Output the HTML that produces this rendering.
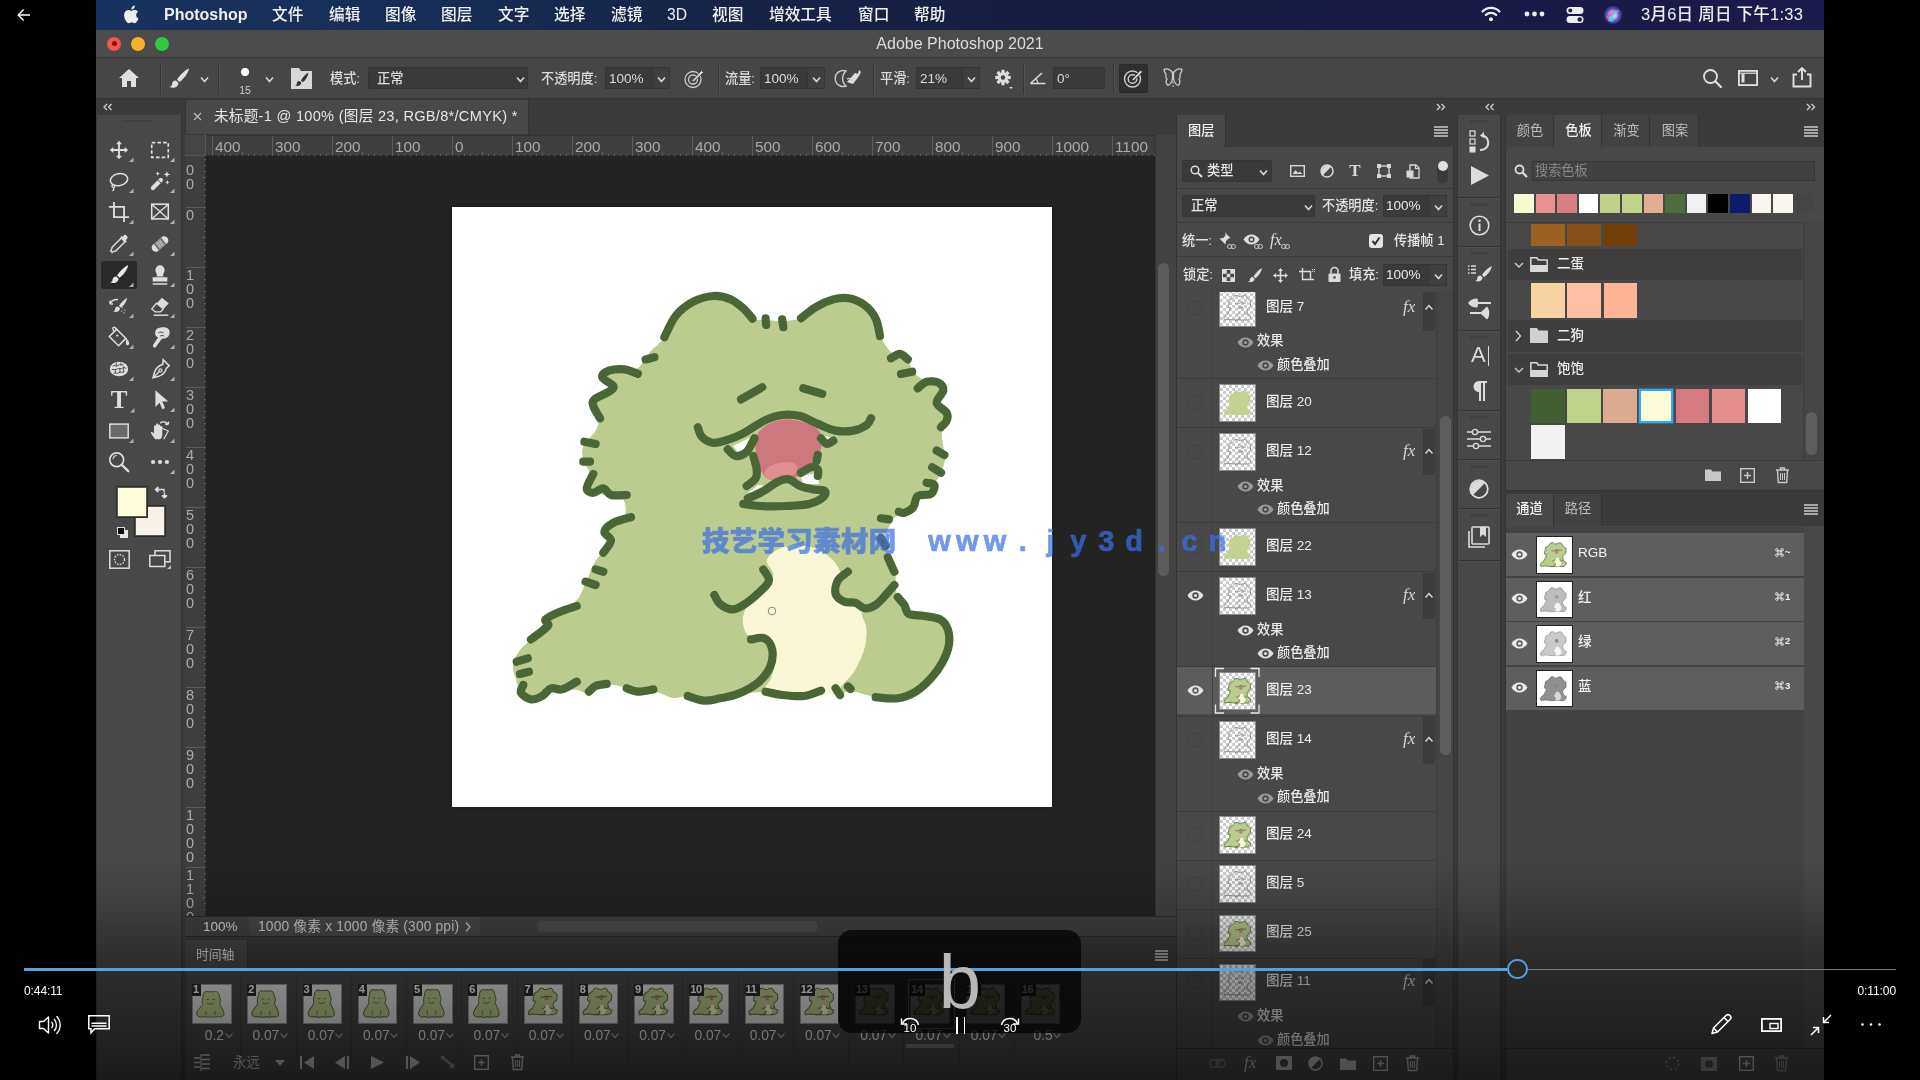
<!DOCTYPE html>
<html lang="zh"><head><meta charset="utf-8"><title>Photoshop</title>
<style>
html,body{margin:0;padding:0;background:#000;}
body{width:1920px;height:1080px;overflow:hidden;position:relative;font-family:"Liberation Sans","Noto Sans CJK SC",sans-serif;}
#root{position:absolute;left:0;top:0;width:1920px;height:1080px;overflow:hidden;will-change:transform;-webkit-font-smoothing:antialiased;}
#root div,#root svg{position:absolute;box-sizing:border-box;}
#root svg{overflow:visible;}
.t{font-family:"Liberation Sans","Noto Sans CJK SC",sans-serif;}
</style></head><body><div id="root">
<div style="left:96px;top:0px;width:1728px;height:1080px;background:#3b3b3b;"></div>
<div style="left:96px;top:0px;width:1728px;height:30px;background:linear-gradient(90deg,#17335f 0%,#172d58 18%,#172247 36%,#161b3f 60%,#1a1a48 85%,#1b1a4c 100%);"></div>
<div style="left:96px;top:30px;width:1728px;height:28px;background:#4b4b4b;border-bottom:1px solid #383838;"></div>
<div style="left:96px;top:58px;width:1728px;height:41px;background:#464646;border-bottom:1px solid #333;"></div>
<svg style="left:122px;top:4px;" width="18" height="20" viewBox="0 0 16 18"><path d="M12.6 9.9c0-2 1.6-2.9 1.7-3-0.9-1.4-2.4-1.5-2.9-1.6-1.2-.1-2.4.7-3 .7-.6 0-1.600-.7-2.600-.7-1.300 0-2.600.8-3.300 2-1.400 2.500-.4 6.100 1 8.100.7 1 1.500 2.100 2.500 2 1-.04 1.400-.65 2.600-.65 1.200 0 1.600.65 2.600.63 1.100-.02 1.800-1 2.400-2 .8-1.100 1.100-2.200 1.100-2.300-.03-.01-2.100-.8-2.100-3.200zM10.700 3.800c.5-.7.900-1.600.8-2.500-.8.030-1.700.5-2.300 1.200-.5.600-.95 1.500-.83 2.400.88.070 1.780-.44 2.330-1.100z" fill="#eee"/></svg>
<div class="t" style="top:4.30px;font-size:16px;line-height:22.40px;color:#f0f0f0;font-weight:700;white-space:nowrap;left:164px;">Photoshop</div>
<div class="t" style="top:4.01px;font-size:15.7px;line-height:21.98px;color:#f0f0f0;font-weight:500;white-space:nowrap;left:272px;">文件</div>
<div class="t" style="top:4.01px;font-size:15.7px;line-height:21.98px;color:#f0f0f0;font-weight:500;white-space:nowrap;left:329px;">编辑</div>
<div class="t" style="top:4.01px;font-size:15.7px;line-height:21.98px;color:#f0f0f0;font-weight:500;white-space:nowrap;left:385px;">图像</div>
<div class="t" style="top:4.01px;font-size:15.7px;line-height:21.98px;color:#f0f0f0;font-weight:500;white-space:nowrap;left:441px;">图层</div>
<div class="t" style="top:4.01px;font-size:15.7px;line-height:21.98px;color:#f0f0f0;font-weight:500;white-space:nowrap;left:498px;">文字</div>
<div class="t" style="top:4.01px;font-size:15.7px;line-height:21.98px;color:#f0f0f0;font-weight:500;white-space:nowrap;left:554px;">选择</div>
<div class="t" style="top:4.01px;font-size:15.7px;line-height:21.98px;color:#f0f0f0;font-weight:500;white-space:nowrap;left:611px;">滤镜</div>
<div class="t" style="top:4.01px;font-size:15.7px;line-height:21.98px;color:#f0f0f0;font-weight:500;white-space:nowrap;left:667px;">3D</div>
<div class="t" style="top:4.01px;font-size:15.7px;line-height:21.98px;color:#f0f0f0;font-weight:500;white-space:nowrap;left:712px;">视图</div>
<div class="t" style="top:4.01px;font-size:15.7px;line-height:21.98px;color:#f0f0f0;font-weight:500;white-space:nowrap;left:769px;">增效工具</div>
<div class="t" style="top:4.01px;font-size:15.7px;line-height:21.98px;color:#f0f0f0;font-weight:500;white-space:nowrap;left:858px;">窗口</div>
<div class="t" style="top:4.01px;font-size:15.7px;line-height:21.98px;color:#f0f0f0;font-weight:500;white-space:nowrap;left:914px;">帮助</div>
<div class="t" style="top:3.45px;font-size:16.5px;line-height:23.10px;color:#f0f0f0;font-weight:500;white-space:nowrap;left:1641px;letter-spacing:0.250px;">3月6日 周日 下午1:33</div>
<svg style="left:1480px;top:4px;" width="22" height="20" viewBox="0 0 22 20"><g fill="none" stroke="#eee" stroke-width="2.2" stroke-linecap="round"><path d="M2.500 7.500a12 12 0 0 1 17 0"/><path d="M5.800 11a7.400 7.400 0 0 1 10.400 0"/></g><circle cx="11" cy="15.300" r="2" fill="#eee"/></svg>
<svg style="left:1524px;top:10px;" width="22" height="8" viewBox="0 0 22 8"><circle cx="3" cy="4" r="2.400" fill="#eee"/><circle cx="10.500" cy="4" r="2.400" fill="#eee"/><circle cx="18" cy="4" r="2.400" fill="#eee"/></svg>
<svg style="left:1566px;top:6px;" width="18" height="18" viewBox="0 0 18 18"><rect x="0.500" y="1" width="17" height="7" rx="3.500" fill="#eee"/><circle cx="4.300" cy="4.500" r="2" fill="#1b1f52"/><rect x="0.500" y="10" width="17" height="7" rx="3.500" fill="#eee"/><circle cx="13.700" cy="13.500" r="2.300" fill="#1b1f52"/></svg>
<svg style="left:1603px;top:5px;" width="20" height="20" viewBox="0 0 20 20"><defs><radialGradient id="sg" cx="50%" cy="50%" r="50%"><stop offset="0" stop-color="#fff"/><stop offset="0.350" stop-color="#c9b8f0"/><stop offset="0.700" stop-color="#5a4fc0"/><stop offset="1" stop-color="#2a2f80"/></radialGradient></defs><circle cx="10" cy="10" r="9" fill="url(#sg)"/><path d="M3 13c3-5 8-8 14-7-5 1-8 4-9 9z" fill="#ff5a6a" opacity="0.850"/><path d="M5 16c1-5 5-9 11-11-4 3-6 7-6 12z" fill="#4fd8ff" opacity="0.800"/></svg>
<div style="left:107px;top:36.5px;width:14px;height:14px;background:#f4544d;border-radius:50%;"></div>
<div style="left:131px;top:36.5px;width:14px;height:14px;background:#f6b12d;border-radius:50%;"></div>
<div style="left:155px;top:36.5px;width:14px;height:14px;background:#2fc840;border-radius:50%;"></div>
<div style="left:111.5px;top:41px;width:5px;height:5px;background:#8a0d0a;border-radius:50%;"></div>
<div class="t" style="top:33.30px;font-size:16px;line-height:22.40px;color:#dcdcdc;font-weight:400;white-space:nowrap;left:660px;width:600px;text-align:center;">Adobe Photoshop 2021</div>
<svg style="left:118px;top:67px;" width="22" height="22" viewBox="0 0 22 22"><path d="M11 2 L1 11 h3 v9 h5 v-6 h4 v6 h5 v-9 h3 z" fill="#e0e0e0"/></svg>
<div style="left:160px;top:64px;width:1px;height:30px;background:#353535;"></div>
<div style="left:161px;top:64px;width:1px;height:30px;background:#525252;"></div>
<svg style="left:168px;top:67px;" width="22" height="22" viewBox="0 0 22 22"><path d="M20.500 1.500c-4 2-9 7-11.500 11l2.500 2.500c4-2.500 8-8 9.500-13z M8 13.500c-3 0-4 2-4 4 0 1.500-1.500 2-2.500 2.500 3 1.500 8.500 1 9-4z" fill="#e0e0e0"/></svg>
<svg style="left:199.5px;top:75.5px;" width="9.0" height="7.0" viewBox="0 0 9.0 7.0"><path d="M1 1.5 L4.5 5.5 L8.0 1.5" fill="none" stroke="#d4d4d4" stroke-width="1.7"/></svg>
<div style="left:218px;top:64px;width:1px;height:30px;background:#353535;"></div>
<div style="left:219px;top:64px;width:1px;height:30px;background:#525252;"></div>
<div style="left:241px;top:67.5px;width:8px;height:8px;background:#fff;border-radius:50%;"></div>
<div class="t" style="top:82.65px;font-size:10.5px;line-height:14.70px;color:#ccc;font-weight:400;white-space:nowrap;left:-55px;width:600px;text-align:center;">15</div>
<svg style="left:264.5px;top:75.5px;" width="9.0" height="7.0" viewBox="0 0 9.0 7.0"><path d="M1 1.5 L4.5 5.5 L8.0 1.5" fill="none" stroke="#d4d4d4" stroke-width="1.7"/></svg>
<svg style="left:291px;top:68px;" width="21" height="21" viewBox="0 0 21 21"><path d="M0 0h8l2 3h11v18h-21z" fill="#d8d8d8"/><path d="M17.500 4.500c-3 1.500-6 5-7.500 8l1.800 1.800c2.800-2 5.200-6 5.700-9.800z M8.500 13c-2 0-2.700 1.300-2.700 2.700 0 1-1 1.500-1.800 1.800 2 1 6 .6 6.300-2.700z" fill="#333"/></svg>
<div class="t" style="top:69.76px;font-size:13.2px;line-height:18.48px;color:#dcdcdc;font-weight:500;white-space:nowrap;left:330px;">模式:</div>
<div style="left:368px;top:67px;width:160px;height:22px;background:#3a3a3a;border:1px solid #353535;border-radius:2px;"></div>
<div class="t" style="top:69.76px;font-size:13.2px;line-height:18.48px;color:#dcdcdc;font-weight:500;white-space:nowrap;left:377px;">正常</div>
<svg style="left:515.5px;top:75.5px;" width="9.0" height="7.0" viewBox="0 0 9.0 7.0"><path d="M1 1.5 L4.5 5.5 L8.0 1.5" fill="none" stroke="#d4d4d4" stroke-width="1.7"/></svg>
<div class="t" style="top:69.76px;font-size:13.2px;line-height:18.48px;color:#dcdcdc;font-weight:500;white-space:nowrap;left:541px;">不透明度:</div>
<div style="left:605px;top:67px;width:48px;height:22px;background:#3a3a3a;border:1px solid #353535;"></div>
<div class="t" style="top:69.55px;font-size:13.5px;line-height:18.90px;color:#dcdcdc;font-weight:400;white-space:nowrap;left:609px;">100%</div>
<div style="left:653px;top:67px;width:17px;height:22px;background:#3f3f3f;border:1px solid #353535;border-left:none;"></div>
<svg style="left:657.0px;top:75.5px;" width="9.0" height="7.0" viewBox="0 0 9.0 7.0"><path d="M1 1.5 L4.5 5.5 L8.0 1.5" fill="none" stroke="#d4d4d4" stroke-width="1.7"/></svg>
<svg style="left:683px;top:67px;" width="22" height="22" viewBox="0 0 22 22"><circle cx="10" cy="12.500" r="8" fill="none" stroke="#ccc" stroke-width="1.300"/><circle cx="10" cy="12.500" r="4.500" fill="none" stroke="#ccc" stroke-width="1.300"/><path d="M9 13.500 L18.500 3.500 L20.500 5.500 L10.500 15z" fill="#ddd" stroke="#464646" stroke-width="1"/></svg>
<div style="left:718px;top:64px;width:1px;height:30px;background:#353535;"></div>
<div style="left:719px;top:64px;width:1px;height:30px;background:#525252;"></div>
<div class="t" style="top:69.76px;font-size:13.2px;line-height:18.48px;color:#dcdcdc;font-weight:500;white-space:nowrap;left:725px;">流量:</div>
<div style="left:760px;top:67px;width:48px;height:22px;background:#3a3a3a;border:1px solid #353535;"></div>
<div class="t" style="top:69.55px;font-size:13.5px;line-height:18.90px;color:#dcdcdc;font-weight:400;white-space:nowrap;left:764px;">100%</div>
<div style="left:808px;top:67px;width:17px;height:22px;background:#3f3f3f;border:1px solid #353535;border-left:none;"></div>
<svg style="left:812.0px;top:75.5px;" width="9.0" height="7.0" viewBox="0 0 9.0 7.0"><path d="M1 1.5 L4.5 5.5 L8.0 1.5" fill="none" stroke="#d4d4d4" stroke-width="1.7"/></svg>
<svg style="left:838px;top:67px;" width="24" height="22" viewBox="0 0 24 22"><path d="M8 4a8 8 0 1 0 0 15a10 10 0 0 1 0-15z" fill="none" stroke="#ccc" stroke-width="1.400"/><path d="M9 15 L17 6 l3 1 1-4 2 2 -2 4 -6 8 z" fill="#ddd"/><path d="M9 12 q3 -2 6 2" stroke="#ccc" fill="none" stroke-width="1.300"/></svg>
<div style="left:873px;top:64px;width:1px;height:30px;background:#353535;"></div>
<div style="left:874px;top:64px;width:1px;height:30px;background:#525252;"></div>
<div class="t" style="top:69.76px;font-size:13.2px;line-height:18.48px;color:#dcdcdc;font-weight:500;white-space:nowrap;left:880px;">平滑:</div>
<div style="left:916px;top:67px;width:47px;height:22px;background:#3a3a3a;border:1px solid #353535;"></div>
<div class="t" style="top:69.55px;font-size:13.5px;line-height:18.90px;color:#dcdcdc;font-weight:400;white-space:nowrap;left:920px;">21%</div>
<div style="left:963px;top:67px;width:17px;height:22px;background:#3f3f3f;border:1px solid #353535;border-left:none;"></div>
<svg style="left:967.0px;top:75.5px;" width="9.0" height="7.0" viewBox="0 0 9.0 7.0"><path d="M1 1.5 L4.5 5.5 L8.0 1.5" fill="none" stroke="#d4d4d4" stroke-width="1.7"/></svg>
<svg style="left:992px;top:67px;" width="22" height="22" viewBox="0 0 22 22"><g transform="translate(11,10.500) scale(0.860)"><rect x="-1.900" y="-9" width="3.800" height="5" transform="rotate(0)" fill="#ddd"/><rect x="-1.900" y="-9" width="3.800" height="5" transform="rotate(45)" fill="#ddd"/><rect x="-1.900" y="-9" width="3.800" height="5" transform="rotate(90)" fill="#ddd"/><rect x="-1.900" y="-9" width="3.800" height="5" transform="rotate(135)" fill="#ddd"/><rect x="-1.900" y="-9" width="3.800" height="5" transform="rotate(180)" fill="#ddd"/><rect x="-1.900" y="-9" width="3.800" height="5" transform="rotate(225)" fill="#ddd"/><rect x="-1.900" y="-9" width="3.800" height="5" transform="rotate(270)" fill="#ddd"/><rect x="-1.900" y="-9" width="3.800" height="5" transform="rotate(315)" fill="#ddd"/><circle r="6" fill="#ddd"/><circle r="2.600" fill="#464646"/></g><path d="M17 20l4 0-2 2z" fill="#ddd"/></svg>
<div style="left:1023px;top:64px;width:1px;height:30px;background:#353535;"></div>
<div style="left:1024px;top:64px;width:1px;height:30px;background:#525252;"></div>
<svg style="left:1029px;top:70px;" width="18" height="16" viewBox="0 0 18 16"><path d="M1.500 13.500 L13 3 M1.500 13.500 H16.500" stroke="#ddd" stroke-width="1.500" fill="none"/><path d="M9 13.500a7 7 0 0 0-2.500-5" stroke="#ddd" stroke-width="1.300" fill="none"/></svg>
<div style="left:1053px;top:67px;width:52px;height:22px;background:#3a3a3a;border:1px solid #353535;"></div>
<div class="t" style="top:69.55px;font-size:13.5px;line-height:18.90px;color:#dcdcdc;font-weight:400;white-space:nowrap;left:1057px;">0°</div>
<div style="left:1113px;top:64px;width:1px;height:30px;background:#353535;"></div>
<div style="left:1114px;top:64px;width:1px;height:30px;background:#525252;"></div>
<div style="left:1119px;top:64px;width:29px;height:29px;background:#2f2f2f;border:1px solid #2a2a2a;border-radius:2px;"></div>
<svg style="left:1122px;top:67px;" width="22" height="22" viewBox="0 0 22 22"><circle cx="10.500" cy="12" r="8" fill="none" stroke="#ccc" stroke-width="1.400"/><circle cx="10.500" cy="12" r="4.300" fill="none" stroke="#ccc" stroke-width="1.400"/><path d="M10 12.500 L18.500 3 L20.500 5 L11.500 14z" fill="#ddd" stroke="#2f2f2f" stroke-width="1"/></svg>
<svg style="left:1162px;top:67px;" width="22" height="22" viewBox="0 0 22 22"><path d="M10.500 6c-2-4-7-5-8.500-3.500 0 3 2 3.500 2 5.500s-1 3 1 4c-1.500 2-1 5 1 6.500 2-1 4-4 4.500-7z M11.500 6c2-4 7-5 8.500-3.500 0 3-2 3.500-2 5.500s1 3-1 4c1.500 2 1 5-1 6.500-2-1-4-4-4.500-7z" fill="none" stroke="#ccc" stroke-width="1.300"/><path d="M11 4v16" stroke="#ccc" stroke-width="1" stroke-dasharray="2 1.500"/></svg>
<svg style="left:1702px;top:68px;" width="21" height="21" viewBox="0 0 21 21"><circle cx="8.500" cy="8.500" r="6.500" fill="none" stroke="#e0e0e0" stroke-width="1.800"/><path d="M13.500 13.500L19 19" stroke="#e0e0e0" stroke-width="2.200" stroke-linecap="round"/></svg>
<svg style="left:1738px;top:70px;" width="20" height="16" viewBox="0 0 20 16"><rect x="0.900" y="0.900" width="18.200" height="14.200" fill="none" stroke="#e0e0e0" stroke-width="1.800"/><rect x="3.500" y="4" width="3" height="8.500" fill="#e0e0e0"/><path d="M1 3.200h18" stroke="#e0e0e0" stroke-width="1.200"/></svg>
<svg style="left:1769.5px;top:75.5px;" width="9.0" height="7.0" viewBox="0 0 9.0 7.0"><path d="M1 1.5 L4.5 5.5 L8.0 1.5" fill="none" stroke="#d4d4d4" stroke-width="1.7"/></svg>
<svg style="left:1792px;top:66px;" width="20" height="22" viewBox="0 0 20 22"><path d="M5 8.500H1.500V20.500H18.500V8.500H15" fill="none" stroke="#e0e0e0" stroke-width="1.900"/><path d="M10 14V2.500M6 6L10 2l4 4" fill="none" stroke="#e0e0e0" stroke-width="1.900"/></svg>
<div style="left:96px;top:99px;width:1728px;height:16px;background:#3b3b3b;"></div>
<svg style="left:103px;top:103px;" width="10" height="8" viewBox="0 0 10 8"><path d="M4 1L1 4L4 7M8.500 1L5.500 4L8.500 7" fill="none" stroke="#d0d0d0" stroke-width="1.300"/></svg>
<svg style="left:1436px;top:103px;" width="10" height="8" viewBox="0 0 10 8"><path d="M1 1L4 4L1 7M5.500 1L8.500 4L5.500 7" fill="none" stroke="#d0d0d0" stroke-width="1.300"/></svg>
<svg style="left:1485px;top:103px;" width="10" height="8" viewBox="0 0 10 8"><path d="M4 1L1 4L4 7M8.500 1L5.500 4L8.500 7" fill="none" stroke="#d0d0d0" stroke-width="1.300"/></svg>
<svg style="left:1806px;top:103px;" width="10" height="8" viewBox="0 0 10 8"><path d="M1 1L4 4L1 7M5.500 1L8.500 4L5.500 7" fill="none" stroke="#d0d0d0" stroke-width="1.300"/></svg>
<div style="left:96px;top:115px;width:86px;height:965px;background:#484848;border-left:1px solid #3a3a3a;border-right:1px solid #333;"></div>
<div style="left:122px;top:120px;width:30px;height:2px;background:#404040;"></div>
<div style="left:101px;top:261px;width:36px;height:28px;background:#2a2a2a;border-radius:3px;"></div>
<svg style="left:107px;top:138px;" width="24" height="24" viewBox="0 0 24 24"><g transform="translate(12 12) scale(0.92) translate(-12 -12)"><path d="M12 2l3.200 3.800h-2.200v5.200h5.200v-2.200l3.800 3.200-3.800 3.200v-2.200h-5.200v5.200h2.200l-3.200 3.800-3.200-3.800h2.200v-5.200h-5.200v2.200l-3.800-3.200 3.800-3.200v2.200h5.200v-5.200h-2.200z" fill="#dedede"/></g><path d="M26.500 19.500v4.500h-4.500z" fill="#b0b0b0"/></svg>
<svg style="left:148px;top:138px;" width="24" height="24" viewBox="0 0 24 24"><g transform="translate(12 12) scale(0.92) translate(-12 -12)"><rect x="3" y="4" width="18" height="16" fill="none" stroke="#dedede" stroke-width="1.800" stroke-dasharray="4 2.200"/></g><path d="M26.500 19.500v4.500h-4.500z" fill="#b0b0b0"/></svg>
<svg style="left:107px;top:169px;" width="24" height="24" viewBox="0 0 24 24"><g transform="translate(12 12) scale(0.92) translate(-12 -12)"><ellipse cx="12" cy="10.500" rx="9.500" ry="6.500" fill="none" stroke="#dedede" stroke-width="1.700" transform="rotate(-12 12 10.500)"/><path d="M5.500 15.500c-1.500 1-1.500 3 0 3.500s2.500-1.500 1-2.500M6 19c1 1.500 0 3-1 4" fill="none" stroke="#dedede" stroke-width="1.500"/></g><path d="M26.500 19.500v4.500h-4.500z" fill="#b0b0b0"/></svg>
<svg style="left:148px;top:169px;" width="24" height="24" viewBox="0 0 24 24"><g transform="translate(12 12) scale(0.92) translate(-12 -12)"><g transform="rotate(-45 9 15)"><rect x="0" y="12.700" width="17" height="4.600" rx="2.300" fill="#dedede"/><path d="M12.500 12.700v4.600" stroke="#484848" stroke-width="1"/></g><path d="M19.500 1l1 2.800 2.800 1-2.800 1-1 2.800-1-2.800-2.800-1 2.800-1z M9.500 1.500l.7 1.800 1.800.7-1.800.7-.7 1.800-.7-1.800-1.800-.7 1.800-.7z M20 11l.7 1.800 1.800.7-1.800.7-.7 1.800-.7-1.800-1.800-.7 1.800-.7z" fill="#dedede"/></g><path d="M26.500 19.500v4.500h-4.500z" fill="#b0b0b0"/></svg>
<svg style="left:107px;top:200px;" width="24" height="24" viewBox="0 0 24 24"><g transform="translate(12 12) scale(0.92) translate(-12 -12)"><path d="M6.500 1v16.500h16.500M1 6.500h16.500v16.500" fill="none" stroke="#dedede" stroke-width="2"/></g><path d="M26.500 19.500v4.500h-4.500z" fill="#b0b0b0"/></svg>
<svg style="left:148px;top:200px;" width="24" height="24" viewBox="0 0 24 24"><g transform="translate(12 12) scale(0.92) translate(-12 -12)"><rect x="3" y="3.500" width="18" height="16" fill="none" stroke="#dedede" stroke-width="1.700"/><path d="M3 3.500l18 16M21 3.500l-18 16" stroke="#dedede" stroke-width="1.500"/></g><path d="M26.500 19.500v4.500h-4.500z" fill="#b0b0b0"/></svg>
<svg style="left:107px;top:231.5px;" width="24" height="24" viewBox="0 0 24 24"><g transform="translate(12 12) scale(0.92) translate(-12 -12)"><path d="M14.500 5.500l4 4-9.500 9.500c-1.500 1.500-3.500.5-4.500 2l-1.500-1.500c1.500-1 .5-3 2-4.500z" fill="none" stroke="#dedede" stroke-width="1.600"/><path d="M13.500 4.500l6 6 1.200-1.200-1.500-1.500 2-2c1.200-1.200-2.300-4.700-3.500-3.500l-2 2-1-1z" fill="#dedede"/></g><path d="M26.500 19.500v4.500h-4.500z" fill="#b0b0b0"/></svg>
<svg style="left:148px;top:231.5px;" width="24" height="24" viewBox="0 0 24 24"><g transform="translate(12 12) scale(0.92) translate(-12 -12)"><g transform="rotate(-40 12 12)"><rect x="1.500" y="7.500" width="21" height="9" rx="4.500" fill="#dedede"/><rect x="8" y="7.500" width="8" height="9" fill="#484848" opacity="0.500"/><path d="M7.500 7.500v9M16.500 7.500v9" stroke="#484848" stroke-width="1.200"/><circle cx="10.500" cy="10.500" r="0.900" fill="#dedede"/><circle cx="13.500" cy="10.500" r="0.900" fill="#dedede"/><circle cx="10.500" cy="13.500" r="0.900" fill="#dedede"/><circle cx="13.500" cy="13.500" r="0.900" fill="#dedede"/></g></g><path d="M26.500 19.500v4.500h-4.500z" fill="#b0b0b0"/></svg>
<svg style="left:107px;top:263px;" width="24" height="24" viewBox="0 0 24 24"><g transform="translate(12 12) scale(0.92) translate(-12 -12)"><path d="M21.500 1.500c-4 2-9 7-11.500 11l2.500 2.500c4-2.500 8-8 9.500-13z M9 13.500c-3 0-4 2-4 4 0 1.500-1.500 2-2.500 2.500 3 1.500 8.500 1 9-4z" fill="#e8e8e8"/></g><path d="M26.500 19.500v4.500h-4.500z" fill="#b0b0b0"/></svg>
<svg style="left:148px;top:263px;" width="24" height="24" viewBox="0 0 24 24"><g transform="translate(12 12) scale(0.92) translate(-12 -12)"><path d="M8.500 11c-1-1.500-1.500-3-1.500-4.500a5 5 0 0 1 10 0c0 1.500-.5 3-1.500 4.500v2.500h-7z M4 14.500h16v4.500h-16z M4 21h16v1.700h-16z" fill="#dedede"/></g><path d="M26.500 19.500v4.500h-4.500z" fill="#b0b0b0"/></svg>
<svg style="left:107px;top:294px;" width="24" height="24" viewBox="0 0 24 24"><g transform="translate(12 12) scale(0.92) translate(-12 -12)"><path d="M21 3c-3 1.500-7 5.500-9 9l2 2c3-2 6-6.500 7-11z M11 12.500c-2.500 0-3.300 1.600-3.300 3.300 0 1.200-1.200 1.700-2 2 2.500 1.300 7 .8 7.400-3.300z" fill="#dedede"/><path d="M2 9.500c2-3.500 5.500-5 9-4.500M2 9.500l.3-3.500M2 9.500l3.500.300" fill="none" stroke="#dedede" stroke-width="1.500"/><path d="M16 14l.01 0M18.500 16.500l.01 0M15 17.500l.01 0M17.500 19.500l.01 0" stroke="#dedede" stroke-width="1.300" stroke-linecap="round"/></g><path d="M26.500 19.500v4.500h-4.500z" fill="#b0b0b0"/></svg>
<svg style="left:148px;top:294px;" width="24" height="24" viewBox="0 0 24 24"><g transform="translate(12 12) scale(0.92) translate(-12 -12)"><path d="M14 3l7.500 6-8.500 9.500h-6l-4-3.300z" fill="#dedede"/><path d="M3.500 15l5-6 7 6-3 3.500h-5.500z" fill="#484848"/><path d="M3 15.200l5.200-6.200 7.300 6-3 3.500h-5.500z" fill="none" stroke="#dedede" stroke-width="1.400"/><path d="M5 22h16" stroke="#dedede" stroke-width="1.600"/></g><path d="M26.500 19.500v4.500h-4.500z" fill="#b0b0b0"/></svg>
<svg style="left:107px;top:325px;" width="24" height="24" viewBox="0 0 24 24"><g transform="translate(12 12) scale(0.92) translate(-12 -12)"><path d="M9.500 3.500l10 10-8 8-10-10z" fill="none" stroke="#dedede" stroke-width="1.700"/><path d="M9.500 3.500c-3-3.500-6-2-3 2" fill="none" stroke="#dedede" stroke-width="1.500"/><path d="M3.500 11.500h14l-6 7z" fill="#dedede" opacity="0.001"/><path d="M19.500 13.500c2 1 3.500 3 3.500 5.500 0 2.500-3.500 2.500-3.500 0 0-2 .8-3 0-5.500z" fill="#dedede"/><circle cx="10" cy="10.500" r="1.200" fill="#dedede"/></g><path d="M26.500 19.500v4.500h-4.500z" fill="#b0b0b0"/></svg>
<svg style="left:148px;top:325px;" width="24" height="24" viewBox="0 0 24 24"><g transform="translate(12 12) scale(0.92) translate(-12 -12)"><path d="M7 5.500c1-3 5-4 8.500-4 4.500 0 7 2 7 5.500 0 3.500-2 6-5.500 6.500l-3 .3-6.500 9c-1.300 1.800-4.300 0-3-2l5.500-8.500c-2.500-.5-4-3-3-6.800z" fill="#dedede"/><path d="M10 7.500c2-1 4-1 6 0M12 11c1.500-.8 3-.8 4.500 0" stroke="#484848" stroke-width="1" fill="none"/></g><path d="M26.500 19.500v4.500h-4.500z" fill="#b0b0b0"/></svg>
<svg style="left:107px;top:356.5px;" width="24" height="24" viewBox="0 0 24 24"><g transform="translate(12 12) scale(0.92) translate(-12 -12)"><ellipse cx="12" cy="12" rx="10" ry="8" fill="#dedede"/><g stroke="#484848" stroke-width="1" fill="none"><path d="M5 9c2-2 4 1 6-1s4 1 6-1M4 13c2-2 4 1 6-1s4 1 6-1 3 1 4 0M6 17c2-2 4 1 6-1s4 1 6-1"/><path d="M9 5v4M14 5v3M8 12v4M13 11v5M17 9v6"/></g></g><path d="M26.500 19.500v4.500h-4.500z" fill="#b0b0b0"/></svg>
<svg style="left:148px;top:356.5px;" width="24" height="24" viewBox="0 0 24 24"><g transform="translate(12 12) scale(0.92) translate(-12 -12)"><path d="M15.500 2l6.500 6.500-3 2.500c-1 4-3 7-8.500 9l-6 1.500 1.500-6c2-5.500 5-7.500 9-8.500z" fill="none" stroke="#dedede" stroke-width="1.700"/><path d="M4.500 21.500l7-7" stroke="#dedede" stroke-width="1.400"/><circle cx="12.500" cy="13.500" r="1.700" fill="none" stroke="#dedede" stroke-width="1.300"/></g><path d="M26.500 19.500v4.500h-4.500z" fill="#b0b0b0"/></svg>
<div class="t" style="left:107px;top:381px;width:24px;height:36px;text-align:center;font-family:'Liberation Serif',serif;font-weight:700;font-size:25px;line-height:37px;color:#dedede;">T</div>
<svg style="left:129.5px;top:407.5px;" width="5" height="5" viewBox="0 0 5 5"><path d="M4.500 0v4.500h-4.500z" fill="#b0b0b0"/></svg>
<svg style="left:148px;top:388px;" width="24" height="24" viewBox="0 0 24 24"><g transform="translate(12 12) scale(0.92) translate(-12 -12)"><path d="M7 1.500v18l4.500-4.500 3 7 3-1.300-3-7h6.500z" fill="#dedede"/></g><path d="M26.500 19.500v4.500h-4.500z" fill="#b0b0b0"/></svg>
<svg style="left:107px;top:419px;" width="24" height="24" viewBox="0 0 24 24"><g transform="translate(12 12) scale(0.92) translate(-12 -12)"><rect x="2" y="4.500" width="20" height="15" fill="#6a6a6a" stroke="#dedede" stroke-width="1.600"/></g><path d="M26.500 19.500v4.500h-4.500z" fill="#b0b0b0"/></svg>
<svg style="left:148px;top:419px;" width="24" height="24" viewBox="0 0 24 24"><g transform="translate(12 12) scale(0.92) translate(-12 -12)"><path d="M7 21c-2-2-4-5-5-7.500 1.200-1.200 2.800 0 3.500 1.500v-8c0-1.500 2.200-1.500 2.200 0v-2c0-1.500 2.300-1.500 2.300 0v1c0-1.500 2.300-1.500 2.300 0v1.500c0-1.400 2.200-1.400 2.200 0v8c0 3-1.500 4.500-2 5.500z" fill="#dedede"/><path d="M12 3.500c3-2.500 7-1.500 9 1.500M21 5l.3-3.200M21 5l-3.200-.300" fill="none" stroke="#dedede" stroke-width="1.500"/><path d="M14 9l7 3-5 9" fill="none" stroke="#dedede" stroke-width="1.300"/></g><path d="M26.500 19.500v4.500h-4.500z" fill="#b0b0b0"/></svg>
<svg style="left:107px;top:450px;" width="24" height="24" viewBox="0 0 24 24"><g transform="translate(12 12) scale(0.92) translate(-12 -12)"><circle cx="9.500" cy="9.500" r="7.500" fill="none" stroke="#dedede" stroke-width="1.800"/><path d="M15 15l7 7" stroke="#dedede" stroke-width="2.600" stroke-linecap="round"/><path d="M5.500 9a4 4 0 0 1 4-4" fill="none" stroke="#dedede" stroke-width="1.200"/></g></svg>
<svg style="left:148px;top:450px;" width="24" height="24" viewBox="0 0 24 24"><g transform="translate(12 12) scale(0.92) translate(-12 -12)"><circle cx="4.500" cy="12" r="2.300" fill="#dedede"/><circle cx="12" cy="12" r="2.300" fill="#dedede"/><circle cx="19.500" cy="12" r="2.300" fill="#dedede"/></g><path d="M26.500 19.500v4.500h-4.500z" fill="#b0b0b0"/></svg>
<div style="left:135px;top:506px;width:30px;height:30px;background:#f8f2ea;border:1px solid #5a5a5a;box-shadow:0 0 0 1px #2c2c2c;"></div>
<div style="left:117px;top:487px;width:30px;height:30px;background:#fdfddb;border:1px solid #5a5a5a;box-shadow:0 0 0 1px #2c2c2c;"></div>
<svg style="left:155px;top:486px;" width="13" height="13" viewBox="0 0 13 13"><path d="M3 1L0.500 3.500 3 6M0.500 3.500h8.500v3M9.500 12l-2.500-2.500M9.500 12l2.500-2.500M9.500 12v-5" fill="none" stroke="#dedede" stroke-width="1.400"/><path d="M0 3.500l3.500-3v6z M9.500 12.500l-3-3.500h6z" fill="#dedede"/></svg>
<div style="left:120px;top:530px;width:8px;height:8px;background:#e8e8e8;"></div>
<div style="left:117px;top:527px;width:8px;height:8px;background:#111;border:1px solid #ddd;"></div>
<svg style="left:109px;top:550px;" width="21" height="19" viewBox="0 0 21 19"><rect x="0.800" y="0.800" width="19.400" height="17.400" fill="none" stroke="#dedede" stroke-width="1.500"/><circle cx="10.500" cy="9.500" r="5" fill="none" stroke="#dedede" stroke-width="1.300" stroke-dasharray="1.600 1.300"/></svg>
<svg style="left:149px;top:550px;" width="22" height="19" viewBox="0 0 22 19"><rect x="6" y="0.800" width="15" height="11" fill="#484848" stroke="#dedede" stroke-width="1.500"/><rect x="0.800" y="5.500" width="15" height="11" fill="#484848" stroke="#dedede" stroke-width="1.500"/><path d="M22 15v4h-4z" fill="#bbb"/></svg>
<div style="left:183px;top:99px;width:993px;height:35px;background:#3b3b3b;"></div>
<div style="left:185px;top:100px;width:344px;height:34px;background:#484848;border-left:1px solid #333;border-right:1px solid #333;"></div>
<svg style="left:193px;top:112px;" width="9" height="9" viewBox="0 0 9 9"><path d="M1 1l7 7M8 1l-7 7" stroke="#bbb" stroke-width="1.200"/></svg>
<div class="t" style="top:105.78px;font-size:14.6px;line-height:20.44px;color:#e6e6e6;font-weight:400;white-space:nowrap;left:214px;letter-spacing:0.280px;">未标题-1 @ 100% (图层 23, RGB/8*/CMYK) *</div>
<div style="left:185px;top:135px;width:991px;height:21px;background:#3e3e3e;border-top:1px solid #333;border-bottom:1px solid #2c2c2c;"></div>
<div style="left:185px;top:135px;width:21px;height:781px;background:#3e3e3e;border-right:1px solid #2c2c2c;"></div>
<div style="left:185px;top:135px;width:21px;height:21px;background:#454545;border-right:1px dotted #666;border-bottom:1px dotted #666;"></div>
<svg style="left:0px;top:0px;" width="1920" height="160" viewBox="0 0 1920 160"><path d="M212.5 136V156M218.5 154V156M224.5 154V156M230.5 154V156M236.5 154V156M242.5 152V156M248.5 154V156M254.5 154V156M260.5 154V156M266.5 154V156M272.5 136V156M278.5 154V156M284.5 154V156M290.5 154V156M296.5 154V156M302.5 152V156M308.5 154V156M314.5 154V156M320.5 154V156M326.5 154V156M332.5 136V156M338.5 154V156M344.5 154V156M350.5 154V156M356.5 154V156M362.5 152V156M368.5 154V156M374.5 154V156M380.5 154V156M386.5 154V156M392.5 136V156M398.5 154V156M404.5 154V156M410.5 154V156M416.5 154V156M422.5 152V156M428.5 154V156M434.5 154V156M440.5 154V156M446.5 154V156M452.5 136V156M458.5 154V156M464.5 154V156M470.5 154V156M476.5 154V156M482.5 152V156M488.5 154V156M494.5 154V156M500.5 154V156M506.5 154V156M512.5 136V156M518.5 154V156M524.5 154V156M530.5 154V156M536.5 154V156M542.5 152V156M548.5 154V156M554.5 154V156M560.5 154V156M566.5 154V156M572.5 136V156M578.5 154V156M584.5 154V156M590.5 154V156M596.5 154V156M602.5 152V156M608.5 154V156M614.5 154V156M620.5 154V156M626.5 154V156M632.5 136V156M638.5 154V156M644.5 154V156M650.5 154V156M656.5 154V156M662.5 152V156M668.5 154V156M674.5 154V156M680.5 154V156M686.5 154V156M692.5 136V156M698.5 154V156M704.5 154V156M710.5 154V156M716.5 154V156M722.5 152V156M728.5 154V156M734.5 154V156M740.5 154V156M746.5 154V156M752.5 136V156M758.5 154V156M764.5 154V156M770.5 154V156M776.5 154V156M782.5 152V156M788.5 154V156M794.5 154V156M800.5 154V156M806.5 154V156M812.5 136V156M818.5 154V156M824.5 154V156M830.5 154V156M836.5 154V156M842.5 152V156M848.5 154V156M854.5 154V156M860.5 154V156M866.5 154V156M872.5 136V156M878.5 154V156M884.5 154V156M890.5 154V156M896.5 154V156M902.5 152V156M908.5 154V156M914.5 154V156M920.5 154V156M926.5 154V156M932.5 136V156M938.5 154V156M944.5 154V156M950.5 154V156M956.5 154V156M962.5 152V156M968.5 154V156M974.5 154V156M980.5 154V156M986.5 154V156M992.5 136V156M998.5 154V156M1004.5 154V156M1010.5 154V156M1016.5 154V156M1022.5 152V156M1028.5 154V156M1034.5 154V156M1040.5 154V156M1046.5 154V156M1052.5 136V156M1058.5 154V156M1064.5 154V156M1070.5 154V156M1076.5 154V156M1082.5 152V156M1088.5 154V156M1094.5 154V156M1100.5 154V156M1106.5 154V156M1112.5 136V156M1118.5 154V156M1124.5 154V156M1130.5 154V156M1136.5 154V156M1142.5 152V156M1148.5 154V156M1154.5 154V156" stroke="#5c5c5c" stroke-width="1" fill="none"/></svg>
<div class="t" style="top:135.79px;font-size:15.3px;line-height:21.42px;color:#ababab;font-weight:400;white-space:nowrap;left:215px;">400</div>
<div class="t" style="top:135.79px;font-size:15.3px;line-height:21.42px;color:#ababab;font-weight:400;white-space:nowrap;left:275px;">300</div>
<div class="t" style="top:135.79px;font-size:15.3px;line-height:21.42px;color:#ababab;font-weight:400;white-space:nowrap;left:335px;">200</div>
<div class="t" style="top:135.79px;font-size:15.3px;line-height:21.42px;color:#ababab;font-weight:400;white-space:nowrap;left:395px;">100</div>
<div class="t" style="top:135.79px;font-size:15.3px;line-height:21.42px;color:#ababab;font-weight:400;white-space:nowrap;left:455px;">0</div>
<div class="t" style="top:135.79px;font-size:15.3px;line-height:21.42px;color:#ababab;font-weight:400;white-space:nowrap;left:515px;">100</div>
<div class="t" style="top:135.79px;font-size:15.3px;line-height:21.42px;color:#ababab;font-weight:400;white-space:nowrap;left:575px;">200</div>
<div class="t" style="top:135.79px;font-size:15.3px;line-height:21.42px;color:#ababab;font-weight:400;white-space:nowrap;left:635px;">300</div>
<div class="t" style="top:135.79px;font-size:15.3px;line-height:21.42px;color:#ababab;font-weight:400;white-space:nowrap;left:695px;">400</div>
<div class="t" style="top:135.79px;font-size:15.3px;line-height:21.42px;color:#ababab;font-weight:400;white-space:nowrap;left:755px;">500</div>
<div class="t" style="top:135.79px;font-size:15.3px;line-height:21.42px;color:#ababab;font-weight:400;white-space:nowrap;left:815px;">600</div>
<div class="t" style="top:135.79px;font-size:15.3px;line-height:21.42px;color:#ababab;font-weight:400;white-space:nowrap;left:875px;">700</div>
<div class="t" style="top:135.79px;font-size:15.3px;line-height:21.42px;color:#ababab;font-weight:400;white-space:nowrap;left:935px;">800</div>
<div class="t" style="top:135.79px;font-size:15.3px;line-height:21.42px;color:#ababab;font-weight:400;white-space:nowrap;left:995px;">900</div>
<div class="t" style="top:135.79px;font-size:15.3px;line-height:21.42px;color:#ababab;font-weight:400;white-space:nowrap;left:1055px;">1000</div>
<div class="t" style="top:135.79px;font-size:15.3px;line-height:21.42px;color:#ababab;font-weight:400;white-space:nowrap;left:1115px;">1100</div>
<svg style="left:0px;top:0px;" width="210" height="920" viewBox="0 0 210 920"><path d="M204 159.5H206M204 165.5H206M204 171.5H206M202 177.5H206M204 183.5H206M204 189.5H206M204 195.5H206M204 201.5H206M186 207.5H206M204 213.5H206M204 219.5H206M204 225.5H206M204 231.5H206M202 237.5H206M204 243.5H206M204 249.5H206M204 255.5H206M204 261.5H206M186 267.5H206M204 273.5H206M204 279.5H206M204 285.5H206M204 291.5H206M202 297.5H206M204 303.5H206M204 309.5H206M204 315.5H206M204 321.5H206M186 327.5H206M204 333.5H206M204 339.5H206M204 345.5H206M204 351.5H206M202 357.5H206M204 363.5H206M204 369.5H206M204 375.5H206M204 381.5H206M186 387.5H206M204 393.5H206M204 399.5H206M204 405.5H206M204 411.5H206M202 417.5H206M204 423.5H206M204 429.5H206M204 435.5H206M204 441.5H206M186 447.5H206M204 453.5H206M204 459.5H206M204 465.5H206M204 471.5H206M202 477.5H206M204 483.5H206M204 489.5H206M204 495.5H206M204 501.5H206M186 507.5H206M204 513.5H206M204 519.5H206M204 525.5H206M204 531.5H206M202 537.5H206M204 543.5H206M204 549.5H206M204 555.5H206M204 561.5H206M186 567.5H206M204 573.5H206M204 579.5H206M204 585.5H206M204 591.5H206M202 597.5H206M204 603.5H206M204 609.5H206M204 615.5H206M204 621.5H206M186 627.5H206M204 633.5H206M204 639.5H206M204 645.5H206M204 651.5H206M202 657.5H206M204 663.5H206M204 669.5H206M204 675.5H206M204 681.5H206M186 687.5H206M204 693.5H206M204 699.5H206M204 705.5H206M204 711.5H206M202 717.5H206M204 723.5H206M204 729.5H206M204 735.5H206M204 741.5H206M186 747.5H206M204 753.5H206M204 759.5H206M204 765.5H206M204 771.5H206M202 777.5H206M204 783.5H206M204 789.5H206M204 795.5H206M204 801.5H206M186 807.5H206M204 813.5H206M204 819.5H206M204 825.5H206M204 831.5H206M202 837.5H206M204 843.5H206M204 849.5H206M204 855.5H206M204 861.5H206M186 867.5H206M204 873.5H206M204 879.5H206M204 885.5H206M204 891.5H206M202 897.5H206M204 903.5H206M204 909.5H206" stroke="#5c5c5c" stroke-width="1" fill="none"/></svg>
<div style="left:185px;top:156px;width:20px;height:760px;background:none;overflow:hidden;"><div class="t" style="left:0;width:10px;text-align:center;top:3.85px;font-size:14.500px;line-height:20.300px;color:#ababab;">0</div><div class="t" style="left:0;width:10px;text-align:center;top:17.85px;font-size:14.500px;line-height:20.300px;color:#ababab;">0</div><div class="t" style="left:0;width:10px;text-align:center;top:48.85px;font-size:14.500px;line-height:20.300px;color:#ababab;">0</div><div class="t" style="left:0;width:10px;text-align:center;top:108.85px;font-size:14.500px;line-height:20.300px;color:#ababab;">1</div><div class="t" style="left:0;width:10px;text-align:center;top:122.85px;font-size:14.500px;line-height:20.300px;color:#ababab;">0</div><div class="t" style="left:0;width:10px;text-align:center;top:136.85px;font-size:14.500px;line-height:20.300px;color:#ababab;">0</div><div class="t" style="left:0;width:10px;text-align:center;top:168.85px;font-size:14.500px;line-height:20.300px;color:#ababab;">2</div><div class="t" style="left:0;width:10px;text-align:center;top:182.85px;font-size:14.500px;line-height:20.300px;color:#ababab;">0</div><div class="t" style="left:0;width:10px;text-align:center;top:196.85px;font-size:14.500px;line-height:20.300px;color:#ababab;">0</div><div class="t" style="left:0;width:10px;text-align:center;top:228.85px;font-size:14.500px;line-height:20.300px;color:#ababab;">3</div><div class="t" style="left:0;width:10px;text-align:center;top:242.85px;font-size:14.500px;line-height:20.300px;color:#ababab;">0</div><div class="t" style="left:0;width:10px;text-align:center;top:256.85px;font-size:14.500px;line-height:20.300px;color:#ababab;">0</div><div class="t" style="left:0;width:10px;text-align:center;top:288.85px;font-size:14.500px;line-height:20.300px;color:#ababab;">4</div><div class="t" style="left:0;width:10px;text-align:center;top:302.85px;font-size:14.500px;line-height:20.300px;color:#ababab;">0</div><div class="t" style="left:0;width:10px;text-align:center;top:316.85px;font-size:14.500px;line-height:20.300px;color:#ababab;">0</div><div class="t" style="left:0;width:10px;text-align:center;top:348.85px;font-size:14.500px;line-height:20.300px;color:#ababab;">5</div><div class="t" style="left:0;width:10px;text-align:center;top:362.85px;font-size:14.500px;line-height:20.300px;color:#ababab;">0</div><div class="t" style="left:0;width:10px;text-align:center;top:376.85px;font-size:14.500px;line-height:20.300px;color:#ababab;">0</div><div class="t" style="left:0;width:10px;text-align:center;top:408.85px;font-size:14.500px;line-height:20.300px;color:#ababab;">6</div><div class="t" style="left:0;width:10px;text-align:center;top:422.85px;font-size:14.500px;line-height:20.300px;color:#ababab;">0</div><div class="t" style="left:0;width:10px;text-align:center;top:436.85px;font-size:14.500px;line-height:20.300px;color:#ababab;">0</div><div class="t" style="left:0;width:10px;text-align:center;top:468.85px;font-size:14.500px;line-height:20.300px;color:#ababab;">7</div><div class="t" style="left:0;width:10px;text-align:center;top:482.85px;font-size:14.500px;line-height:20.300px;color:#ababab;">0</div><div class="t" style="left:0;width:10px;text-align:center;top:496.85px;font-size:14.500px;line-height:20.300px;color:#ababab;">0</div><div class="t" style="left:0;width:10px;text-align:center;top:528.85px;font-size:14.500px;line-height:20.300px;color:#ababab;">8</div><div class="t" style="left:0;width:10px;text-align:center;top:542.85px;font-size:14.500px;line-height:20.300px;color:#ababab;">0</div><div class="t" style="left:0;width:10px;text-align:center;top:556.85px;font-size:14.500px;line-height:20.300px;color:#ababab;">0</div><div class="t" style="left:0;width:10px;text-align:center;top:588.85px;font-size:14.500px;line-height:20.300px;color:#ababab;">9</div><div class="t" style="left:0;width:10px;text-align:center;top:602.85px;font-size:14.500px;line-height:20.300px;color:#ababab;">0</div><div class="t" style="left:0;width:10px;text-align:center;top:616.85px;font-size:14.500px;line-height:20.300px;color:#ababab;">0</div><div class="t" style="left:0;width:10px;text-align:center;top:648.85px;font-size:14.500px;line-height:20.300px;color:#ababab;">1</div><div class="t" style="left:0;width:10px;text-align:center;top:662.85px;font-size:14.500px;line-height:20.300px;color:#ababab;">0</div><div class="t" style="left:0;width:10px;text-align:center;top:676.85px;font-size:14.500px;line-height:20.300px;color:#ababab;">0</div><div class="t" style="left:0;width:10px;text-align:center;top:690.85px;font-size:14.500px;line-height:20.300px;color:#ababab;">0</div><div class="t" style="left:0;width:10px;text-align:center;top:708.85px;font-size:14.500px;line-height:20.300px;color:#ababab;">1</div><div class="t" style="left:0;width:10px;text-align:center;top:722.85px;font-size:14.500px;line-height:20.300px;color:#ababab;">1</div><div class="t" style="left:0;width:10px;text-align:center;top:736.85px;font-size:14.500px;line-height:20.300px;color:#ababab;">0</div><div class="t" style="left:0;width:10px;text-align:center;top:750.85px;font-size:14.500px;line-height:20.300px;color:#ababab;">0</div></div>
<div style="left:206px;top:156px;width:949px;height:760px;background:#232323;"></div>
<div style="left:1155px;top:135px;width:21px;height:781px;background:#434343;border-left:1px solid #333;"></div>
<div style="left:1158px;top:263px;width:11px;height:313px;background:#5c5c5c;border-radius:6px;"></div>
<div style="left:452px;top:207px;width:600px;height:600px;background:#ffffff;box-shadow:0 0 3px rgba(0,0,0,0.5);"></div>
<svg style="left:0px;top:0px;" width="1920" height="1080" viewBox="0 0 1920 1080"><path d="M664.0 338.0C668.3 332.0 671.2 322.0 676.0 316.0C680.8 310.0 686.8 305.3 693.0 302.0C699.2 298.7 706.7 296.5 713.0 296.0C719.3 295.5 725.7 296.7 731.0 299.0C736.3 301.3 741.3 306.7 745.0 310.0C748.7 313.3 749.5 317.3 753.0 319.0C756.5 320.7 761.0 319.7 766.0 320.0C771.0 320.3 777.2 321.3 783.0 321.0C788.8 320.7 795.5 320.3 801.0 318.0C806.5 315.7 810.7 310.2 816.0 307.0C821.3 303.8 827.5 300.5 833.0 299.0C838.5 297.5 843.8 297.0 849.0 298.0C854.2 299.0 859.5 301.7 864.0 305.0C868.5 308.3 873.2 312.7 876.0 318.0C878.8 323.3 878.5 331.3 881.0 337.0C883.5 342.7 887.8 349.3 891.0 352.0C894.2 354.7 897.2 351.7 900.0 353.0C902.8 354.3 905.5 356.5 908.0 360.0C910.5 363.5 911.8 370.5 915.0 374.0C918.2 377.5 923.0 379.5 927.0 381.0C931.0 382.5 936.2 381.3 939.0 383.0C941.8 384.7 944.2 387.7 944.0 391.0C943.8 394.3 937.5 399.3 938.0 403.0C938.5 406.7 945.2 410.2 947.0 413.0C948.8 415.8 949.8 416.8 949.0 420.0C948.2 423.2 942.8 427.0 942.0 432.0C941.2 437.0 943.3 446.0 944.0 450.0C944.7 454.0 946.5 452.2 946.0 456.0C945.5 459.8 943.0 468.2 941.0 473.0C939.0 477.8 935.7 481.2 934.0 485.0C932.3 488.8 933.7 493.8 931.0 496.0C928.3 498.2 921.0 495.7 918.0 498.0C915.0 500.3 916.0 507.3 913.0 510.0C910.0 512.7 903.3 512.3 900.0 514.0C896.7 515.7 895.7 515.7 893.0 520.0C890.3 524.3 884.7 533.7 884.0 540.0C883.3 546.3 887.2 552.7 889.0 558.0C890.8 563.3 893.7 565.5 895.0 572.0C896.3 578.5 895.3 591.3 897.0 597.0C898.7 602.7 903.0 603.2 905.0 606.0C907.0 608.8 905.8 612.3 909.0 614.0C912.2 615.7 918.8 615.2 924.0 616.0C929.2 616.8 936.0 616.7 940.0 619.0C944.0 621.3 946.5 625.7 948.0 630.0C949.5 634.3 950.0 639.5 949.0 645.0C948.0 650.5 945.0 657.5 942.0 663.0C939.0 668.5 935.3 673.2 931.0 678.0C926.7 682.8 921.5 688.7 916.0 692.0C910.5 695.3 904.7 697.2 898.0 698.0C891.3 698.8 884.0 698.2 876.0 697.0C868.0 695.8 856.0 691.3 850.0 691.0C844.0 690.7 844.8 695.0 840.0 695.0C835.2 695.0 827.0 690.8 821.0 691.0C815.0 691.2 810.5 695.3 804.0 696.0C797.5 696.7 788.3 695.7 782.0 695.0C775.7 694.3 773.3 692.2 766.0 692.0C758.7 691.8 745.7 693.0 738.0 694.0C730.3 695.0 725.7 696.8 720.0 698.0C714.3 699.2 709.3 701.3 704.0 701.0C698.7 700.7 693.2 696.5 688.0 696.0C682.8 695.5 678.3 698.7 673.0 698.0C667.7 697.3 661.8 693.0 656.0 692.0C650.2 691.0 642.8 692.7 638.0 692.0C633.2 691.3 632.2 689.3 627.0 688.0C621.8 686.7 612.2 684.3 607.0 684.0C601.8 683.7 599.0 684.3 596.0 686.0C593.0 687.7 592.2 693.3 589.0 694.0C585.8 694.7 581.5 690.7 577.0 690.0C572.5 689.3 566.3 690.2 562.0 690.0C557.7 689.8 554.3 688.0 551.0 689.0C547.7 690.0 545.3 694.2 542.0 696.0C538.7 697.8 534.5 700.5 531.0 700.0C527.5 699.5 523.5 696.3 521.0 693.0C518.5 689.7 517.3 684.7 516.0 680.0C514.7 675.3 512.3 670.0 513.0 665.0C513.7 660.0 517.0 654.3 520.0 650.0C523.0 645.7 526.8 643.7 531.0 639.0C535.2 634.3 540.2 626.7 545.0 622.0C549.8 617.3 554.7 614.7 560.0 611.0C565.3 607.3 572.7 604.8 577.0 600.0C581.3 595.2 582.8 588.7 586.0 582.0C589.2 575.3 593.2 564.8 596.0 560.0C598.8 555.2 601.0 556.3 603.0 553.0C605.0 549.7 607.8 543.8 608.0 540.0C608.2 536.2 603.2 533.0 604.0 530.0C604.8 527.0 609.5 524.3 613.0 522.0C616.5 519.7 623.5 520.0 625.0 516.0C626.5 512.0 626.2 501.7 622.0 498.0C617.8 494.3 605.8 495.5 600.0 494.0C594.2 492.5 588.7 492.3 587.0 489.0C585.3 485.7 590.5 478.5 590.0 474.0C589.5 469.5 585.2 466.5 584.0 462.0C582.8 457.5 581.0 452.3 583.0 447.0C585.0 441.7 593.5 434.7 596.0 430.0C598.5 425.3 598.5 423.0 598.0 419.0C597.5 415.0 593.7 409.3 593.0 406.0C592.3 402.7 591.3 401.5 594.0 399.0C596.7 396.5 606.0 393.2 609.0 391.0C612.0 388.8 613.2 388.2 612.0 386.0C610.8 383.8 603.3 380.3 602.0 378.0C600.7 375.7 600.2 373.7 604.0 372.0C607.8 370.3 619.3 368.7 625.0 368.0C630.7 367.3 633.8 370.7 638.0 368.0C642.2 365.3 645.7 357.0 650.0 352.0C654.3 347.0 659.7 344.0 664.0 338.0Z" fill="#bccb8e"/><path d="M766.7 560.6C767.5 556.5 772.6 552.0 777.8 549.4C783.0 546.8 791.1 545.0 797.8 545.0C804.5 545.0 811.9 546.8 817.8 549.4C823.7 552.0 829.3 556.3 833.3 560.6C837.3 564.9 838.9 569.3 842.0 575.0C845.1 580.7 848.6 588.9 852.0 595.0C855.4 601.1 859.8 606.0 862.2 611.7C864.7 617.4 866.3 623.1 866.7 629.4C867.1 635.7 866.2 642.7 864.4 649.4C862.5 656.1 858.9 663.8 855.6 669.4C852.3 675.0 848.5 678.7 844.4 682.8C840.3 686.9 838.4 691.7 831.0 693.9C823.6 696.1 811.1 696.0 800.0 696.0C788.9 696.0 769.2 696.9 764.4 693.9C759.6 690.9 769.1 683.8 771.0 678.3C772.9 672.8 775.2 666.1 775.6 660.6C776.0 655.1 775.2 648.7 773.3 645.0C771.4 641.3 768.5 639.8 764.4 638.3C760.3 636.8 752.4 638.2 748.9 636.0C745.4 633.8 744.0 629.0 743.3 625.0C742.5 621.0 742.7 615.8 744.4 611.7C746.1 607.6 749.2 604.7 753.3 600.6C757.4 596.5 765.6 591.7 768.9 587.2C772.2 582.8 773.7 578.3 773.3 573.9C772.9 569.5 766.0 564.7 766.7 560.6Z" fill="#faf7d6"/><path d="M847.8 571.7C842.4 576.0 839.8 576.9 837.8 580.6C835.8 584.3 834.5 590.4 835.6 593.9C836.7 597.4 841.1 600.2 844.4 601.7C847.7 603.2 852.3 601.7 855.6 602.8C858.9 603.9 861.1 607.9 864.4 608.3C867.7 608.7 871.9 607.4 875.6 605.0C879.3 602.6 883.6 597.2 886.7 593.9C889.8 590.6 893.4 590.6 894.4 585.0C895.4 579.4 897.1 565.0 893.0 560.0C888.9 555.0 877.5 553.0 870.0 555.0C862.5 557.0 853.2 567.4 847.8 571.7Z" fill="#bccb8e"/><path d="M862.0 611.0C859.8 614.9 866.3 623.0 866.7 629.4C867.1 635.8 866.2 642.7 864.4 649.4C862.5 656.1 858.5 663.6 855.6 669.4C852.7 675.2 846.3 680.2 847.0 684.0C847.7 687.8 855.2 689.8 860.0 692.0C864.8 694.2 869.7 696.0 876.0 697.0C882.3 698.0 891.3 698.8 898.0 698.0C904.7 697.2 910.5 695.3 916.0 692.0C921.5 688.7 926.7 682.8 931.0 678.0C935.3 673.2 939.0 668.5 942.0 663.0C945.0 657.5 948.0 650.5 949.0 645.0C950.0 639.5 949.5 634.3 948.0 630.0C946.5 625.7 946.5 621.7 940.0 619.0C933.5 616.3 916.2 617.2 909.0 614.0C901.8 610.8 901.8 601.3 897.0 600.0C892.2 598.7 885.8 604.2 880.0 606.0C874.2 607.8 864.2 607.1 862.0 611.0Z" fill="#bccb8e"/><path d="M755.6 438.3C757.1 432.4 761.9 428.1 766.7 425.0C771.5 421.9 778.5 419.9 784.4 419.4C790.3 418.8 796.6 420.0 802.2 421.7C807.8 423.4 814.5 426.2 817.8 429.4C821.1 432.5 822.2 435.8 822.2 440.6C822.2 445.4 820.0 453.5 817.8 458.3C815.6 463.1 813.0 466.1 808.9 469.4C804.8 472.7 798.8 476.4 793.3 478.3C787.8 480.2 780.4 481.0 775.6 480.6C770.8 480.2 767.4 479.3 764.4 476.0C761.4 472.7 759.3 466.9 757.8 460.6C756.3 454.3 754.1 444.2 755.6 438.3Z" fill="#cd777e"/><ellipse cx="781" cy="471" rx="17" ry="8.500" fill="#e08e92" transform="rotate(-12 781 471)"/><path d="M733 446L751 437L747 448L738 452Z" fill="#fff"/><path d="M823 435L832 438L827 442Z" fill="#fff"/><path d="M801 476L817 473L819 484L803 484Z" fill="#fff"/><path d="M747 494L758 485L765 486L754 496Z" fill="#fff"/><path d="M747.8 498.3C750.9 496.3 757.2 494.5 762.2 491.7C767.2 488.9 773.3 483.8 777.8 481.7C782.2 479.6 785.2 478.7 788.9 479.4C792.6 480.1 795.9 484.3 800.0 486.0C804.1 487.7 809.2 488.6 813.3 489.4C817.4 490.2 822.7 489.3 824.4 490.6C826.1 491.9 825.9 495.0 823.3 497.2C820.7 499.4 815.0 502.4 808.9 503.9C802.8 505.4 794.9 505.6 786.7 506.0C778.6 506.4 767.2 506.4 760.0 506.0C752.8 505.6 745.3 505.2 743.3 503.9C741.3 502.6 744.6 500.3 747.8 498.3Z" fill="#bccb8e"/><path d="M664.4 337.2C666.3 333.7 670.8 321.9 675.6 316.0C680.4 310.1 687.0 305.0 693.3 301.7C699.6 298.4 707.0 296.4 713.3 296.0C719.6 295.6 725.9 297.2 731.0 299.4C736.1 301.6 740.4 305.8 744.0 309.0C747.6 312.2 751.1 317.1 752.5 318.7" fill="none" stroke="#4a6536" stroke-width="8.200" stroke-linecap="round" stroke-linejoin="round"/><path d="M765.6 318.3 L766.2 325.0" fill="none" stroke="#4a6536" stroke-width="8.200" stroke-linecap="round" stroke-linejoin="round"/><path d="M782.2 319.4 L783.3 327.2" fill="none" stroke="#4a6536" stroke-width="8.200" stroke-linecap="round" stroke-linejoin="round"/><path d="M645.6 359.4 L654.4 357.2" fill="none" stroke="#4a6536" stroke-width="8.200" stroke-linecap="round" stroke-linejoin="round"/><path d="M637.8 373.9C635.6 373.1 629.2 369.9 624.4 369.4C619.6 368.8 612.6 369.3 608.9 370.6C605.2 371.9 601.5 374.6 602.2 377.2C602.9 379.8 612.2 383.6 613.3 386.0C614.4 388.4 612.0 389.5 608.9 391.7C605.8 393.9 597.0 397.0 594.4 399.4C591.8 401.8 592.4 402.9 593.3 406.0C594.2 409.1 598.9 416.2 600.0 418.3" fill="none" stroke="#4a6536" stroke-width="8.200" stroke-linecap="round" stroke-linejoin="round"/><path d="M584.4 441.7 L595.6 443.9" fill="none" stroke="#4a6536" stroke-width="8.200" stroke-linecap="round" stroke-linejoin="round"/><path d="M583.3 461.7 L590.0 461.7" fill="none" stroke="#4a6536" stroke-width="8.200" stroke-linecap="round" stroke-linejoin="round"/><path d="M593.3 473.9C592.2 476.3 586.7 485.1 586.7 488.3C586.7 491.5 590.5 492.8 593.3 492.8C596.1 492.8 600.3 487.9 603.3 488.3C606.2 488.7 607.1 493.9 611.0 495.0C614.9 496.1 624.1 495.0 626.7 495.0" fill="none" stroke="#4a6536" stroke-width="8.200" stroke-linecap="round" stroke-linejoin="round"/><path d="M631.0 517.2C628.0 518.1 617.7 520.4 613.3 522.8C608.9 525.2 604.8 528.7 604.4 531.7C604.0 534.7 611.2 537.1 611.0 540.6C610.8 544.1 604.6 550.8 603.3 552.8" fill="none" stroke="#4a6536" stroke-width="8.200" stroke-linecap="round" stroke-linejoin="round"/><path d="M595.6 569.4 L603.3 571.7" fill="none" stroke="#4a6536" stroke-width="8.200" stroke-linecap="round" stroke-linejoin="round"/><path d="M585.6 581.7 L595.6 585.0" fill="none" stroke="#4a6536" stroke-width="8.200" stroke-linecap="round" stroke-linejoin="round"/><path d="M576.7 606.0C573.9 607.0 565.2 609.5 560.0 611.7C554.8 613.9 547.6 617.0 545.6 619.4C543.6 621.8 550.2 622.7 547.8 626.0C545.4 629.3 533.8 637.2 531.0 639.4" fill="none" stroke="#4a6536" stroke-width="8.200" stroke-linecap="round" stroke-linejoin="round"/><path d="M516.7 661.7 L527.8 658.3" fill="none" stroke="#4a6536" stroke-width="8.200" stroke-linecap="round" stroke-linejoin="round"/><path d="M520.0 673.9 L528.9 671.7" fill="none" stroke="#4a6536" stroke-width="8.200" stroke-linecap="round" stroke-linejoin="round"/><path d="M523.3 685.0C522.9 686.3 519.7 690.4 521.0 692.8C522.3 695.2 527.5 698.9 531.0 699.4C534.5 699.9 538.9 697.9 542.2 696.0C545.5 694.1 547.7 689.4 551.0 688.3C554.3 687.2 557.9 690.5 562.2 689.4C566.5 688.3 574.3 683.0 576.7 681.7" fill="none" stroke="#4a6536" stroke-width="8.200" stroke-linecap="round" stroke-linejoin="round"/><path d="M588.9 691.7C590.0 690.8 592.6 687.3 595.6 686.0C598.6 684.7 604.9 684.2 606.7 683.9" fill="none" stroke="#4a6536" stroke-width="8.200" stroke-linecap="round" stroke-linejoin="round"/><path d="M626.7 688.3C628.6 688.9 633.4 691.5 637.8 691.7C642.2 691.9 650.7 689.8 653.3 689.4" fill="none" stroke="#4a6536" stroke-width="8.200" stroke-linecap="round" stroke-linejoin="round"/><path d="M801.0 318.3C803.4 316.4 810.2 310.4 815.6 307.2C821.0 304.0 827.8 300.9 833.3 299.4C838.8 297.9 843.7 297.4 848.9 298.3C854.1 299.2 859.9 301.7 864.4 305.0C868.9 308.3 873.0 313.1 875.6 318.3C878.2 323.5 879.3 333.1 880.0 336.0" fill="none" stroke="#4a6536" stroke-width="8.200" stroke-linecap="round" stroke-linejoin="round"/><path d="M891.0 358.3C892.5 357.6 897.2 353.7 900.0 353.9C902.8 354.1 906.5 358.5 907.8 359.4" fill="none" stroke="#4a6536" stroke-width="8.200" stroke-linecap="round" stroke-linejoin="round"/><path d="M901.0 373.9 L912.2 371.7" fill="none" stroke="#4a6536" stroke-width="8.200" stroke-linecap="round" stroke-linejoin="round"/><path d="M917.8 388.3C919.3 387.2 923.2 382.6 926.7 381.7C930.2 380.8 936.1 381.3 938.9 382.8C941.7 384.3 943.7 387.3 943.3 390.6C942.9 393.9 936.1 399.1 936.7 402.8C937.3 406.5 945.0 409.8 946.7 412.8C948.4 415.8 947.7 418.2 946.7 420.6C945.8 423.0 942.0 426.1 941.0 427.2" fill="none" stroke="#4a6536" stroke-width="8.200" stroke-linecap="round" stroke-linejoin="round"/><path d="M936.7 450.6 L944.4 455.0" fill="none" stroke="#4a6536" stroke-width="8.200" stroke-linecap="round" stroke-linejoin="round"/><path d="M932.2 467.2 L941.0 472.8" fill="none" stroke="#4a6536" stroke-width="8.200" stroke-linecap="round" stroke-linejoin="round"/><path d="M926.7 482.8C928.0 483.2 933.7 483.1 934.4 485.0C935.1 486.9 933.8 492.1 931.0 493.9C928.2 495.7 920.8 493.8 917.8 496.0C914.8 498.2 915.5 504.4 913.3 507.2C911.1 510.0 906.8 512.0 904.4 512.8C902.0 513.5 899.8 511.9 898.9 511.7" fill="none" stroke="#4a6536" stroke-width="8.200" stroke-linecap="round" stroke-linejoin="round"/><path d="M881.0 518.3 L888.9 519.4" fill="none" stroke="#4a6536" stroke-width="8.200" stroke-linecap="round" stroke-linejoin="round"/><path d="M881.0 538.3 L885.6 546.0" fill="none" stroke="#4a6536" stroke-width="8.200" stroke-linecap="round" stroke-linejoin="round"/><path d="M887.8 557.2C888.5 558.9 891.1 564.8 892.2 567.2C893.3 569.6 894.0 571.0 894.4 571.7" fill="none" stroke="#4a6536" stroke-width="8.200" stroke-linecap="round" stroke-linejoin="round"/><path d="M897.8 597.2C898.9 598.5 902.5 602.2 904.4 605.0C906.2 607.8 905.6 612.1 908.9 613.9C912.2 615.7 919.2 615.1 924.4 616.0C929.6 616.9 936.1 617.2 940.0 619.4C943.9 621.6 946.3 625.1 947.8 629.4C949.3 633.7 949.8 639.4 948.9 645.0C948.0 650.6 945.2 657.2 942.2 662.8C939.2 668.3 935.4 673.5 931.0 678.3C926.6 683.1 921.1 688.4 915.6 691.7C910.1 695.0 904.5 697.4 897.8 698.3C891.1 699.2 879.3 697.4 875.6 697.2" fill="none" stroke="#4a6536" stroke-width="8.200" stroke-linecap="round" stroke-linejoin="round"/><path d="M847.8 571.7C846.1 573.2 839.8 576.9 837.8 580.6C835.8 584.3 834.5 590.4 835.6 593.9C836.7 597.4 841.1 600.2 844.4 601.7C847.7 603.2 852.3 601.7 855.6 602.8C858.9 603.9 861.1 607.9 864.4 608.3C867.7 608.7 871.9 607.4 875.6 605.0C879.3 602.6 883.6 597.2 886.7 593.9C889.8 590.6 893.1 586.5 894.4 585.0" fill="none" stroke="#4a6536" stroke-width="8.200" stroke-linecap="round" stroke-linejoin="round"/><path d="M714.4 595.0C715.3 596.5 716.9 601.5 720.0 603.9C723.1 606.3 728.8 609.6 733.3 609.4C737.8 609.2 742.2 605.8 746.7 602.8C751.2 599.8 756.3 595.4 760.0 591.7C763.7 588.0 768.4 584.3 768.9 580.6C769.4 576.9 764.2 571.3 763.3 569.4" fill="none" stroke="#4a6536" stroke-width="8.200" stroke-linecap="round" stroke-linejoin="round"/><path d="M751.0 639.4C753.2 639.2 760.9 636.6 764.4 638.3C767.9 640.0 771.3 644.6 772.2 649.4C773.1 654.2 772.4 661.6 770.0 667.2C767.6 672.8 763.2 678.3 757.8 682.8C752.4 687.2 744.1 691.3 737.8 693.9C731.5 696.5 725.6 697.2 720.0 698.3C714.4 699.4 709.8 701.0 704.4 700.6C699.0 700.2 690.6 696.8 687.8 696.0" fill="none" stroke="#4a6536" stroke-width="8.200" stroke-linecap="round" stroke-linejoin="round"/><path d="M765.6 691.7C768.4 692.2 775.7 694.3 782.2 695.0C788.7 695.7 797.9 696.7 804.4 696.0C810.9 695.3 818.2 691.5 821.0 690.6" fill="none" stroke="#4a6536" stroke-width="8.200" stroke-linecap="round" stroke-linejoin="round"/><path d="M835.6 688.3 L840.0 695.0" fill="none" stroke="#4a6536" stroke-width="8.200" stroke-linecap="round" stroke-linejoin="round"/><path d="M848.0 686.5 L850.5 689.0" fill="none" stroke="#4a6536" stroke-width="8.200" stroke-linecap="round" stroke-linejoin="round"/><path d="M741.0 399.4 L762.2 387.2" fill="none" stroke="#4a6536" stroke-width="8.200" stroke-linecap="round" stroke-linejoin="round"/><path d="M803.3 388.3 L822.2 393.9" fill="none" stroke="#4a6536" stroke-width="8.200" stroke-linecap="round" stroke-linejoin="round"/><path d="M697.8 427.2C698.5 428.9 699.6 434.6 702.2 437.2C704.8 439.8 708.8 442.4 713.3 442.8C717.8 443.2 724.1 440.9 728.9 439.4C733.7 437.9 736.3 437.0 742.2 433.9C748.1 430.8 757.7 423.8 764.4 420.6C771.1 417.5 776.3 415.8 782.2 415.0C788.1 414.2 794.1 414.5 800.0 416.0C805.9 417.5 811.9 421.5 817.8 423.9C823.7 426.3 829.7 429.5 835.6 430.6C841.5 431.7 848.1 431.5 853.3 430.6C858.5 429.7 863.8 427.1 866.7 425.0C869.7 422.9 870.3 419.4 871.0 418.3" fill="none" stroke="#4a6536" stroke-width="8.200" stroke-linecap="round" stroke-linejoin="round"/><path d="M727.8 449.4C729.1 450.5 732.5 455.6 735.6 456.0C738.8 456.4 743.6 454.6 746.7 451.7C749.8 448.8 753.1 440.5 754.4 438.3" fill="none" stroke="#4a6536" stroke-width="8.200" stroke-linecap="round" stroke-linejoin="round"/><path d="M753.3 456.0C753.9 458.2 756.3 465.7 756.7 469.4C757.1 473.1 757.3 475.5 755.6 478.3C753.9 481.1 748.2 484.7 746.7 486.0" fill="none" stroke="#4a6536" stroke-width="8.200" stroke-linecap="round" stroke-linejoin="round"/><path d="M821.0 438.3C822.0 439.2 824.7 443.5 826.7 443.9C828.8 444.3 832.2 441.2 833.3 440.6" fill="none" stroke="#4a6536" stroke-width="8.200" stroke-linecap="round" stroke-linejoin="round"/><path d="M817.8 455.0 L816.7 460.6" fill="none" stroke="#4a6536" stroke-width="8.200" stroke-linecap="round" stroke-linejoin="round"/><path d="M801.0 472.8C802.7 471.9 808.2 467.8 811.0 467.2C813.8 466.6 816.7 467.9 817.8 469.4C818.9 470.9 817.8 474.9 817.8 476.0" fill="none" stroke="#4a6536" stroke-width="8.200" stroke-linecap="round" stroke-linejoin="round"/><path d="M747.8 498.3C750.2 497.2 757.2 494.5 762.2 491.7C767.2 488.9 773.3 483.8 777.8 481.7C782.2 479.6 785.2 478.7 788.9 479.4C792.6 480.1 795.9 484.3 800.0 486.0C804.1 487.7 809.2 488.6 813.3 489.4C817.4 490.2 822.7 489.3 824.4 490.6C826.1 491.9 825.9 495.0 823.3 497.2C820.7 499.4 815.0 502.4 808.9 503.9C802.8 505.4 794.9 505.6 786.7 506.0C778.6 506.4 767.2 506.4 760.0 506.0C752.8 505.6 746.1 504.2 743.3 503.9" fill="none" stroke="#4a6536" stroke-width="8.200" stroke-linecap="round" stroke-linejoin="round"/></svg>
<svg style="left:767px;top:606px;" width="10" height="10" viewBox="0 0 10 10"><circle cx="5" cy="5" r="3.800" fill="none" stroke="#8a8a7a" stroke-width="1"/></svg>
<div style="left:185px;top:916px;width:991px;height:20px;background:#444444;border-top:1px solid #2c2c2c;"></div>
<div class="t" style="top:917.55px;font-size:13.5px;line-height:18.90px;color:#e0e0e0;font-weight:400;white-space:nowrap;left:203px;">100%</div>
<div style="left:250px;top:917px;width:230px;height:19px;background:#4b4b4b;"></div>
<div class="t" style="top:917.34px;font-size:13.8px;line-height:19.32px;color:#d4d4d4;font-weight:400;white-space:nowrap;left:258px;letter-spacing:0.150px;">1000 像素 x 1000 像素 (300 ppi)</div>
<svg style="left:464px;top:921px;" width="8" height="12" viewBox="0 0 8 12"><path d="M2 1.500l4 4.500-4 4.500" fill="none" stroke="#ccc" stroke-width="1.300"/></svg>
<div style="left:537px;top:921px;width:281px;height:11px;background:#525252;border-radius:6px;"></div>
<div style="left:185px;top:936px;width:991px;height:144px;background:#484848;border-top:1px solid #2c2c2c;"></div>
<div style="left:185px;top:937px;width:991px;height:31px;background:#3b3b3b;"></div>
<div style="left:185px;top:940px;width:63px;height:28px;background:#484848;border-right:1px solid #333;"></div>
<div class="t" style="top:946.04px;font-size:12.8px;line-height:17.92px;color:#e0e0e0;font-weight:400;white-space:nowrap;left:196px;">时间轴</div>
<svg style="left:1155px;top:950px;" width="13" height="11" viewBox="0 0 13 11"><path d="M0 1h13M0 4h13M0 7h13M0 10h13" stroke="#ccc" stroke-width="1.500"/></svg>
<div style="left:185.0px;top:974px;width:1px;height:90px;background:#3e3e3e;"></div>
<div style="left:192.0px;top:984px;width:39.5px;height:39.5px;background:#e4e4e4;border:1px solid #999;"></div>
<svg style="left:192.0px;top:984px;" width="39.5" height="39.5" viewBox="0 0 39.500 39.500"><g transform="translate(18.300 33) scale(1.000 1.000) translate(-18.300 -33)"><path d="M11 13C11 8 14 6.500 17 8C18 7.500 20 7.500 21 8C24 6.500 27.500 8 27.500 13C29 15 28.500 18 27.500 20C29.500 23 32 27 32 30C32 33 28 33.500 25 32.500C23 33.500 21 33.500 19.500 32.500C17 33.500 14 33.500 12 32.500C9 33.500 5 33 4.600 30C4.500 27 8 24 10.500 20.500C10 18 10 15 11 13Z" fill="#bccb8e" stroke="#55703f" stroke-width="1"/><path d="M14.500 15.500h2.500M20.500 15.500h2.500M15 19c2 1.500 5 1.500 7 0M14 27v4M23 27v4" stroke="#55703f" stroke-width="0.900" fill="none"/></g></svg>
<div style="left:192.0px;top:984px;width:9px;height:12px;background:#2c2c2c;"></div>
<div class="t" style="top:982.30px;font-size:11px;line-height:15.40px;color:#fff;font-weight:700;white-space:nowrap;left:193.0px;letter-spacing:-0.3px;">1</div>
<div class="t" style="top:1026.34px;font-size:13.8px;line-height:19.32px;color:#ececec;font-weight:400;white-space:nowrap;right:1696.0px;">0.2</div>
<svg style="left:224.5px;top:1033px;" width="8" height="6" viewBox="0 0 8 6"><path d="M0.500 0.500l3.500 4 3.500-4" fill="none" stroke="#ccc" stroke-width="1.100"/></svg>
<div style="left:240.25px;top:974px;width:1px;height:90px;background:#3e3e3e;"></div>
<div style="left:247.25px;top:984px;width:39.5px;height:39.5px;background:#e4e4e4;border:1px solid #999;"></div>
<svg style="left:247.25px;top:984px;" width="39.5" height="39.5" viewBox="0 0 39.500 39.500"><g transform="translate(18.300 33) scale(0.980 1.025) translate(-18.300 -33)"><path d="M11 13C11 8 14 6.500 17 8C18 7.500 20 7.500 21 8C24 6.500 27.500 8 27.500 13C29 15 28.500 18 27.500 20C29.500 23 32 27 32 30C32 33 28 33.500 25 32.500C23 33.500 21 33.500 19.500 32.500C17 33.500 14 33.500 12 32.500C9 33.500 5 33 4.600 30C4.500 27 8 24 10.500 20.500C10 18 10 15 11 13Z" fill="#bccb8e" stroke="#55703f" stroke-width="1"/><path d="M14.500 15.500h2.500M20.500 15.500h2.500M15 19c2 1.500 5 1.500 7 0M14 27v4M23 27v4" stroke="#55703f" stroke-width="0.900" fill="none"/></g></svg>
<div style="left:247.25px;top:984px;width:9px;height:12px;background:#2c2c2c;"></div>
<div class="t" style="top:982.30px;font-size:11px;line-height:15.40px;color:#fff;font-weight:700;white-space:nowrap;left:248.25px;letter-spacing:-0.3px;">2</div>
<div class="t" style="top:1026.34px;font-size:13.8px;line-height:19.32px;color:#ececec;font-weight:400;white-space:nowrap;right:1640.75px;">0.07</div>
<svg style="left:279.75px;top:1033px;" width="8" height="6" viewBox="0 0 8 6"><path d="M0.500 0.500l3.500 4 3.500-4" fill="none" stroke="#ccc" stroke-width="1.100"/></svg>
<div style="left:295.5px;top:974px;width:1px;height:90px;background:#3e3e3e;"></div>
<div style="left:302.5px;top:984px;width:39.5px;height:39.5px;background:#e4e4e4;border:1px solid #999;"></div>
<svg style="left:302.5px;top:984px;" width="39.5" height="39.5" viewBox="0 0 39.500 39.500"><g transform="translate(18.300 33) scale(0.960 1.050) translate(-18.300 -33)"><path d="M11 13C11 8 14 6.500 17 8C18 7.500 20 7.500 21 8C24 6.500 27.500 8 27.500 13C29 15 28.500 18 27.500 20C29.500 23 32 27 32 30C32 33 28 33.500 25 32.500C23 33.500 21 33.500 19.500 32.500C17 33.500 14 33.500 12 32.500C9 33.500 5 33 4.600 30C4.500 27 8 24 10.500 20.500C10 18 10 15 11 13Z" fill="#bccb8e" stroke="#55703f" stroke-width="1"/><path d="M14.500 15.500h2.500M20.500 15.500h2.500M15 19c2 1.500 5 1.500 7 0M14 27v4M23 27v4" stroke="#55703f" stroke-width="0.900" fill="none"/></g></svg>
<div style="left:302.5px;top:984px;width:9px;height:12px;background:#2c2c2c;"></div>
<div class="t" style="top:982.30px;font-size:11px;line-height:15.40px;color:#fff;font-weight:700;white-space:nowrap;left:303.5px;letter-spacing:-0.3px;">3</div>
<div class="t" style="top:1026.34px;font-size:13.8px;line-height:19.32px;color:#ececec;font-weight:400;white-space:nowrap;right:1585.5px;">0.07</div>
<svg style="left:335.0px;top:1033px;" width="8" height="6" viewBox="0 0 8 6"><path d="M0.500 0.500l3.500 4 3.500-4" fill="none" stroke="#ccc" stroke-width="1.100"/></svg>
<div style="left:350.75px;top:974px;width:1px;height:90px;background:#3e3e3e;"></div>
<div style="left:357.75px;top:984px;width:39.5px;height:39.5px;background:#e4e4e4;border:1px solid #999;"></div>
<svg style="left:357.75px;top:984px;" width="39.5" height="39.5" viewBox="0 0 39.500 39.500"><g transform="translate(18.300 33) scale(0.940 1.075) translate(-18.300 -33)"><path d="M11 13C11 8 14 6.500 17 8C18 7.500 20 7.500 21 8C24 6.500 27.500 8 27.500 13C29 15 28.500 18 27.500 20C29.500 23 32 27 32 30C32 33 28 33.500 25 32.500C23 33.500 21 33.500 19.500 32.500C17 33.500 14 33.500 12 32.500C9 33.500 5 33 4.600 30C4.500 27 8 24 10.500 20.500C10 18 10 15 11 13Z" fill="#bccb8e" stroke="#55703f" stroke-width="1"/><path d="M14.500 15.500h2.500M20.500 15.500h2.500M15 19c2 1.500 5 1.500 7 0M14 27v4M23 27v4" stroke="#55703f" stroke-width="0.900" fill="none"/></g></svg>
<div style="left:357.75px;top:984px;width:9px;height:12px;background:#2c2c2c;"></div>
<div class="t" style="top:982.30px;font-size:11px;line-height:15.40px;color:#fff;font-weight:700;white-space:nowrap;left:358.75px;letter-spacing:-0.3px;">4</div>
<div class="t" style="top:1026.34px;font-size:13.8px;line-height:19.32px;color:#ececec;font-weight:400;white-space:nowrap;right:1530.25px;">0.07</div>
<svg style="left:390.25px;top:1033px;" width="8" height="6" viewBox="0 0 8 6"><path d="M0.500 0.500l3.500 4 3.500-4" fill="none" stroke="#ccc" stroke-width="1.100"/></svg>
<div style="left:406.0px;top:974px;width:1px;height:90px;background:#3e3e3e;"></div>
<div style="left:413.0px;top:984px;width:39.5px;height:39.5px;background:#e4e4e4;border:1px solid #999;"></div>
<svg style="left:413.0px;top:984px;" width="39.5" height="39.5" viewBox="0 0 39.500 39.500"><g transform="translate(18.300 33) scale(0.940 1.075) translate(-18.300 -33)"><path d="M11 13C11 8 14 6.500 17 8C18 7.500 20 7.500 21 8C24 6.500 27.500 8 27.500 13C29 15 28.500 18 27.500 20C29.500 23 32 27 32 30C32 33 28 33.500 25 32.500C23 33.500 21 33.500 19.500 32.500C17 33.500 14 33.500 12 32.500C9 33.500 5 33 4.600 30C4.500 27 8 24 10.500 20.500C10 18 10 15 11 13Z" fill="#bccb8e" stroke="#55703f" stroke-width="1"/><path d="M14.500 15.500h2.500M20.500 15.500h2.500M15 19c2 1.500 5 1.500 7 0M14 27v4M23 27v4" stroke="#55703f" stroke-width="0.900" fill="none"/></g></svg>
<div style="left:413.0px;top:984px;width:9px;height:12px;background:#2c2c2c;"></div>
<div class="t" style="top:982.30px;font-size:11px;line-height:15.40px;color:#fff;font-weight:700;white-space:nowrap;left:414.0px;letter-spacing:-0.3px;">5</div>
<div class="t" style="top:1026.34px;font-size:13.8px;line-height:19.32px;color:#ececec;font-weight:400;white-space:nowrap;right:1475.0px;">0.07</div>
<svg style="left:445.5px;top:1033px;" width="8" height="6" viewBox="0 0 8 6"><path d="M0.500 0.500l3.500 4 3.500-4" fill="none" stroke="#ccc" stroke-width="1.100"/></svg>
<div style="left:461.25px;top:974px;width:1px;height:90px;background:#3e3e3e;"></div>
<div style="left:468.25px;top:984px;width:39.5px;height:39.5px;background:#e4e4e4;border:1px solid #999;"></div>
<svg style="left:468.25px;top:984px;" width="39.5" height="39.5" viewBox="0 0 39.500 39.500"><g transform="translate(18.300 33) scale(0.940 1.075) translate(-18.300 -33)"><path d="M11 13C11 8 14 6.500 17 8C18 7.500 20 7.500 21 8C24 6.500 27.500 8 27.500 13C29 15 28.500 18 27.500 20C29.500 23 32 27 32 30C32 33 28 33.500 25 32.500C23 33.500 21 33.500 19.500 32.500C17 33.500 14 33.500 12 32.500C9 33.500 5 33 4.600 30C4.500 27 8 24 10.500 20.500C10 18 10 15 11 13Z" fill="#bccb8e" stroke="#55703f" stroke-width="1"/><path d="M14.500 15.500h2.500M20.500 15.500h2.500M15 19c2 1.500 5 1.500 7 0M14 27v4M23 27v4" stroke="#55703f" stroke-width="0.900" fill="none"/></g></svg>
<div style="left:468.25px;top:984px;width:9px;height:12px;background:#2c2c2c;"></div>
<div class="t" style="top:982.30px;font-size:11px;line-height:15.40px;color:#fff;font-weight:700;white-space:nowrap;left:469.25px;letter-spacing:-0.3px;">6</div>
<div class="t" style="top:1026.34px;font-size:13.8px;line-height:19.32px;color:#ececec;font-weight:400;white-space:nowrap;right:1419.75px;">0.07</div>
<svg style="left:500.75px;top:1033px;" width="8" height="6" viewBox="0 0 8 6"><path d="M0.500 0.500l3.500 4 3.500-4" fill="none" stroke="#ccc" stroke-width="1.100"/></svg>
<div style="left:516.5px;top:974px;width:1px;height:90px;background:#3e3e3e;"></div>
<div style="left:523.5px;top:984px;width:39.5px;height:39.5px;background:#e4e4e4;border:1px solid #999;"></div>
<svg style="left:523.5px;top:984px;" width="39.5" height="39.5" viewBox="0 0 39.500 39.500"><g transform="translate(0.10 -2.00) scale(0.0668) translate(-452 -207)"><polygon points="664,338 693,302 731,299 753,319 783,321 816,307 849,298 876,318 891,352 908,360 927,381 944,391 947,413 942,432 946,456 934,485 918,498 900,514 884,540 895,572 905,606 924,616 948,630 942,663 916,692 876,697 840,695 804,696 766,692 720,698 688,696 656,692 627,688 596,686 577,690 551,689 531,700 516,680 520,650 545,622 577,600 596,560 608,540 613,522 622,498 587,489 584,462 596,430 593,406 609,391 602,378 625,368 650,352" fill="#bccb8e" stroke="#55703f" stroke-width="15.0"/><polygon points="767,561 798,545 833,561 852,595 867,629 856,669 831,694 764,694 776,661 764,638 743,625 753,601 773,574" fill="#faf7d6"/><ellipse cx="788" cy="452" rx="30" ry="30" fill="#cd777e"/><path d="M698 428C720 450 750 430 782 415C810 415 840 440 871 418M714 595C740 620 765 590 765 570M848 572C820 600 870 620 894 585M751 639C790 640 770 700 690 697" fill="none" stroke="#55703f" stroke-width="15.0"/></g></svg>
<div style="left:523.5px;top:984px;width:9px;height:12px;background:#2c2c2c;"></div>
<div class="t" style="top:982.30px;font-size:11px;line-height:15.40px;color:#fff;font-weight:700;white-space:nowrap;left:524.5px;letter-spacing:-0.3px;">7</div>
<div class="t" style="top:1026.34px;font-size:13.8px;line-height:19.32px;color:#ececec;font-weight:400;white-space:nowrap;right:1364.5px;">0.07</div>
<svg style="left:556.0px;top:1033px;" width="8" height="6" viewBox="0 0 8 6"><path d="M0.500 0.500l3.500 4 3.500-4" fill="none" stroke="#ccc" stroke-width="1.100"/></svg>
<div style="left:571.75px;top:974px;width:1px;height:90px;background:#3e3e3e;"></div>
<div style="left:578.75px;top:984px;width:39.5px;height:39.5px;background:#e4e4e4;border:1px solid #999;"></div>
<svg style="left:578.75px;top:984px;" width="39.5" height="39.5" viewBox="0 0 39.500 39.500"><g transform="translate(-0.30 -2.00) scale(0.0668) translate(-452 -207)"><polygon points="664,338 693,302 731,299 753,319 783,321 816,307 849,298 876,318 891,352 908,360 927,381 944,391 947,413 942,432 946,456 934,485 918,498 900,514 884,540 895,572 905,606 924,616 948,630 942,663 916,692 876,697 840,695 804,696 766,692 720,698 688,696 656,692 627,688 596,686 577,690 551,689 531,700 516,680 520,650 545,622 577,600 596,560 608,540 613,522 622,498 587,489 584,462 596,430 593,406 609,391 602,378 625,368 650,352" fill="#bccb8e" stroke="#55703f" stroke-width="15.0"/><polygon points="767,561 798,545 833,561 852,595 867,629 856,669 831,694 764,694 776,661 764,638 743,625 753,601 773,574" fill="#faf7d6"/><ellipse cx="788" cy="452" rx="30" ry="30" fill="#cd777e"/><path d="M698 428C720 450 750 430 782 415C810 415 840 440 871 418M714 595C740 620 765 590 765 570M848 572C820 600 870 620 894 585M751 639C790 640 770 700 690 697" fill="none" stroke="#55703f" stroke-width="15.0"/></g></svg>
<div style="left:578.75px;top:984px;width:9px;height:12px;background:#2c2c2c;"></div>
<div class="t" style="top:982.30px;font-size:11px;line-height:15.40px;color:#fff;font-weight:700;white-space:nowrap;left:579.75px;letter-spacing:-0.3px;">8</div>
<div class="t" style="top:1026.34px;font-size:13.8px;line-height:19.32px;color:#ececec;font-weight:400;white-space:nowrap;right:1309.25px;">0.07</div>
<svg style="left:611.25px;top:1033px;" width="8" height="6" viewBox="0 0 8 6"><path d="M0.500 0.500l3.500 4 3.500-4" fill="none" stroke="#ccc" stroke-width="1.100"/></svg>
<div style="left:627.0px;top:974px;width:1px;height:90px;background:#3e3e3e;"></div>
<div style="left:634.0px;top:984px;width:39.5px;height:39.5px;background:#e4e4e4;border:1px solid #999;"></div>
<svg style="left:634.0px;top:984px;" width="39.5" height="39.5" viewBox="0 0 39.500 39.500"><g transform="translate(0.50 -2.00) scale(0.0668) translate(-452 -207)"><polygon points="664,338 693,302 731,299 753,319 783,321 816,307 849,298 876,318 891,352 908,360 927,381 944,391 947,413 942,432 946,456 934,485 918,498 900,514 884,540 895,572 905,606 924,616 948,630 942,663 916,692 876,697 840,695 804,696 766,692 720,698 688,696 656,692 627,688 596,686 577,690 551,689 531,700 516,680 520,650 545,622 577,600 596,560 608,540 613,522 622,498 587,489 584,462 596,430 593,406 609,391 602,378 625,368 650,352" fill="#bccb8e" stroke="#55703f" stroke-width="15.0"/><polygon points="767,561 798,545 833,561 852,595 867,629 856,669 831,694 764,694 776,661 764,638 743,625 753,601 773,574" fill="#faf7d6"/><ellipse cx="788" cy="452" rx="30" ry="30" fill="#cd777e"/><path d="M698 428C720 450 750 430 782 415C810 415 840 440 871 418M714 595C740 620 765 590 765 570M848 572C820 600 870 620 894 585M751 639C790 640 770 700 690 697" fill="none" stroke="#55703f" stroke-width="15.0"/></g></svg>
<div style="left:634.0px;top:984px;width:9px;height:12px;background:#2c2c2c;"></div>
<div class="t" style="top:982.30px;font-size:11px;line-height:15.40px;color:#fff;font-weight:700;white-space:nowrap;left:635.0px;letter-spacing:-0.3px;">9</div>
<div class="t" style="top:1026.34px;font-size:13.8px;line-height:19.32px;color:#ececec;font-weight:400;white-space:nowrap;right:1254.0px;">0.07</div>
<svg style="left:666.5px;top:1033px;" width="8" height="6" viewBox="0 0 8 6"><path d="M0.500 0.500l3.500 4 3.500-4" fill="none" stroke="#ccc" stroke-width="1.100"/></svg>
<div style="left:682.25px;top:974px;width:1px;height:90px;background:#3e3e3e;"></div>
<div style="left:689.25px;top:984px;width:39.5px;height:39.5px;background:#e4e4e4;border:1px solid #999;"></div>
<svg style="left:689.25px;top:984px;" width="39.5" height="39.5" viewBox="0 0 39.500 39.500"><g transform="translate(0.10 -2.00) scale(0.0668) translate(-452 -207)"><polygon points="664,338 693,302 731,299 753,319 783,321 816,307 849,298 876,318 891,352 908,360 927,381 944,391 947,413 942,432 946,456 934,485 918,498 900,514 884,540 895,572 905,606 924,616 948,630 942,663 916,692 876,697 840,695 804,696 766,692 720,698 688,696 656,692 627,688 596,686 577,690 551,689 531,700 516,680 520,650 545,622 577,600 596,560 608,540 613,522 622,498 587,489 584,462 596,430 593,406 609,391 602,378 625,368 650,352" fill="#bccb8e" stroke="#55703f" stroke-width="15.0"/><polygon points="767,561 798,545 833,561 852,595 867,629 856,669 831,694 764,694 776,661 764,638 743,625 753,601 773,574" fill="#faf7d6"/><ellipse cx="788" cy="452" rx="30" ry="30" fill="#cd777e"/><path d="M698 428C720 450 750 430 782 415C810 415 840 440 871 418M714 595C740 620 765 590 765 570M848 572C820 600 870 620 894 585M751 639C790 640 770 700 690 697" fill="none" stroke="#55703f" stroke-width="15.0"/></g></svg>
<div style="left:689.25px;top:984px;width:15px;height:12px;background:#2c2c2c;"></div>
<div class="t" style="top:982.30px;font-size:11px;line-height:15.40px;color:#fff;font-weight:700;white-space:nowrap;left:690.25px;letter-spacing:-0.3px;">10</div>
<div class="t" style="top:1026.34px;font-size:13.8px;line-height:19.32px;color:#ececec;font-weight:400;white-space:nowrap;right:1198.75px;">0.07</div>
<svg style="left:721.75px;top:1033px;" width="8" height="6" viewBox="0 0 8 6"><path d="M0.500 0.500l3.500 4 3.500-4" fill="none" stroke="#ccc" stroke-width="1.100"/></svg>
<div style="left:737.5px;top:974px;width:1px;height:90px;background:#3e3e3e;"></div>
<div style="left:744.5px;top:984px;width:39.5px;height:39.5px;background:#e4e4e4;border:1px solid #999;"></div>
<svg style="left:744.5px;top:984px;" width="39.5" height="39.5" viewBox="0 0 39.500 39.500"><g transform="translate(-0.30 -2.00) scale(0.0668) translate(-452 -207)"><polygon points="664,338 693,302 731,299 753,319 783,321 816,307 849,298 876,318 891,352 908,360 927,381 944,391 947,413 942,432 946,456 934,485 918,498 900,514 884,540 895,572 905,606 924,616 948,630 942,663 916,692 876,697 840,695 804,696 766,692 720,698 688,696 656,692 627,688 596,686 577,690 551,689 531,700 516,680 520,650 545,622 577,600 596,560 608,540 613,522 622,498 587,489 584,462 596,430 593,406 609,391 602,378 625,368 650,352" fill="#bccb8e" stroke="#55703f" stroke-width="15.0"/><polygon points="767,561 798,545 833,561 852,595 867,629 856,669 831,694 764,694 776,661 764,638 743,625 753,601 773,574" fill="#faf7d6"/><ellipse cx="788" cy="452" rx="30" ry="30" fill="#cd777e"/><path d="M698 428C720 450 750 430 782 415C810 415 840 440 871 418M714 595C740 620 765 590 765 570M848 572C820 600 870 620 894 585M751 639C790 640 770 700 690 697" fill="none" stroke="#55703f" stroke-width="15.0"/></g></svg>
<div style="left:744.5px;top:984px;width:15px;height:12px;background:#2c2c2c;"></div>
<div class="t" style="top:982.30px;font-size:11px;line-height:15.40px;color:#fff;font-weight:700;white-space:nowrap;left:745.5px;letter-spacing:-0.3px;">11</div>
<div class="t" style="top:1026.34px;font-size:13.8px;line-height:19.32px;color:#ececec;font-weight:400;white-space:nowrap;right:1143.5px;">0.07</div>
<svg style="left:777.0px;top:1033px;" width="8" height="6" viewBox="0 0 8 6"><path d="M0.500 0.500l3.500 4 3.500-4" fill="none" stroke="#ccc" stroke-width="1.100"/></svg>
<div style="left:792.75px;top:974px;width:1px;height:90px;background:#3e3e3e;"></div>
<div style="left:799.75px;top:984px;width:39.5px;height:39.5px;background:#e4e4e4;border:1px solid #999;"></div>
<svg style="left:799.75px;top:984px;" width="39.5" height="39.5" viewBox="0 0 39.500 39.500"><g transform="translate(0.50 -2.00) scale(0.0668) translate(-452 -207)"><polygon points="664,338 693,302 731,299 753,319 783,321 816,307 849,298 876,318 891,352 908,360 927,381 944,391 947,413 942,432 946,456 934,485 918,498 900,514 884,540 895,572 905,606 924,616 948,630 942,663 916,692 876,697 840,695 804,696 766,692 720,698 688,696 656,692 627,688 596,686 577,690 551,689 531,700 516,680 520,650 545,622 577,600 596,560 608,540 613,522 622,498 587,489 584,462 596,430 593,406 609,391 602,378 625,368 650,352" fill="#bccb8e" stroke="#55703f" stroke-width="15.0"/><polygon points="767,561 798,545 833,561 852,595 867,629 856,669 831,694 764,694 776,661 764,638 743,625 753,601 773,574" fill="#faf7d6"/><ellipse cx="788" cy="452" rx="30" ry="30" fill="#cd777e"/><path d="M698 428C720 450 750 430 782 415C810 415 840 440 871 418M714 595C740 620 765 590 765 570M848 572C820 600 870 620 894 585M751 639C790 640 770 700 690 697" fill="none" stroke="#55703f" stroke-width="15.0"/></g></svg>
<div style="left:799.75px;top:984px;width:15px;height:12px;background:#2c2c2c;"></div>
<div class="t" style="top:982.30px;font-size:11px;line-height:15.40px;color:#fff;font-weight:700;white-space:nowrap;left:800.75px;letter-spacing:-0.3px;">12</div>
<div class="t" style="top:1026.34px;font-size:13.8px;line-height:19.32px;color:#ececec;font-weight:400;white-space:nowrap;right:1088.25px;">0.07</div>
<svg style="left:832.25px;top:1033px;" width="8" height="6" viewBox="0 0 8 6"><path d="M0.500 0.500l3.500 4 3.500-4" fill="none" stroke="#ccc" stroke-width="1.100"/></svg>
<div style="left:848.0px;top:974px;width:1px;height:90px;background:#3e3e3e;"></div>
<div style="left:855.0px;top:984px;width:39.5px;height:39.5px;background:#e4e4e4;border:1px solid #999;"></div>
<svg style="left:855.0px;top:984px;" width="39.5" height="39.5" viewBox="0 0 39.500 39.500"><g transform="translate(0.10 -2.00) scale(0.0668) translate(-452 -207)"><polygon points="664,338 693,302 731,299 753,319 783,321 816,307 849,298 876,318 891,352 908,360 927,381 944,391 947,413 942,432 946,456 934,485 918,498 900,514 884,540 895,572 905,606 924,616 948,630 942,663 916,692 876,697 840,695 804,696 766,692 720,698 688,696 656,692 627,688 596,686 577,690 551,689 531,700 516,680 520,650 545,622 577,600 596,560 608,540 613,522 622,498 587,489 584,462 596,430 593,406 609,391 602,378 625,368 650,352" fill="#bccb8e" stroke="#55703f" stroke-width="15.0"/><polygon points="767,561 798,545 833,561 852,595 867,629 856,669 831,694 764,694 776,661 764,638 743,625 753,601 773,574" fill="#faf7d6"/><ellipse cx="788" cy="452" rx="30" ry="30" fill="#cd777e"/><path d="M698 428C720 450 750 430 782 415C810 415 840 440 871 418M714 595C740 620 765 590 765 570M848 572C820 600 870 620 894 585M751 639C790 640 770 700 690 697" fill="none" stroke="#55703f" stroke-width="15.0"/></g></svg>
<div style="left:855.0px;top:984px;width:15px;height:12px;background:#2c2c2c;"></div>
<div class="t" style="top:982.30px;font-size:11px;line-height:15.40px;color:#fff;font-weight:700;white-space:nowrap;left:856.0px;letter-spacing:-0.3px;">13</div>
<div class="t" style="top:1026.34px;font-size:13.8px;line-height:19.32px;color:#ececec;font-weight:400;white-space:nowrap;right:1033.0px;">0.07</div>
<svg style="left:887.5px;top:1033px;" width="8" height="6" viewBox="0 0 8 6"><path d="M0.500 0.500l3.500 4 3.500-4" fill="none" stroke="#ccc" stroke-width="1.100"/></svg>
<div style="left:903.25px;top:974px;width:1px;height:90px;background:#3e3e3e;"></div>
<div style="left:910.25px;top:984px;width:39.5px;height:39.5px;background:#e4e4e4;border:1px solid #999;"></div>
<svg style="left:910.25px;top:984px;" width="39.5" height="39.5" viewBox="0 0 39.500 39.500"><g transform="translate(-0.30 -2.00) scale(0.0668) translate(-452 -207)"><polygon points="664,338 693,302 731,299 753,319 783,321 816,307 849,298 876,318 891,352 908,360 927,381 944,391 947,413 942,432 946,456 934,485 918,498 900,514 884,540 895,572 905,606 924,616 948,630 942,663 916,692 876,697 840,695 804,696 766,692 720,698 688,696 656,692 627,688 596,686 577,690 551,689 531,700 516,680 520,650 545,622 577,600 596,560 608,540 613,522 622,498 587,489 584,462 596,430 593,406 609,391 602,378 625,368 650,352" fill="#bccb8e" stroke="#55703f" stroke-width="15.0"/><polygon points="767,561 798,545 833,561 852,595 867,629 856,669 831,694 764,694 776,661 764,638 743,625 753,601 773,574" fill="#faf7d6"/><ellipse cx="788" cy="452" rx="30" ry="30" fill="#cd777e"/><path d="M698 428C720 450 750 430 782 415C810 415 840 440 871 418M714 595C740 620 765 590 765 570M848 572C820 600 870 620 894 585M751 639C790 640 770 700 690 697" fill="none" stroke="#55703f" stroke-width="15.0"/></g></svg>
<div style="left:910.25px;top:984px;width:15px;height:12px;background:#2c2c2c;"></div>
<div class="t" style="top:982.30px;font-size:11px;line-height:15.40px;color:#fff;font-weight:700;white-space:nowrap;left:911.25px;letter-spacing:-0.3px;">14</div>
<div class="t" style="top:1026.34px;font-size:13.8px;line-height:19.32px;color:#ececec;font-weight:400;white-space:nowrap;right:977.75px;">0.07</div>
<svg style="left:942.75px;top:1033px;" width="8" height="6" viewBox="0 0 8 6"><path d="M0.500 0.500l3.500 4 3.500-4" fill="none" stroke="#ccc" stroke-width="1.100"/></svg>
<div style="left:958.5px;top:974px;width:1px;height:90px;background:#3e3e3e;"></div>
<div style="left:965.5px;top:984px;width:39.5px;height:39.5px;background:#e4e4e4;border:1px solid #999;"></div>
<svg style="left:965.5px;top:984px;" width="39.5" height="39.5" viewBox="0 0 39.500 39.500"><g transform="translate(0.50 -2.00) scale(0.0668) translate(-452 -207)"><polygon points="664,338 693,302 731,299 753,319 783,321 816,307 849,298 876,318 891,352 908,360 927,381 944,391 947,413 942,432 946,456 934,485 918,498 900,514 884,540 895,572 905,606 924,616 948,630 942,663 916,692 876,697 840,695 804,696 766,692 720,698 688,696 656,692 627,688 596,686 577,690 551,689 531,700 516,680 520,650 545,622 577,600 596,560 608,540 613,522 622,498 587,489 584,462 596,430 593,406 609,391 602,378 625,368 650,352" fill="#bccb8e" stroke="#55703f" stroke-width="15.0"/><polygon points="767,561 798,545 833,561 852,595 867,629 856,669 831,694 764,694 776,661 764,638 743,625 753,601 773,574" fill="#faf7d6"/><ellipse cx="788" cy="452" rx="30" ry="30" fill="#cd777e"/><path d="M698 428C720 450 750 430 782 415C810 415 840 440 871 418M714 595C740 620 765 590 765 570M848 572C820 600 870 620 894 585M751 639C790 640 770 700 690 697" fill="none" stroke="#55703f" stroke-width="15.0"/></g></svg>
<div style="left:965.5px;top:984px;width:15px;height:12px;background:#2c2c2c;"></div>
<div class="t" style="top:982.30px;font-size:11px;line-height:15.40px;color:#fff;font-weight:700;white-space:nowrap;left:966.5px;letter-spacing:-0.3px;">15</div>
<div class="t" style="top:1026.34px;font-size:13.8px;line-height:19.32px;color:#ececec;font-weight:400;white-space:nowrap;right:922.5px;">0.07</div>
<svg style="left:998.0px;top:1033px;" width="8" height="6" viewBox="0 0 8 6"><path d="M0.500 0.500l3.500 4 3.500-4" fill="none" stroke="#ccc" stroke-width="1.100"/></svg>
<div style="left:1013.75px;top:974px;width:1px;height:90px;background:#3e3e3e;"></div>
<div style="left:1020.75px;top:984px;width:39.5px;height:39.5px;background:#e4e4e4;border:1px solid #999;"></div>
<svg style="left:1020.75px;top:984px;" width="39.5" height="39.5" viewBox="0 0 39.500 39.500"><g transform="translate(0.10 -2.00) scale(0.0668) translate(-452 -207)"><polygon points="664,338 693,302 731,299 753,319 783,321 816,307 849,298 876,318 891,352 908,360 927,381 944,391 947,413 942,432 946,456 934,485 918,498 900,514 884,540 895,572 905,606 924,616 948,630 942,663 916,692 876,697 840,695 804,696 766,692 720,698 688,696 656,692 627,688 596,686 577,690 551,689 531,700 516,680 520,650 545,622 577,600 596,560 608,540 613,522 622,498 587,489 584,462 596,430 593,406 609,391 602,378 625,368 650,352" fill="#bccb8e" stroke="#55703f" stroke-width="15.0"/><polygon points="767,561 798,545 833,561 852,595 867,629 856,669 831,694 764,694 776,661 764,638 743,625 753,601 773,574" fill="#faf7d6"/><ellipse cx="788" cy="452" rx="30" ry="30" fill="#cd777e"/><path d="M698 428C720 450 750 430 782 415C810 415 840 440 871 418M714 595C740 620 765 590 765 570M848 572C820 600 870 620 894 585M751 639C790 640 770 700 690 697" fill="none" stroke="#55703f" stroke-width="15.0"/></g></svg>
<div style="left:1020.75px;top:984px;width:15px;height:12px;background:#2c2c2c;"></div>
<div class="t" style="top:982.30px;font-size:11px;line-height:15.40px;color:#fff;font-weight:700;white-space:nowrap;left:1021.75px;letter-spacing:-0.3px;">16</div>
<div class="t" style="top:1026.34px;font-size:13.8px;line-height:19.32px;color:#ececec;font-weight:400;white-space:nowrap;right:867.25px;">0.5</div>
<svg style="left:1053.25px;top:1033px;" width="8" height="6" viewBox="0 0 8 6"><path d="M0.500 0.500l3.500 4 3.500-4" fill="none" stroke="#ccc" stroke-width="1.100"/></svg>
<div style="left:908px;top:979px;width:47px;height:50px;background:none;border:1px solid #cfcfcf;"></div>
<div style="left:906px;top:1044px;width:48px;height:4px;background:#777;"></div>
<svg style="left:194px;top:1054px;" width="17" height="17" viewBox="0 0 17 17"><path d="M0 4h6M0 8.500h6M0 13h6M8 1h8M8 5.500h8M8 10h8M8 14.500h8" stroke="#c8c8c8" stroke-width="1.600"/><path d="M7 0v17" stroke="#c8c8c8" stroke-width="1.200"/></svg>
<div class="t" style="top:1053.55px;font-size:13.5px;line-height:18.90px;color:#c8c8c8;font-weight:400;white-space:nowrap;left:233px;">永远</div>
<svg style="left:275px;top:1060px;" width="10" height="7" viewBox="0 0 10 7"><path d="M0 0h10l-5 6z" fill="#c8c8c8"/></svg>
<svg style="left:300px;top:1056px;" width="15" height="13" viewBox="0 0 15 13"><path d="M1 0v13" stroke="#c8c8c8" stroke-width="2"/><path d="M14 0v13l-10-6.500z" fill="#c8c8c8"/></svg>
<svg style="left:335px;top:1056px;" width="15" height="13" viewBox="0 0 15 13"><path d="M10 0v13l-10-6.500z" fill="#c8c8c8"/><path d="M13 0v13" stroke="#c8c8c8" stroke-width="2.200"/></svg>
<svg style="left:371px;top:1056px;" width="13" height="13" viewBox="0 0 13 13"><path d="M0 0l13 6.500-13 6.500z" fill="#c8c8c8"/></svg>
<svg style="left:405px;top:1056px;" width="15" height="13" viewBox="0 0 15 13"><path d="M2 0v13" stroke="#c8c8c8" stroke-width="2.200"/><path d="M5 0l10 6.500-10 6.500z" fill="#c8c8c8"/></svg>
<svg style="left:440px;top:1055px;" width="16" height="14" viewBox="0 0 16 14"><path d="M1 1l13 11" stroke="#888" stroke-width="2.500"/><circle cx="3" cy="3" r="2" fill="#888"/><circle cx="12" cy="11" r="2.500" fill="#888"/></svg>
<svg style="left:474px;top:1055px;" width="15" height="15" viewBox="0 0 15 15"><rect x="0.700" y="0.700" width="13.600" height="13.600" fill="none" stroke="#c8c8c8" stroke-width="1.400"/><path d="M7.500 4v7M4 7.500h7" stroke="#c8c8c8" stroke-width="1.400"/></svg>
<svg style="left:511px;top:1054px;" width="13" height="16" viewBox="0 0 13 16"><path d="M0 3h13M4.500 3v-2h4v2" fill="none" stroke="#c8c8c8" stroke-width="1.400"/><path d="M1.500 3.500l.8 12h8.400l.8-12" fill="none" stroke="#c8c8c8" stroke-width="1.400"/><path d="M4.500 6v7M6.500 6v7M8.500 6v7" stroke="#c8c8c8" stroke-width="1"/></svg>
<div style="left:1176px;top:115px;width:278px;height:965px;background:#484848;border-left:1px solid #333;border-right:1px solid #333;"></div>
<div style="left:1176px;top:115px;width:278px;height:32px;background:#3b3b3b;"></div>
<div style="left:1176px;top:115px;width:50px;height:33px;background:#484848;border-right:1px solid #333;border-left:1px solid #333;"></div>
<div class="t" style="top:121.76px;font-size:13.2px;line-height:18.48px;color:#f0f0f0;font-weight:500;white-space:nowrap;left:1188px;">图层</div>
<svg style="left:1434px;top:126px;" width="14" height="11" viewBox="0 0 14 11"><path d="M0 1h14M0 4h14M0 7h14M0 10h14" stroke="#ccc" stroke-width="1.500"/></svg>
<div style="left:1182px;top:160px;width:90px;height:22px;background:#3a3a3a;border:1px solid #353535;border-radius:2px;"></div>
<svg style="left:1190px;top:165px;" width="13" height="13" viewBox="0 0 13 13"><circle cx="5" cy="5" r="3.800" fill="none" stroke="#ddd" stroke-width="1.500"/><path d="M8 8l4 4" stroke="#ddd" stroke-width="2"/></svg>
<div class="t" style="top:161.76px;font-size:13.2px;line-height:18.48px;color:#e8e8e8;font-weight:500;white-space:nowrap;left:1207px;">类型</div>
<svg style="left:1258.5px;top:168.5px;" width="9.0" height="7.0" viewBox="0 0 9.0 7.0"><path d="M1 1.5 L4.5 5.5 L8.0 1.5" fill="none" stroke="#d4d4d4" stroke-width="1.7"/></svg>
<svg style="left:1290px;top:165px;" width="15" height="12" viewBox="0 0 15 12"><rect x="0.700" y="0.700" width="13.600" height="10.600" fill="none" stroke="#d8d8d8" stroke-width="1.400"/><path d="M2.500 9l3-4 2.500 3 1.500-1.500 3 2.500z" fill="#d8d8d8"/></svg>
<svg style="left:1320px;top:164px;" width="14" height="14" viewBox="0 0 14 14"><circle cx="7" cy="7" r="6" fill="none" stroke="#d8d8d8" stroke-width="1.500"/><path d="M11.200 2.800a6 6 0 0 0-8.400 8.400z" fill="#d8d8d8"/></svg>
<div class="t" style="left:1346px;top:160px;width:18px;height:22px;text-align:center;font-family:'Liberation Serif',serif;font-weight:700;font-size:17px;line-height:22px;color:#d8d8d8;">T</div>
<svg style="left:1377px;top:164px;" width="14" height="14" viewBox="0 0 14 14"><rect x="2" y="2" width="10" height="10" fill="none" stroke="#d8d8d8" stroke-width="1.400"/><rect x="0" y="0" width="4" height="4" fill="#d8d8d8"/><rect x="10" y="0" width="4" height="4" fill="#d8d8d8"/><rect x="0" y="10" width="4" height="4" fill="#d8d8d8"/><rect x="10" y="10" width="4" height="4" fill="#d8d8d8"/></svg>
<svg style="left:1406px;top:164px;" width="14" height="15" viewBox="0 0 14 15"><path d="M4 1h6l3 3v10h-9z" fill="none" stroke="#d8d8d8" stroke-width="1.300"/><rect x="0.500" y="6.500" width="7" height="7" fill="#d8d8d8"/><path d="M9.500 1v3.500h3.500" fill="none" stroke="#d8d8d8" stroke-width="1.200"/></svg>
<div style="left:1437px;top:162px;width:11px;height:21px;background:#3a3a3a;border-radius:6px;"></div>
<div style="left:1437.5px;top:161px;width:10px;height:10px;background:#e0e0e0;border-radius:50%;"></div>
<div style="left:1177px;top:188px;width:276px;height:1px;background:#3a3a3a;"></div>
<div style="left:1182px;top:195px;width:133px;height:22px;background:#3a3a3a;border:1px solid #353535;border-radius:2px;"></div>
<div class="t" style="top:196.76px;font-size:13.2px;line-height:18.48px;color:#e8e8e8;font-weight:500;white-space:nowrap;left:1191px;">正常</div>
<svg style="left:1303.5px;top:203.5px;" width="9.0" height="7.0" viewBox="0 0 9.0 7.0"><path d="M1 1.5 L4.5 5.5 L8.0 1.5" fill="none" stroke="#d4d4d4" stroke-width="1.7"/></svg>
<div class="t" style="top:196.76px;font-size:13.2px;line-height:18.48px;color:#e4e4e4;font-weight:500;white-space:nowrap;left:1322px;">不透明度:</div>
<div style="left:1383px;top:195px;width:46px;height:22px;background:#3a3a3a;border:1px solid #353535;"></div>
<div class="t" style="top:196.55px;font-size:13.5px;line-height:18.90px;color:#e8e8e8;font-weight:400;white-space:nowrap;left:1386px;">100%</div>
<div style="left:1429px;top:195px;width:18px;height:22px;background:#3f3f3f;border:1px solid #353535;border-left:none;"></div>
<svg style="left:1434.0px;top:203.5px;" width="9.0" height="7.0" viewBox="0 0 9.0 7.0"><path d="M1 1.5 L4.5 5.5 L8.0 1.5" fill="none" stroke="#d4d4d4" stroke-width="1.7"/></svg>
<div style="left:1177px;top:222px;width:276px;height:1px;background:#3a3a3a;"></div>
<div class="t" style="top:231.76px;font-size:13.2px;line-height:18.48px;color:#e4e4e4;font-weight:500;white-space:nowrap;left:1182px;">统一:</div>
<svg style="left:1216px;top:232px;" width="15" height="15" viewBox="0 0 15 15"><path d="M9 0.500l5.500 5.500-2 .5-2.500 2.500-.5 3.500-3-3-5 5 5-5-3-3 3.500-.5 2.500-2.500z" fill="#ddd"/></svg>
<svg style="left:1227px;top:244px;" width="9" height="5" viewBox="0 0 9 5"><rect x="0.500" y="0.500" width="4.500" height="4" rx="2" fill="none" stroke="#ccc" stroke-width="1"/><rect x="4" y="0.500" width="4.500" height="4" rx="2" fill="none" stroke="#ccc" stroke-width="1"/></svg>
<svg style="left:1243px;top:234px;" width="17" height="11" viewBox="0 0 17 11"><path d="M0.500 5.500c2-3.500 5-5 8-5s6 1.500 8 5c-2 3.500-5 5-8 5s-6-1.500-8-5z" fill="#ddd"/><circle cx="8.500" cy="5.500" r="3" fill="#484848"/><circle cx="8.500" cy="5.500" r="1.500" fill="#ddd"/></svg>
<svg style="left:1254px;top:244px;" width="9" height="5" viewBox="0 0 9 5"><rect x="0.500" y="0.500" width="4.500" height="4" rx="2" fill="none" stroke="#ccc" stroke-width="1"/><rect x="4" y="0.500" width="4.500" height="4" rx="2" fill="none" stroke="#ccc" stroke-width="1"/></svg>
<div class="t" style="left:1270px;top:229px;font-family:'Liberation Serif',serif;font-style:italic;font-size:16.500px;line-height:22px;color:#ddd;">fx</div>
<svg style="left:1281px;top:244px;" width="9" height="5" viewBox="0 0 9 5"><rect x="0.500" y="0.500" width="4.500" height="4" rx="2" fill="none" stroke="#ccc" stroke-width="1"/><rect x="4" y="0.500" width="4.500" height="4" rx="2" fill="none" stroke="#ccc" stroke-width="1"/></svg>
<div style="left:1369px;top:234px;width:14px;height:14px;background:#e4e4e4;border-radius:3px;"></div>
<svg style="left:1371px;top:236px;" width="10" height="10" viewBox="0 0 10 10"><path d="M1.500 5l2.500 3 4.500-6.500" fill="none" stroke="#333" stroke-width="2"/></svg>
<div class="t" style="top:231.76px;font-size:13.2px;line-height:18.48px;color:#e8e8e8;font-weight:500;white-space:nowrap;left:1394px;">传播帧 1</div>
<div style="left:1177px;top:256px;width:276px;height:1px;background:#3a3a3a;"></div>
<div class="t" style="top:265.76px;font-size:13.2px;line-height:18.48px;color:#e4e4e4;font-weight:500;white-space:nowrap;left:1183px;">锁定:</div>
<svg style="left:1222px;top:269px;" width="13" height="13" viewBox="0 0 13 13"><rect x="0.500" y="0.500" width="12" height="12" fill="none" stroke="#ddd" stroke-width="1"/><path d="M1 1h3.700v3.700h-3.700z M8.300 1h3.700v3.700h-3.700z M4.700 4.700h3.600v3.600h-3.600z M1 8.300h3.700v3.700h-3.700z M8.300 8.300h3.700v3.700h-3.700z" fill="#ddd"/></svg>
<svg style="left:1247px;top:267px;" width="16" height="16" viewBox="0 0 16 16"><path d="M15 1c-3 1.500-6.500 5-8.500 8.500l1.800 1.800c3-2 6-6 6.700-10.300z M5.800 10c-2.200 0-3 1.500-3 3 0 1-1 1.500-1.800 1.800 2.200 1 6.200.7 6.600-3z" fill="#ddd"/></svg>
<svg style="left:1273px;top:268px;" width="15" height="15" viewBox="0 0 15 15"><path d="M7.500 0l2.500 3h-1.700v3.700h3.700v-1.700l3 2.500-3 2.500v-1.700h-3.700v3.700h1.700l-2.500 3-2.500-3h1.700v-3.700h-3.700v1.700l-3-2.500 3-2.500v1.700h3.700v-3.700h-1.700z" fill="#ddd"/></svg>
<svg style="left:1299px;top:268px;" width="17" height="15" viewBox="0 0 17 15"><path d="M3.500 0v11.500h11.500M0 3.500h11.500v8" fill="none" stroke="#ddd" stroke-width="1.400"/><path d="M13 1l3 3M16 1l-3 3" stroke="#ddd" stroke-width="1" stroke-dasharray="1.500 1"/></svg>
<svg style="left:1328px;top:267px;" width="13" height="15" viewBox="0 0 13 15"><rect x="0.500" y="6.500" width="12" height="8.500" rx="1" fill="#ddd"/><path d="M3 6.500v-2.500a3.500 3.500 0 0 1 7 0v2.500" fill="none" stroke="#ddd" stroke-width="1.600"/><circle cx="6.500" cy="10.500" r="1.300" fill="#484848"/></svg>
<div class="t" style="top:265.76px;font-size:13.2px;line-height:18.48px;color:#e4e4e4;font-weight:500;white-space:nowrap;left:1349px;">填充:</div>
<div style="left:1383px;top:264px;width:46px;height:22px;background:#3a3a3a;border:1px solid #353535;"></div>
<div class="t" style="top:265.55px;font-size:13.5px;line-height:18.90px;color:#e8e8e8;font-weight:400;white-space:nowrap;left:1386px;">100%</div>
<div style="left:1429px;top:264px;width:18px;height:22px;background:#3f3f3f;border:1px solid #353535;border-left:none;"></div>
<svg style="left:1434.0px;top:272.5px;" width="9.0" height="7.0" viewBox="0 0 9.0 7.0"><path d="M1 1.5 L4.5 5.5 L8.0 1.5" fill="none" stroke="#d4d4d4" stroke-width="1.7"/></svg>
<div style="left:1177px;top:378.2px;width:259px;height:1px;background:#3c3c3c;"></div>
<div style="left:1212px;top:283.7px;width:1px;height:95.0px;background:#404040;"></div>
<div style="left:1188px;top:300.7px;width:14px;height:14px;background:none;border:1px solid #404040;border-radius:2px;"></div>
<div style="left:1219px;top:289.0px;width:36.5px;height:37.5px;background:#fff;border:1px solid #888;background-color:#fff;background-image:linear-gradient(45deg,#ccc 25%,transparent 25%,transparent 75%,#ccc 75%),linear-gradient(45deg,#ccc 25%,transparent 25%,transparent 75%,#ccc 75%);background-size:6px 6px;background-position:0 0,3px 3px;"></div>
<svg style="left:1219px;top:289.0px;" width="36.5" height="37.5" viewBox="0 0 36.500 37.500"><g transform="translate(1.00 0.70) scale(0.0620) translate(-452 -207)"><polygon points="664,338 693,302 731,299 753,319 783,321 816,307 849,298 876,318 891,352 908,360 927,381 944,391 947,413 942,432 946,456 934,485 918,498 900,514 884,540 895,572 905,606 924,616 948,630 942,663 916,692 876,697 840,695 804,696 766,692 720,698 688,696 656,692 627,688 596,686 577,690 551,689 531,700 516,680 520,650 545,622 577,600 596,560 608,540 613,522 622,498 587,489 584,462 596,430 593,406 609,391 602,378 625,368 650,352" fill="none" stroke="#8c8c80" stroke-width="14.5"/><path d="M698 428C720 450 750 430 782 415C810 415 840 440 871 418M741 399L762 387M803 388L822 394M714 595C740 620 765 590 765 570M848 572C820 600 870 620 894 585M751 639C790 640 770 700 690 697M748 498C790 470 800 490 824 491C820 510 760 510 743 504" fill="none" stroke="#8c8c80" stroke-width="14.5"/></g></svg>
<div class="t" style="top:297.75px;font-size:13.5px;line-height:18.90px;color:#efefef;font-weight:500;white-space:nowrap;left:1266px;">图层 7</div>
<div style="left:1423px;top:291.5px;width:12px;height:39.69999999999999px;background:#3c3c3c;"></div>
<div class="t" style="left:1403px;top:295.7px;font-family:'Liberation Serif',serif;font-style:italic;font-size:17px;line-height:22px;color:#d8d8d8;">fx</div>
<svg style="left:1425px;top:304.7px;" width="8" height="5" viewBox="0 0 8 5"><path d="M0.500 4.500l3.500-4 3.500 4" fill="none" stroke="#ddd" stroke-width="1.400"/></svg>
<svg style="left:1237px;top:336.7px;" width="17" height="11" viewBox="0 0 17 11"><path d="M0.500 5.500c2-3.500 5-5 8-5s6 1.500 8 5c-2 3.500-5 5-8 5s-6-1.500-8-5z" fill="#9a9a9a"/><circle cx="8.500" cy="5.500" r="3.200" fill="#484848"/><circle cx="8.500" cy="5.500" r="1.600" fill="#9a9a9a"/></svg>
<div class="t" style="top:332.46px;font-size:13.2px;line-height:18.48px;color:#ececec;font-weight:500;white-space:nowrap;left:1257px;">效果</div>
<svg style="left:1257px;top:360.2px;" width="17" height="11" viewBox="0 0 17 11"><path d="M0.500 5.500c2-3.500 5-5 8-5s6 1.500 8 5c-2 3.500-5 5-8 5s-6-1.500-8-5z" fill="#9a9a9a"/><circle cx="8.500" cy="5.500" r="3.200" fill="#484848"/><circle cx="8.500" cy="5.500" r="1.600" fill="#9a9a9a"/></svg>
<div class="t" style="top:355.96px;font-size:13.2px;line-height:18.48px;color:#ececec;font-weight:500;white-space:nowrap;left:1277px;">颜色叠加</div>
<div style="left:1177px;top:427.3px;width:259px;height:1px;background:#3c3c3c;"></div>
<div style="left:1212px;top:378.7px;width:1px;height:49.1px;background:#404040;"></div>
<div style="left:1188px;top:395.7px;width:14px;height:14px;background:none;border:1px solid #404040;border-radius:2px;"></div>
<div style="left:1219px;top:384.0px;width:36.5px;height:37.5px;background:#fff;border:1px solid #888;background-color:#fff;background-image:linear-gradient(45deg,#ccc 25%,transparent 25%,transparent 75%,#ccc 75%),linear-gradient(45deg,#ccc 25%,transparent 25%,transparent 75%,#ccc 75%);background-size:6px 6px;background-position:0 0,3px 3px;"></div>
<svg style="left:1219px;top:384.0px;" width="36.5" height="37.5" viewBox="0 0 36.500 37.500"><g transform="translate(1.00 0.70) scale(0.0620) translate(-452 -207)"><polygon points="664,338 693,302 731,299 753,319 783,321 816,307 849,298 876,318 891,352 908,360 927,381 944,391 947,413 942,432 946,456 934,485 918,498 900,514 884,540 895,572 905,606 924,616 948,630 942,663 916,692 876,697 840,695 804,696 766,692 720,698 688,696 656,692 627,688 596,686 577,690 551,689 531,700 516,680 520,650 545,622 577,600 596,560 608,540 613,522 622,498 587,489 584,462 596,430 593,406 609,391 602,378 625,368 650,352" fill="#c3d38f"/></g></svg>
<div class="t" style="top:392.75px;font-size:13.5px;line-height:18.90px;color:#efefef;font-weight:500;white-space:nowrap;left:1266px;">图层 20</div>
<div style="left:1177px;top:522.3px;width:259px;height:1px;background:#3c3c3c;"></div>
<div style="left:1212px;top:427.8px;width:1px;height:95.0px;background:#404040;"></div>
<div style="left:1188px;top:444.8px;width:14px;height:14px;background:none;border:1px solid #404040;border-radius:2px;"></div>
<div style="left:1219px;top:433.1px;width:36.5px;height:37.5px;background:#fff;border:1px solid #888;background-color:#fff;background-image:linear-gradient(45deg,#ccc 25%,transparent 25%,transparent 75%,#ccc 75%),linear-gradient(45deg,#ccc 25%,transparent 25%,transparent 75%,#ccc 75%);background-size:6px 6px;background-position:0 0,3px 3px;"></div>
<svg style="left:1219px;top:433.1px;" width="36.5" height="37.5" viewBox="0 0 36.500 37.500"><g transform="translate(1.00 0.70) scale(0.0620) translate(-452 -207)"><polygon points="664,338 693,302 731,299 753,319 783,321 816,307 849,298 876,318 891,352 908,360 927,381 944,391 947,413 942,432 946,456 934,485 918,498 900,514 884,540 895,572 905,606 924,616 948,630 942,663 916,692 876,697 840,695 804,696 766,692 720,698 688,696 656,692 627,688 596,686 577,690 551,689 531,700 516,680 520,650 545,622 577,600 596,560 608,540 613,522 622,498 587,489 584,462 596,430 593,406 609,391 602,378 625,368 650,352" fill="none" stroke="#8c8c80" stroke-width="14.5"/><path d="M698 428C720 450 750 430 782 415C810 415 840 440 871 418M741 399L762 387M803 388L822 394M714 595C740 620 765 590 765 570M848 572C820 600 870 620 894 585M751 639C790 640 770 700 690 697M748 498C790 470 800 490 824 491C820 510 760 510 743 504" fill="none" stroke="#8c8c80" stroke-width="14.5"/></g></svg>
<div class="t" style="top:441.85px;font-size:13.5px;line-height:18.90px;color:#efefef;font-weight:500;white-space:nowrap;left:1266px;">图层 12</div>
<div style="left:1423px;top:428.8px;width:12px;height:46.5px;background:#3c3c3c;"></div>
<div class="t" style="left:1403px;top:439.8px;font-family:'Liberation Serif',serif;font-style:italic;font-size:17px;line-height:22px;color:#d8d8d8;">fx</div>
<svg style="left:1425px;top:448.8px;" width="8" height="5" viewBox="0 0 8 5"><path d="M0.500 4.500l3.500-4 3.500 4" fill="none" stroke="#ddd" stroke-width="1.400"/></svg>
<svg style="left:1237px;top:480.8px;" width="17" height="11" viewBox="0 0 17 11"><path d="M0.500 5.500c2-3.500 5-5 8-5s6 1.500 8 5c-2 3.500-5 5-8 5s-6-1.500-8-5z" fill="#9a9a9a"/><circle cx="8.500" cy="5.500" r="3.200" fill="#484848"/><circle cx="8.500" cy="5.500" r="1.600" fill="#9a9a9a"/></svg>
<div class="t" style="top:476.56px;font-size:13.2px;line-height:18.48px;color:#ececec;font-weight:500;white-space:nowrap;left:1257px;">效果</div>
<svg style="left:1257px;top:504.3px;" width="17" height="11" viewBox="0 0 17 11"><path d="M0.500 5.500c2-3.500 5-5 8-5s6 1.500 8 5c-2 3.500-5 5-8 5s-6-1.500-8-5z" fill="#9a9a9a"/><circle cx="8.500" cy="5.500" r="3.200" fill="#484848"/><circle cx="8.500" cy="5.500" r="1.600" fill="#9a9a9a"/></svg>
<div class="t" style="top:500.06px;font-size:13.2px;line-height:18.48px;color:#ececec;font-weight:500;white-space:nowrap;left:1277px;">颜色叠加</div>
<div style="left:1177px;top:571.4px;width:259px;height:1px;background:#3c3c3c;"></div>
<div style="left:1212px;top:522.8px;width:1px;height:49.1px;background:#404040;"></div>
<div style="left:1188px;top:539.8px;width:14px;height:14px;background:none;border:1px solid #404040;border-radius:2px;"></div>
<div style="left:1219px;top:528.0999999999999px;width:36.5px;height:37.5px;background:#fff;border:1px solid #888;background-color:#fff;background-image:linear-gradient(45deg,#ccc 25%,transparent 25%,transparent 75%,#ccc 75%),linear-gradient(45deg,#ccc 25%,transparent 25%,transparent 75%,#ccc 75%);background-size:6px 6px;background-position:0 0,3px 3px;"></div>
<svg style="left:1219px;top:528.0999999999999px;" width="36.5" height="37.5" viewBox="0 0 36.500 37.500"><g transform="translate(1.00 0.70) scale(0.0620) translate(-452 -207)"><polygon points="664,338 693,302 731,299 753,319 783,321 816,307 849,298 876,318 891,352 908,360 927,381 944,391 947,413 942,432 946,456 934,485 918,498 900,514 884,540 895,572 905,606 924,616 948,630 942,663 916,692 876,697 840,695 804,696 766,692 720,698 688,696 656,692 627,688 596,686 577,690 551,689 531,700 516,680 520,650 545,622 577,600 596,560 608,540 613,522 622,498 587,489 584,462 596,430 593,406 609,391 602,378 625,368 650,352" fill="#c3d38f"/></g></svg>
<div class="t" style="top:536.85px;font-size:13.5px;line-height:18.90px;color:#efefef;font-weight:500;white-space:nowrap;left:1266px;">图层 22</div>
<div style="left:1177px;top:666.4px;width:259px;height:1px;background:#3c3c3c;"></div>
<div style="left:1212px;top:571.9px;width:1px;height:95.0px;background:#404040;"></div>
<svg style="left:1187px;top:590.4px;" width="17" height="11" viewBox="0 0 17 11"><path d="M0.500 5.500c2-3.500 5-5 8-5s6 1.500 8 5c-2 3.500-5 5-8 5s-6-1.500-8-5z" fill="#e4e4e4"/><circle cx="8.500" cy="5.500" r="3.200" fill="#484848"/><circle cx="8.500" cy="5.500" r="1.600" fill="#e4e4e4"/></svg>
<div style="left:1219px;top:577.1999999999999px;width:36.5px;height:37.5px;background:#fff;border:1px solid #888;background-color:#fff;background-image:linear-gradient(45deg,#ccc 25%,transparent 25%,transparent 75%,#ccc 75%),linear-gradient(45deg,#ccc 25%,transparent 25%,transparent 75%,#ccc 75%);background-size:6px 6px;background-position:0 0,3px 3px;"></div>
<svg style="left:1219px;top:577.1999999999999px;" width="36.5" height="37.5" viewBox="0 0 36.500 37.500"><g transform="translate(1.00 0.70) scale(0.0620) translate(-452 -207)"><polygon points="664,338 693,302 731,299 753,319 783,321 816,307 849,298 876,318 891,352 908,360 927,381 944,391 947,413 942,432 946,456 934,485 918,498 900,514 884,540 895,572 905,606 924,616 948,630 942,663 916,692 876,697 840,695 804,696 766,692 720,698 688,696 656,692 627,688 596,686 577,690 551,689 531,700 516,680 520,650 545,622 577,600 596,560 608,540 613,522 622,498 587,489 584,462 596,430 593,406 609,391 602,378 625,368 650,352" fill="none" stroke="#8c8c80" stroke-width="14.5"/><path d="M698 428C720 450 750 430 782 415C810 415 840 440 871 418M741 399L762 387M803 388L822 394M714 595C740 620 765 590 765 570M848 572C820 600 870 620 894 585M751 639C790 640 770 700 690 697M748 498C790 470 800 490 824 491C820 510 760 510 743 504" fill="none" stroke="#8c8c80" stroke-width="14.5"/></g></svg>
<div class="t" style="top:585.95px;font-size:13.5px;line-height:18.90px;color:#efefef;font-weight:500;white-space:nowrap;left:1266px;">图层 13</div>
<div style="left:1423px;top:572.9px;width:12px;height:46.5px;background:#3c3c3c;"></div>
<div class="t" style="left:1403px;top:583.9px;font-family:'Liberation Serif',serif;font-style:italic;font-size:17px;line-height:22px;color:#d8d8d8;">fx</div>
<svg style="left:1425px;top:592.9px;" width="8" height="5" viewBox="0 0 8 5"><path d="M0.500 4.500l3.500-4 3.500 4" fill="none" stroke="#ddd" stroke-width="1.400"/></svg>
<svg style="left:1237px;top:624.9px;" width="17" height="11" viewBox="0 0 17 11"><path d="M0.500 5.500c2-3.500 5-5 8-5s6 1.500 8 5c-2 3.500-5 5-8 5s-6-1.500-8-5z" fill="#e0e0e0"/><circle cx="8.500" cy="5.500" r="3.200" fill="#484848"/><circle cx="8.500" cy="5.500" r="1.600" fill="#e0e0e0"/></svg>
<div class="t" style="top:620.66px;font-size:13.2px;line-height:18.48px;color:#ececec;font-weight:500;white-space:nowrap;left:1257px;">效果</div>
<svg style="left:1257px;top:648.4px;" width="17" height="11" viewBox="0 0 17 11"><path d="M0.500 5.500c2-3.500 5-5 8-5s6 1.500 8 5c-2 3.500-5 5-8 5s-6-1.500-8-5z" fill="#e0e0e0"/><circle cx="8.500" cy="5.500" r="3.200" fill="#484848"/><circle cx="8.500" cy="5.500" r="1.600" fill="#e0e0e0"/></svg>
<div class="t" style="top:644.16px;font-size:13.2px;line-height:18.48px;color:#ececec;font-weight:500;white-space:nowrap;left:1277px;">颜色叠加</div>
<div style="left:1177px;top:667.4px;width:259px;height:47.1px;background:#5c5c5c;"></div>
<div style="left:1177px;top:715.5px;width:259px;height:1px;background:#3c3c3c;"></div>
<div style="left:1212px;top:666.9px;width:1px;height:49.1px;background:#404040;"></div>
<svg style="left:1187px;top:685.4px;" width="17" height="11" viewBox="0 0 17 11"><path d="M0.500 5.500c2-3.500 5-5 8-5s6 1.500 8 5c-2 3.500-5 5-8 5s-6-1.500-8-5z" fill="#e4e4e4"/><circle cx="8.500" cy="5.500" r="3.200" fill="#5c5c5c"/><circle cx="8.500" cy="5.500" r="1.600" fill="#e4e4e4"/></svg>
<div style="left:1219px;top:672.1999999999999px;width:36.5px;height:37.5px;background:#fff;border:1px solid #888;background-color:#fff;background-image:linear-gradient(45deg,#ccc 25%,transparent 25%,transparent 75%,#ccc 75%),linear-gradient(45deg,#ccc 25%,transparent 25%,transparent 75%,#ccc 75%);background-size:6px 6px;background-position:0 0,3px 3px;"></div>
<svg style="left:1219px;top:672.1999999999999px;" width="36.5" height="37.5" viewBox="0 0 36.500 37.500"><g transform="translate(1.00 0.70) scale(0.0620) translate(-452 -207)"><polygon points="664,338 693,302 731,299 753,319 783,321 816,307 849,298 876,318 891,352 908,360 927,381 944,391 947,413 942,432 946,456 934,485 918,498 900,514 884,540 895,572 905,606 924,616 948,630 942,663 916,692 876,697 840,695 804,696 766,692 720,698 688,696 656,692 627,688 596,686 577,690 551,689 531,700 516,680 520,650 545,622 577,600 596,560 608,540 613,522 622,498 587,489 584,462 596,430 593,406 609,391 602,378 625,368 650,352" fill="#bccb8e" stroke="#55703f" stroke-width="14.5"/><polygon points="767,561 798,545 833,561 852,595 867,629 856,669 831,694 764,694 776,661 764,638 743,625 753,601 773,574" fill="#faf7d6"/><ellipse cx="788" cy="452" rx="30" ry="30" fill="#cd777e"/><path d="M698 428C720 450 750 430 782 415C810 415 840 440 871 418M714 595C740 620 765 590 765 570M848 572C820 600 870 620 894 585M751 639C790 640 770 700 690 697" fill="none" stroke="#55703f" stroke-width="14.5"/></g></svg>
<svg style="left:1215px;top:668.4px;" width="44.5" height="45.5" viewBox="0 0 44.5 45.5"><path d="M0.500 9v-8.500h8.500M35.500 0.500h8.500v8.500M44 36.500v8.500h-8.500M9 45h-8.500v-8.500" fill="none" stroke="#e8e8e8" stroke-width="1.300"/></svg>
<div class="t" style="top:680.95px;font-size:13.5px;line-height:18.90px;color:#efefef;font-weight:500;white-space:nowrap;left:1266px;">图层 23</div>
<div style="left:1177px;top:810.5px;width:259px;height:1px;background:#3c3c3c;"></div>
<div style="left:1212px;top:716.0px;width:1px;height:95.0px;background:#404040;"></div>
<div style="left:1188px;top:733.0px;width:14px;height:14px;background:none;border:1px solid #404040;border-radius:2px;"></div>
<div style="left:1219px;top:721.3px;width:36.5px;height:37.5px;background:#fff;border:1px solid #888;background-color:#fff;background-image:linear-gradient(45deg,#ccc 25%,transparent 25%,transparent 75%,#ccc 75%),linear-gradient(45deg,#ccc 25%,transparent 25%,transparent 75%,#ccc 75%);background-size:6px 6px;background-position:0 0,3px 3px;"></div>
<svg style="left:1219px;top:721.3px;" width="36.5" height="37.5" viewBox="0 0 36.500 37.500"><g transform="translate(1.00 0.70) scale(0.0620) translate(-452 -207)"><polygon points="664,338 693,302 731,299 753,319 783,321 816,307 849,298 876,318 891,352 908,360 927,381 944,391 947,413 942,432 946,456 934,485 918,498 900,514 884,540 895,572 905,606 924,616 948,630 942,663 916,692 876,697 840,695 804,696 766,692 720,698 688,696 656,692 627,688 596,686 577,690 551,689 531,700 516,680 520,650 545,622 577,600 596,560 608,540 613,522 622,498 587,489 584,462 596,430 593,406 609,391 602,378 625,368 650,352" fill="none" stroke="#8c8c80" stroke-width="14.5"/><path d="M698 428C720 450 750 430 782 415C810 415 840 440 871 418M741 399L762 387M803 388L822 394M714 595C740 620 765 590 765 570M848 572C820 600 870 620 894 585M751 639C790 640 770 700 690 697M748 498C790 470 800 490 824 491C820 510 760 510 743 504" fill="none" stroke="#8c8c80" stroke-width="14.5"/></g></svg>
<div class="t" style="top:730.05px;font-size:13.5px;line-height:18.90px;color:#efefef;font-weight:500;white-space:nowrap;left:1266px;">图层 14</div>
<div style="left:1423px;top:717.0px;width:12px;height:46.5px;background:#3c3c3c;"></div>
<div class="t" style="left:1403px;top:728.0px;font-family:'Liberation Serif',serif;font-style:italic;font-size:17px;line-height:22px;color:#d8d8d8;">fx</div>
<svg style="left:1425px;top:737.0px;" width="8" height="5" viewBox="0 0 8 5"><path d="M0.500 4.500l3.500-4 3.500 4" fill="none" stroke="#ddd" stroke-width="1.400"/></svg>
<svg style="left:1237px;top:769.0px;" width="17" height="11" viewBox="0 0 17 11"><path d="M0.500 5.500c2-3.500 5-5 8-5s6 1.500 8 5c-2 3.500-5 5-8 5s-6-1.500-8-5z" fill="#9a9a9a"/><circle cx="8.500" cy="5.500" r="3.200" fill="#484848"/><circle cx="8.500" cy="5.500" r="1.600" fill="#9a9a9a"/></svg>
<div class="t" style="top:764.76px;font-size:13.2px;line-height:18.48px;color:#ececec;font-weight:500;white-space:nowrap;left:1257px;">效果</div>
<svg style="left:1257px;top:792.5px;" width="17" height="11" viewBox="0 0 17 11"><path d="M0.500 5.500c2-3.500 5-5 8-5s6 1.500 8 5c-2 3.500-5 5-8 5s-6-1.500-8-5z" fill="#9a9a9a"/><circle cx="8.500" cy="5.500" r="3.200" fill="#484848"/><circle cx="8.500" cy="5.500" r="1.600" fill="#9a9a9a"/></svg>
<div class="t" style="top:788.26px;font-size:13.2px;line-height:18.48px;color:#ececec;font-weight:500;white-space:nowrap;left:1277px;">颜色叠加</div>
<div style="left:1177px;top:859.6px;width:259px;height:1px;background:#3c3c3c;"></div>
<div style="left:1212px;top:811.0px;width:1px;height:49.1px;background:#404040;"></div>
<div style="left:1188px;top:828.0px;width:14px;height:14px;background:none;border:1px solid #404040;border-radius:2px;"></div>
<div style="left:1219px;top:816.3px;width:36.5px;height:37.5px;background:#fff;border:1px solid #888;background-color:#fff;background-image:linear-gradient(45deg,#ccc 25%,transparent 25%,transparent 75%,#ccc 75%),linear-gradient(45deg,#ccc 25%,transparent 25%,transparent 75%,#ccc 75%);background-size:6px 6px;background-position:0 0,3px 3px;"></div>
<svg style="left:1219px;top:816.3px;" width="36.5" height="37.5" viewBox="0 0 36.500 37.500"><g transform="translate(1.00 0.70) scale(0.0620) translate(-452 -207)"><polygon points="664,338 693,302 731,299 753,319 783,321 816,307 849,298 876,318 891,352 908,360 927,381 944,391 947,413 942,432 946,456 934,485 918,498 900,514 884,540 895,572 905,606 924,616 948,630 942,663 916,692 876,697 840,695 804,696 766,692 720,698 688,696 656,692 627,688 596,686 577,690 551,689 531,700 516,680 520,650 545,622 577,600 596,560 608,540 613,522 622,498 587,489 584,462 596,430 593,406 609,391 602,378 625,368 650,352" fill="#bccb8e" stroke="#55703f" stroke-width="14.5"/><polygon points="767,561 798,545 833,561 852,595 867,629 856,669 831,694 764,694 776,661 764,638 743,625 753,601 773,574" fill="#faf7d6"/><ellipse cx="788" cy="452" rx="30" ry="30" fill="#cd777e"/><path d="M698 428C720 450 750 430 782 415C810 415 840 440 871 418M714 595C740 620 765 590 765 570M848 572C820 600 870 620 894 585M751 639C790 640 770 700 690 697" fill="none" stroke="#55703f" stroke-width="14.5"/></g></svg>
<div class="t" style="top:825.05px;font-size:13.5px;line-height:18.90px;color:#efefef;font-weight:500;white-space:nowrap;left:1266px;">图层 24</div>
<div style="left:1177px;top:908.7px;width:259px;height:1px;background:#3c3c3c;"></div>
<div style="left:1212px;top:860.1px;width:1px;height:49.1px;background:#404040;"></div>
<div style="left:1188px;top:877.1px;width:14px;height:14px;background:none;border:1px solid #404040;border-radius:2px;"></div>
<div style="left:1219px;top:865.4px;width:36.5px;height:37.5px;background:#fff;border:1px solid #888;background-color:#fff;background-image:linear-gradient(45deg,#ccc 25%,transparent 25%,transparent 75%,#ccc 75%),linear-gradient(45deg,#ccc 25%,transparent 25%,transparent 75%,#ccc 75%);background-size:6px 6px;background-position:0 0,3px 3px;"></div>
<svg style="left:1219px;top:865.4px;" width="36.5" height="37.5" viewBox="0 0 36.500 37.500"><g transform="translate(1.00 0.70) scale(0.0620) translate(-452 -207)"><polygon points="664,338 693,302 731,299 753,319 783,321 816,307 849,298 876,318 891,352 908,360 927,381 944,391 947,413 942,432 946,456 934,485 918,498 900,514 884,540 895,572 905,606 924,616 948,630 942,663 916,692 876,697 840,695 804,696 766,692 720,698 688,696 656,692 627,688 596,686 577,690 551,689 531,700 516,680 520,650 545,622 577,600 596,560 608,540 613,522 622,498 587,489 584,462 596,430 593,406 609,391 602,378 625,368 650,352" fill="none" stroke="#8c8c80" stroke-width="14.5"/><path d="M698 428C720 450 750 430 782 415C810 415 840 440 871 418M741 399L762 387M803 388L822 394M714 595C740 620 765 590 765 570M848 572C820 600 870 620 894 585M751 639C790 640 770 700 690 697M748 498C790 470 800 490 824 491C820 510 760 510 743 504" fill="none" stroke="#8c8c80" stroke-width="14.5"/></g></svg>
<div class="t" style="top:874.15px;font-size:13.5px;line-height:18.90px;color:#efefef;font-weight:500;white-space:nowrap;left:1266px;">图层 5</div>
<div style="left:1177px;top:957.8000000000001px;width:259px;height:1px;background:#3c3c3c;"></div>
<div style="left:1212px;top:909.2px;width:1px;height:49.1px;background:#404040;"></div>
<div style="left:1188px;top:926.2px;width:14px;height:14px;background:none;border:1px solid #404040;border-radius:2px;"></div>
<div style="left:1219px;top:914.5px;width:36.5px;height:37.5px;background:#fff;border:1px solid #888;background-color:#fff;background-image:linear-gradient(45deg,#ccc 25%,transparent 25%,transparent 75%,#ccc 75%),linear-gradient(45deg,#ccc 25%,transparent 25%,transparent 75%,#ccc 75%);background-size:6px 6px;background-position:0 0,3px 3px;"></div>
<svg style="left:1219px;top:914.5px;" width="36.5" height="37.5" viewBox="0 0 36.500 37.500"><g transform="translate(1.00 0.70) scale(0.0620) translate(-452 -207)"><polygon points="664,338 693,302 731,299 753,319 783,321 816,307 849,298 876,318 891,352 908,360 927,381 944,391 947,413 942,432 946,456 934,485 918,498 900,514 884,540 895,572 905,606 924,616 948,630 942,663 916,692 876,697 840,695 804,696 766,692 720,698 688,696 656,692 627,688 596,686 577,690 551,689 531,700 516,680 520,650 545,622 577,600 596,560 608,540 613,522 622,498 587,489 584,462 596,430 593,406 609,391 602,378 625,368 650,352" fill="#bccb8e" stroke="#55703f" stroke-width="14.5"/><polygon points="767,561 798,545 833,561 852,595 867,629 856,669 831,694 764,694 776,661 764,638 743,625 753,601 773,574" fill="#faf7d6"/><ellipse cx="788" cy="452" rx="30" ry="30" fill="#cd777e"/><path d="M698 428C720 450 750 430 782 415C810 415 840 440 871 418M714 595C740 620 765 590 765 570M848 572C820 600 870 620 894 585M751 639C790 640 770 700 690 697" fill="none" stroke="#55703f" stroke-width="14.5"/></g></svg>
<div class="t" style="top:923.25px;font-size:13.5px;line-height:18.90px;color:#efefef;font-weight:500;white-space:nowrap;left:1266px;">图层 25</div>
<div style="left:1177px;top:1052.8000000000002px;width:259px;height:1px;background:#3c3c3c;"></div>
<div style="left:1212px;top:958.3000000000001px;width:1px;height:95.0px;background:#404040;"></div>
<div style="left:1188px;top:975.3000000000001px;width:14px;height:14px;background:none;border:1px solid #404040;border-radius:2px;"></div>
<div style="left:1219px;top:963.6px;width:36.5px;height:37.5px;background:#fff;border:1px solid #888;background-color:#fff;background-image:linear-gradient(45deg,#ccc 25%,transparent 25%,transparent 75%,#ccc 75%),linear-gradient(45deg,#ccc 25%,transparent 25%,transparent 75%,#ccc 75%);background-size:6px 6px;background-position:0 0,3px 3px;"></div>
<svg style="left:1219px;top:963.6px;" width="36.5" height="37.5" viewBox="0 0 36.500 37.500"><g transform="translate(1.00 0.70) scale(0.0620) translate(-452 -207)"><polygon points="664,338 693,302 731,299 753,319 783,321 816,307 849,298 876,318 891,352 908,360 927,381 944,391 947,413 942,432 946,456 934,485 918,498 900,514 884,540 895,572 905,606 924,616 948,630 942,663 916,692 876,697 840,695 804,696 766,692 720,698 688,696 656,692 627,688 596,686 577,690 551,689 531,700 516,680 520,650 545,622 577,600 596,560 608,540 613,522 622,498 587,489 584,462 596,430 593,406 609,391 602,378 625,368 650,352" fill="none" stroke="#8c8c80" stroke-width="14.5"/><path d="M698 428C720 450 750 430 782 415C810 415 840 440 871 418M741 399L762 387M803 388L822 394M714 595C740 620 765 590 765 570M848 572C820 600 870 620 894 585M751 639C790 640 770 700 690 697M748 498C790 470 800 490 824 491C820 510 760 510 743 504" fill="none" stroke="#8c8c80" stroke-width="14.5"/></g></svg>
<div class="t" style="top:972.35px;font-size:13.5px;line-height:18.90px;color:#efefef;font-weight:500;white-space:nowrap;left:1266px;">图层 11</div>
<div style="left:1423px;top:959.3000000000001px;width:12px;height:46.5px;background:#3c3c3c;"></div>
<div class="t" style="left:1403px;top:970.3000000000001px;font-family:'Liberation Serif',serif;font-style:italic;font-size:17px;line-height:22px;color:#d8d8d8;">fx</div>
<svg style="left:1425px;top:979.3000000000001px;" width="8" height="5" viewBox="0 0 8 5"><path d="M0.500 4.500l3.500-4 3.500 4" fill="none" stroke="#ddd" stroke-width="1.400"/></svg>
<svg style="left:1237px;top:1011.3000000000001px;" width="17" height="11" viewBox="0 0 17 11"><path d="M0.500 5.500c2-3.500 5-5 8-5s6 1.500 8 5c-2 3.500-5 5-8 5s-6-1.500-8-5z" fill="#9a9a9a"/><circle cx="8.500" cy="5.500" r="3.200" fill="#484848"/><circle cx="8.500" cy="5.500" r="1.600" fill="#9a9a9a"/></svg>
<div class="t" style="top:1007.06px;font-size:13.2px;line-height:18.48px;color:#ececec;font-weight:500;white-space:nowrap;left:1257px;">效果</div>
<svg style="left:1257px;top:1034.8000000000002px;" width="17" height="11" viewBox="0 0 17 11"><path d="M0.500 5.500c2-3.500 5-5 8-5s6 1.500 8 5c-2 3.500-5 5-8 5s-6-1.500-8-5z" fill="#9a9a9a"/><circle cx="8.500" cy="5.500" r="3.200" fill="#484848"/><circle cx="8.500" cy="5.500" r="1.600" fill="#9a9a9a"/></svg>
<div class="t" style="top:1030.56px;font-size:13.2px;line-height:18.48px;color:#ececec;font-weight:500;white-space:nowrap;left:1277px;">颜色叠加</div>
<div style="left:1177px;top:286.5px;width:259px;height:5.5px;background:#484848;"></div>
<div style="left:1436px;top:291px;width:17px;height:758px;background:#454545;border-left:1px solid #3c3c3c;"></div>
<div style="left:1440px;top:416px;width:11px;height:339px;background:#5e5e5e;border-radius:6px;"></div>
<div style="left:1177px;top:1048px;width:276px;height:32px;background:#484848;border-top:1px solid #333;"></div>
<svg style="left:1209px;top:1059px;" width="17" height="9" viewBox="0 0 17 9"><rect x="0.800" y="0.800" width="9" height="7.400" rx="3.700" fill="none" stroke="#777" stroke-width="1.500"/><rect x="7.200" y="0.800" width="9" height="7.400" rx="3.700" fill="none" stroke="#777" stroke-width="1.500"/></svg>
<div class="t" style="left:1244px;top:1052px;font-family:'Liberation Serif',serif;font-style:italic;font-size:17px;line-height:22px;color:#bdbdbd;">fx</div>
<svg style="left:1276px;top:1056px;" width="16" height="14" viewBox="0 0 16 14"><rect x="0" y="0" width="16" height="14" rx="1" fill="#bdbdbd"/><circle cx="8" cy="7" r="4" fill="#484848"/></svg>
<svg style="left:1308px;top:1056px;" width="15" height="15" viewBox="0 0 15 15"><circle cx="7.500" cy="7.500" r="6.500" fill="none" stroke="#bdbdbd" stroke-width="1.500"/><path d="M12.100 2.900a6.500 6.500 0 0 0-9.200 9.200z" fill="#bdbdbd"/></svg>
<svg style="left:1340px;top:1057px;" width="16" height="13" viewBox="0 0 16 13"><path d="M0 1.500h6l1.500 2h8.500v9.500h-16z" fill="#bdbdbd"/></svg>
<svg style="left:1373px;top:1056px;" width="15" height="15" viewBox="0 0 15 15"><rect x="0.700" y="0.700" width="13.600" height="13.600" fill="none" stroke="#bdbdbd" stroke-width="1.400"/><path d="M7.500 4v7M4 7.500h7" stroke="#bdbdbd" stroke-width="1.400"/></svg>
<svg style="left:1406px;top:1055px;" width="13" height="16" viewBox="0 0 13 16"><path d="M0 3h13M4.500 3v-2h4v2" fill="none" stroke="#bdbdbd" stroke-width="1.400"/><path d="M1.500 3.500l.8 12h8.400l.8-12" fill="none" stroke="#bdbdbd" stroke-width="1.400"/><path d="M4.500 6v7M6.500 6v7M8.500 6v7" stroke="#bdbdbd" stroke-width="1"/></svg>
<div style="left:1454px;top:115px;width:3px;height:965px;background:#3b3b3b;"></div>
<div style="left:1457px;top:115px;width:44px;height:965px;background:#484848;border-left:1px solid #333;border-right:1px solid #333;"></div>
<div style="left:1501px;top:115px;width:4px;height:965px;background:#3b3b3b;"></div>
<div style="left:1470px;top:120px;width:18px;height:3px;background:#404040;"></div>
<svg style="left:1469px;top:130px;" width="22" height="24" viewBox="0 0 22 24"><rect x="1" y="1" width="5" height="5" fill="none" stroke="#dcdcdc" stroke-width="1.200"/><rect x="1" y="9" width="5" height="5" fill="none" stroke="#dcdcdc" stroke-width="1.200"/><rect x="0.500" y="16.500" width="6" height="6" fill="#dcdcdc"/><path d="M11 20c6 0 9-4 8-9-0.500-3-3-5-6-5.500" fill="none" stroke="#dcdcdc" stroke-width="2"/><path d="M15 2l-4 3.500 4.500 3z" fill="#dcdcdc"/></svg>
<svg style="left:1471px;top:166px;" width="18" height="19" viewBox="0 0 18 19"><path d="M0 0l18 9.500-18 9.500z" fill="#dcdcdc"/></svg>
<div style="left:1458px;top:197px;width:42px;height:1px;background:#333;"></div>
<div style="left:1458px;top:198px;width:42px;height:1px;background:#4f4f4f;"></div>
<div style="left:1470px;top:203px;width:18px;height:3px;background:#404040;"></div>
<svg style="left:1469px;top:215px;" width="21" height="21" viewBox="0 0 21 21"><circle cx="10.500" cy="10.500" r="9.300" fill="none" stroke="#dcdcdc" stroke-width="1.600"/><circle cx="10.500" cy="5.800" r="1.300" fill="#dcdcdc"/><path d="M10.500 8.500v7.500" stroke="#dcdcdc" stroke-width="2"/></svg>
<div style="left:1458px;top:246px;width:42px;height:1px;background:#333;"></div>
<div style="left:1458px;top:247px;width:42px;height:1px;background:#4f4f4f;"></div>
<div style="left:1470px;top:252px;width:18px;height:3px;background:#404040;"></div>
<svg style="left:1467px;top:264px;" width="26" height="20" viewBox="0 0 26 20"><path d="M1 2h1.500M4 2h5M1 5.500h1.500M4 5.500h5M1 9h1.500M4 9h5" stroke="#dcdcdc" stroke-width="1.300"/><path d="M25 2c-3.500 1.500-8 5.500-10 9l2 2c3.500-2 7-6.500 8-11z M13.500 11.500c-2.500 0-3.300 1.600-3.300 3.300 0 1.200-1.200 1.700-2 2 2.500 1.300 7 .8 7.400-3.300z" fill="#dcdcdc"/></svg>
<svg style="left:1468px;top:298px;" width="24" height="20" viewBox="0 0 24 20"><path d="M8 5h15M2 15h11" stroke="#dcdcdc" stroke-width="2"/><path d="M0 5c2-3 5-4.500 9-4.500 1.500 1.500 1.500 7.500 0 9-4 0-7-1.500-9-4.500z" fill="#dcdcdc"/><path d="M12 15l7-6.500c3 3 3 10 0 13z" fill="#dcdcdc"/></svg>
<div style="left:1458px;top:330px;width:42px;height:1px;background:#333;"></div>
<div style="left:1458px;top:331px;width:42px;height:1px;background:#4f4f4f;"></div>
<div style="left:1470px;top:336px;width:18px;height:3px;background:#404040;"></div>
<div class="t" style="top:339.60px;font-size:22px;line-height:30.80px;color:#dcdcdc;font-weight:400;white-space:nowrap;left:1471px;">A</div>
<div style="left:1487.5px;top:346px;width:1.5px;height:20px;background:#dcdcdc;"></div>
<svg style="left:1472px;top:381px;" width="15" height="20" viewBox="0 0 15 20"><path d="M7 0h8v2h-2v18h-2v-18h-2v18h-2v-9a5.500 5.500 0 0 1 0-11z" fill="#dcdcdc"/></svg>
<div style="left:1458px;top:410px;width:42px;height:1px;background:#333;"></div>
<div style="left:1458px;top:411px;width:42px;height:1px;background:#4f4f4f;"></div>
<div style="left:1470px;top:416px;width:18px;height:3px;background:#404040;"></div>
<svg style="left:1467px;top:428px;" width="24" height="22" viewBox="0 0 24 22"><path d="M0 4h24M0 11h24M0 18h24" stroke="#dcdcdc" stroke-width="1.300"/><circle cx="8" cy="4" r="2.600" fill="#484848" stroke="#dcdcdc" stroke-width="1.300"/><circle cx="16" cy="11" r="2.600" fill="#484848" stroke="#dcdcdc" stroke-width="1.300"/><circle cx="9" cy="18" r="2.600" fill="#484848" stroke="#dcdcdc" stroke-width="1.300"/></svg>
<div style="left:1458px;top:459px;width:42px;height:1px;background:#333;"></div>
<div style="left:1458px;top:460px;width:42px;height:1px;background:#4f4f4f;"></div>
<div style="left:1470px;top:465px;width:18px;height:3px;background:#404040;"></div>
<svg style="left:1469px;top:479px;" width="20" height="20" viewBox="0 0 20 20"><circle cx="10" cy="10" r="8.800" fill="none" stroke="#dcdcdc" stroke-width="1.800"/><path d="M16.200 3.800a8.800 8.800 0 0 0-12.400 12.400z" fill="#dcdcdc"/></svg>
<div style="left:1458px;top:508px;width:42px;height:1px;background:#333;"></div>
<div style="left:1458px;top:509px;width:42px;height:1px;background:#4f4f4f;"></div>
<div style="left:1470px;top:514px;width:18px;height:3px;background:#404040;"></div>
<svg style="left:1468px;top:526px;" width="22" height="24" viewBox="0 0 22 24"><rect x="4" y="1" width="17" height="17" rx="1" fill="none" stroke="#dcdcdc" stroke-width="1.600"/><path d="M1 5v16h16" fill="none" stroke="#dcdcdc" stroke-width="1.600"/><path d="M12 1v10l3-2.500 3 2.500v-10z" fill="#dcdcdc"/></svg>
<div style="left:1458px;top:560px;width:42px;height:1px;background:#333;"></div>
<div style="left:1458px;top:561px;width:42px;height:1px;background:#4f4f4f;"></div>
<div style="left:1505px;top:115px;width:319px;height:965px;background:#484848;border-left:1px solid #333;"></div>
<div style="left:1505px;top:115px;width:319px;height:32px;background:#3b3b3b;"></div>
<div style="left:1505px;top:115px;width:49px;height:32px;background:#424242;border-right:1px solid #333;border-left:1px solid #333;"></div>
<div class="t" style="top:121.76px;font-size:13.2px;line-height:18.48px;color:#bdbdbd;font-weight:400;white-space:nowrap;left:1230.0px;width:600px;text-align:center;">颜色</div>
<div style="left:1554px;top:115px;width:48px;height:33px;background:#484848;border-right:1px solid #333;"></div>
<div class="t" style="top:121.76px;font-size:13.2px;line-height:18.48px;color:#f2f2f2;font-weight:500;white-space:nowrap;left:1278.5px;width:600px;text-align:center;">色板</div>
<div style="left:1602px;top:115px;width:48px;height:32px;background:#424242;border-right:1px solid #333;"></div>
<div class="t" style="top:121.76px;font-size:13.2px;line-height:18.48px;color:#bdbdbd;font-weight:400;white-space:nowrap;left:1326.5px;width:600px;text-align:center;">渐变</div>
<div style="left:1650px;top:115px;width:49px;height:32px;background:#424242;border-right:1px solid #333;"></div>
<div class="t" style="top:121.76px;font-size:13.2px;line-height:18.48px;color:#bdbdbd;font-weight:400;white-space:nowrap;left:1375.0px;width:600px;text-align:center;">图案</div>
<svg style="left:1804px;top:126px;" width="14" height="11" viewBox="0 0 14 11"><path d="M0 1h14M0 4h14M0 7h14M0 10h14" stroke="#ccc" stroke-width="1.500"/></svg>
<svg style="left:1514px;top:164px;" width="14" height="14" viewBox="0 0 14 14"><circle cx="5.500" cy="5.500" r="4" fill="none" stroke="#ddd" stroke-width="1.800"/><path d="M8.500 8.500l4.500 4.500" stroke="#ddd" stroke-width="2.300"/></svg>
<div style="left:1532px;top:161px;width:283px;height:20px;background:#414141;border:1px solid #363636;"></div>
<div class="t" style="top:161.76px;font-size:13.2px;line-height:18.48px;color:#8a8a8a;font-weight:400;white-space:nowrap;left:1535px;">搜索色板</div>
<div style="left:1514.0px;top:193.5px;width:19.5px;height:19px;background:#f8fbd0;"></div>
<div style="left:1535.6px;top:193.5px;width:19.5px;height:19px;background:#e8928f;"></div>
<div style="left:1557.2px;top:193.5px;width:19.5px;height:19px;background:#d97f84;"></div>
<div style="left:1578.8px;top:193.5px;width:19.5px;height:19px;background:#ffffff;"></div>
<div style="left:1600.4px;top:193.5px;width:19.5px;height:19px;background:#c0d18b;"></div>
<div style="left:1622.0px;top:193.5px;width:19.5px;height:19px;background:#c1d38a;"></div>
<div style="left:1643.6px;top:193.5px;width:19.5px;height:19px;background:#e3ad92;"></div>
<div style="left:1665.2px;top:193.5px;width:19.5px;height:19px;background:#4d6e3e;"></div>
<div style="left:1686.8px;top:193.5px;width:19.5px;height:19px;background:#f1f1f1;"></div>
<div style="left:1708.4px;top:193.5px;width:19.5px;height:19px;background:#000000;"></div>
<div style="left:1730.0px;top:193.5px;width:19.5px;height:19px;background:#0f1a6b;"></div>
<div style="left:1751.6px;top:193.5px;width:19.5px;height:19px;background:#fbf7f0;"></div>
<div style="left:1773.2px;top:193.5px;width:19.5px;height:19px;background:#f9f5ef;"></div>
<div style="left:1797px;top:194px;width:17px;height:18px;background:#454545;"></div>
<div style="left:1506px;top:222px;width:317px;height:1px;background:#3a3a3a;"></div>
<div style="left:1531.0px;top:224px;width:33.5px;height:21.5px;background:#9c6221;"></div>
<div style="left:1567.3px;top:224px;width:33.5px;height:21.5px;background:#85501a;"></div>
<div style="left:1603.6px;top:224px;width:33.5px;height:21.5px;background:#713e08;"></div>
<div style="left:1508px;top:248.5px;width:294px;height:31.5px;background:#3e3e3e;"></div>
<svg style="left:1514px;top:260.5px;" width="10" height="8" viewBox="0 0 10 8"><path d="M1 2 L5 6 L9 2" fill="none" stroke="#ccc" stroke-width="1.4"/></svg>
<svg style="left:1530px;top:256.5px;" width="18" height="15" viewBox="0 0 18 15"><path d="M0.800 14.200v-13.400h6l1.500 2.200h8.900v11.200z" fill="none" stroke="#d8d8d8" stroke-width="1.500"/><rect x="0.800" y="8" width="16.400" height="6.200" fill="#d8d8d8"/></svg>
<div class="t" style="top:255.05px;font-size:13.5px;line-height:18.90px;color:#f0f0f0;font-weight:500;white-space:nowrap;left:1557px;">二蛋</div>
<div style="left:1531.0px;top:283px;width:33.5px;height:34.5px;background:#f8d4a4;"></div>
<div style="left:1567.3px;top:283px;width:33.5px;height:34.5px;background:#fdc0a5;"></div>
<div style="left:1603.6px;top:283px;width:33.5px;height:34.5px;background:#feb496;"></div>
<div style="left:1508px;top:320px;width:294px;height:31.5px;background:#3e3e3e;"></div>
<svg style="left:1514px;top:330px;" width="8" height="12" viewBox="0 0 8 12"><path d="M2 1l4.500 5-4.500 5" fill="none" stroke="#ccc" stroke-width="1.400"/></svg>
<svg style="left:1530px;top:328px;" width="18" height="15" viewBox="0 0 18 15"><path d="M0 15v-15h7l1.500 2.500h9.500v12.500z" fill="#d0d0d0"/></svg>
<div class="t" style="top:326.55px;font-size:13.5px;line-height:18.90px;color:#f0f0f0;font-weight:500;white-space:nowrap;left:1557px;">二狗</div>
<div style="left:1508px;top:353.5px;width:294px;height:31.5px;background:#3e3e3e;"></div>
<svg style="left:1514px;top:365.5px;" width="10" height="8" viewBox="0 0 10 8"><path d="M1 2 L5 6 L9 2" fill="none" stroke="#ccc" stroke-width="1.4"/></svg>
<svg style="left:1530px;top:361.5px;" width="18" height="15" viewBox="0 0 18 15"><path d="M0.800 14.200v-13.400h6l1.500 2.200h8.900v11.200z" fill="none" stroke="#d8d8d8" stroke-width="1.500"/><rect x="0.800" y="8" width="16.400" height="6.200" fill="#d8d8d8"/></svg>
<div class="t" style="top:360.05px;font-size:13.5px;line-height:18.90px;color:#f0f0f0;font-weight:500;white-space:nowrap;left:1557px;">饱饱</div>
<div style="left:1531.0px;top:389px;width:33.5px;height:34px;background:#435e35;"></div>
<div style="left:1567.15px;top:389px;width:33.5px;height:34px;background:#c0d38a;"></div>
<div style="left:1603.3px;top:389px;width:33.5px;height:34px;background:#dcac92;"></div>
<div style="left:1639.45px;top:389px;width:33.5px;height:34px;background:#fcfdd8;border:2px solid #3ea6e6;box-shadow:0 0 0 1px #2b6f9e;"></div>
<div style="left:1675.6px;top:389px;width:33.5px;height:34px;background:#d47a80;"></div>
<div style="left:1711.75px;top:389px;width:33.5px;height:34px;background:#e58e8e;"></div>
<div style="left:1747.9px;top:389px;width:33.5px;height:34px;background:#ffffff;"></div>
<div style="left:1531px;top:425px;width:33.5px;height:33.5px;background:#f2f2f2;"></div>
<div style="left:1803px;top:222px;width:20px;height:238px;background:#454545;border-left:1px solid #3c3c3c;"></div>
<div style="left:1806px;top:412px;width:11px;height:43px;background:#5e5e5e;border-radius:6px;"></div>
<div style="left:1506px;top:460px;width:317px;height:1px;background:#3a3a3a;"></div>
<svg style="left:1705px;top:468px;" width="16" height="13" viewBox="0 0 16 13"><path d="M0 1.500h6l1.500 2h8.500v9.500h-16z" fill="#c8c8c8"/></svg>
<svg style="left:1740px;top:468px;" width="15" height="15" viewBox="0 0 15 15"><rect x="0.700" y="0.700" width="13.600" height="13.600" fill="none" stroke="#c8c8c8" stroke-width="1.400"/><path d="M7.500 4v7M4 7.500h7" stroke="#c8c8c8" stroke-width="1.400"/></svg>
<svg style="left:1776px;top:467px;" width="13" height="16" viewBox="0 0 13 16"><path d="M0 3h13M4.500 3v-2h4v2" fill="none" stroke="#c8c8c8" stroke-width="1.400"/><path d="M1.500 3.500l.8 12h8.400l.8-12" fill="none" stroke="#c8c8c8" stroke-width="1.400"/><path d="M4.500 6v7M6.500 6v7M8.500 6v7" stroke="#c8c8c8" stroke-width="1"/></svg>
<div style="left:1505px;top:490px;width:319px;height:4px;background:#3b3b3b;border-top:1px solid #333;"></div>
<div style="left:1505px;top:494px;width:319px;height:32px;background:#3b3b3b;"></div>
<div style="left:1505px;top:494px;width:49px;height:33px;background:#484848;border-right:1px solid #333;border-left:1px solid #333;"></div>
<div class="t" style="top:500.26px;font-size:13.2px;line-height:18.48px;color:#f2f2f2;font-weight:500;white-space:nowrap;left:1229.5px;width:600px;text-align:center;">通道</div>
<div style="left:1554px;top:494px;width:48px;height:32px;background:#424242;border-right:1px solid #333;"></div>
<div class="t" style="top:500.26px;font-size:13.2px;line-height:18.48px;color:#bdbdbd;font-weight:400;white-space:nowrap;left:1278px;width:600px;text-align:center;">路径</div>
<svg style="left:1804px;top:504px;" width="14" height="11" viewBox="0 0 14 11"><path d="M0 1h14M0 4h14M0 7h14M0 10h14" stroke="#ccc" stroke-width="1.500"/></svg>
<div style="left:1506px;top:527px;width:298px;height:521px;background:#434343;"></div>
<div style="left:1506px;top:533px;width:298px;height:43px;background:#5e5e5e;"></div>
<svg style="left:1510.5px;top:548.5px;" width="17" height="11" viewBox="0 0 17 11"><path d="M0.500 5.500c2-3.500 5-5 8-5s6 1.500 8 5c-2 3.500-5 5-8 5s-6-1.500-8-5z" fill="#ececec"/><circle cx="8.500" cy="5.500" r="3.200" fill="#5e5e5e"/><circle cx="8.500" cy="5.500" r="1.600" fill="#ececec"/></svg>
<div style="left:1536px;top:536px;width:37px;height:37.5px;background:#fff;border:1px solid #222;"></div>
<svg style="left:1536px;top:536px;" width="37" height="37.5" viewBox="0 0 37 37.500"><g transform="translate(0.50 1.20) scale(0.0600) translate(-452 -207)"><polygon points="664,338 693,302 731,299 753,319 783,321 816,307 849,298 876,318 891,352 908,360 927,381 944,391 947,413 942,432 946,456 934,485 918,498 900,514 884,540 895,572 905,606 924,616 948,630 942,663 916,692 876,697 840,695 804,696 766,692 720,698 688,696 656,692 627,688 596,686 577,690 551,689 531,700 516,680 520,650 545,622 577,600 596,560 608,540 613,522 622,498 587,489 584,462 596,430 593,406 609,391 602,378 625,368 650,352" fill="#bccb8e" stroke="#55703f" stroke-width="13.3"/><polygon points="767,561 798,545 833,561 852,595 867,629 856,669 831,694 764,694 776,661 764,638 743,625 753,601 773,574" fill="#faf7d6"/><ellipse cx="788" cy="452" rx="30" ry="30" fill="#cd777e"/><path d="M698 428C720 450 750 430 782 415C810 415 840 440 871 418M714 595C740 620 765 590 765 570M848 572C820 600 870 620 894 585M751 639C790 640 770 700 690 697" fill="none" stroke="#55703f" stroke-width="13.3"/></g></svg>
<div class="t" style="top:544.05px;font-size:13.5px;line-height:18.90px;color:#f4f4f4;font-weight:500;white-space:nowrap;left:1578px;">RGB</div>
<svg style="left:1775px;top:547.5px;" width="9" height="9" viewBox="0 0 9 9"><path d="M3 3h3v3h-3z M3 3v-1.200a1.200 1.200 0 1 0-1.200 1.200z M6 3h1.200a1.200 1.200 0 1 0-1.200-1.200z M6 6v1.200a1.200 1.200 0 1 0 1.200-1.200z M3 6h-1.200a1.200 1.200 0 1 0 1.200 1.200z" fill="none" stroke="#e8e8e8" stroke-width="1"/></svg>
<div class="t" style="top:545.35px;font-size:9.5px;line-height:13.30px;color:#f0f0f0;font-weight:700;white-space:nowrap;left:1785px;">~</div>
<div style="left:1506px;top:577.5px;width:298px;height:43px;background:#5e5e5e;"></div>
<svg style="left:1510.5px;top:593.0px;" width="17" height="11" viewBox="0 0 17 11"><path d="M0.500 5.500c2-3.500 5-5 8-5s6 1.500 8 5c-2 3.500-5 5-8 5s-6-1.500-8-5z" fill="#ececec"/><circle cx="8.500" cy="5.500" r="3.200" fill="#5e5e5e"/><circle cx="8.500" cy="5.500" r="1.600" fill="#ececec"/></svg>
<div style="left:1536px;top:580.5px;width:37px;height:37.5px;background:#fff;border:1px solid #222;"></div>
<svg style="left:1536px;top:580.5px;" width="37" height="37.5" viewBox="0 0 37 37.500"><g transform="translate(0.50 1.20) scale(0.0600) translate(-452 -207)"><polygon points="664,338 693,302 731,299 753,319 783,321 816,307 849,298 876,318 891,352 908,360 927,381 944,391 947,413 942,432 946,456 934,485 918,498 900,514 884,540 895,572 905,606 924,616 948,630 942,663 916,692 876,697 840,695 804,696 766,692 720,698 688,696 656,692 627,688 596,686 577,690 551,689 531,700 516,680 520,650 545,622 577,600 596,560 608,540 613,522 622,498 587,489 584,462 596,430 593,406 609,391 602,378 625,368 650,352" fill="#bdbdbd" stroke="#8f8f8f" stroke-width="13.3"/><polygon points="767,561 798,545 833,561 852,595 867,629 856,669 831,694 764,694 776,661 764,638 743,625 753,601 773,574" fill="#f4f4f4"/><ellipse cx="788" cy="452" rx="30" ry="30" fill="#9a9a9a"/></g></svg>
<div class="t" style="top:588.55px;font-size:13.5px;line-height:18.90px;color:#f4f4f4;font-weight:500;white-space:nowrap;left:1578px;">红</div>
<svg style="left:1775px;top:592.0px;" width="9" height="9" viewBox="0 0 9 9"><path d="M3 3h3v3h-3z M3 3v-1.200a1.200 1.200 0 1 0-1.200 1.200z M6 3h1.200a1.200 1.200 0 1 0-1.200-1.200z M6 6v1.200a1.200 1.200 0 1 0 1.200-1.200z M3 6h-1.200a1.200 1.200 0 1 0 1.200 1.200z" fill="none" stroke="#e8e8e8" stroke-width="1"/></svg>
<div class="t" style="top:589.85px;font-size:9.5px;line-height:13.30px;color:#f0f0f0;font-weight:700;white-space:nowrap;left:1785px;">1</div>
<div style="left:1506px;top:622px;width:298px;height:43px;background:#5e5e5e;"></div>
<svg style="left:1510.5px;top:637.5px;" width="17" height="11" viewBox="0 0 17 11"><path d="M0.500 5.500c2-3.500 5-5 8-5s6 1.500 8 5c-2 3.500-5 5-8 5s-6-1.500-8-5z" fill="#ececec"/><circle cx="8.500" cy="5.500" r="3.200" fill="#5e5e5e"/><circle cx="8.500" cy="5.500" r="1.600" fill="#ececec"/></svg>
<div style="left:1536px;top:625px;width:37px;height:37.5px;background:#fff;border:1px solid #222;"></div>
<svg style="left:1536px;top:625px;" width="37" height="37.5" viewBox="0 0 37 37.500"><g transform="translate(0.50 1.20) scale(0.0600) translate(-452 -207)"><polygon points="664,338 693,302 731,299 753,319 783,321 816,307 849,298 876,318 891,352 908,360 927,381 944,391 947,413 942,432 946,456 934,485 918,498 900,514 884,540 895,572 905,606 924,616 948,630 942,663 916,692 876,697 840,695 804,696 766,692 720,698 688,696 656,692 627,688 596,686 577,690 551,689 531,700 516,680 520,650 545,622 577,600 596,560 608,540 613,522 622,498 587,489 584,462 596,430 593,406 609,391 602,378 625,368 650,352" fill="#c9c9c9" stroke="#999" stroke-width="13.3"/><polygon points="767,561 798,545 833,561 852,595 867,629 856,669 831,694 764,694 776,661 764,638 743,625 753,601 773,574" fill="#f6f6f6"/><ellipse cx="788" cy="452" rx="30" ry="30" fill="#8a8a8a"/></g></svg>
<div class="t" style="top:633.05px;font-size:13.5px;line-height:18.90px;color:#f4f4f4;font-weight:500;white-space:nowrap;left:1578px;">绿</div>
<svg style="left:1775px;top:636.5px;" width="9" height="9" viewBox="0 0 9 9"><path d="M3 3h3v3h-3z M3 3v-1.200a1.200 1.200 0 1 0-1.200 1.200z M6 3h1.200a1.200 1.200 0 1 0-1.200-1.200z M6 6v1.200a1.200 1.200 0 1 0 1.200-1.200z M3 6h-1.200a1.200 1.200 0 1 0 1.200 1.200z" fill="none" stroke="#e8e8e8" stroke-width="1"/></svg>
<div class="t" style="top:634.35px;font-size:9.5px;line-height:13.30px;color:#f0f0f0;font-weight:700;white-space:nowrap;left:1785px;">2</div>
<div style="left:1506px;top:666.5px;width:298px;height:43px;background:#5e5e5e;"></div>
<svg style="left:1510.5px;top:682.0px;" width="17" height="11" viewBox="0 0 17 11"><path d="M0.500 5.500c2-3.500 5-5 8-5s6 1.500 8 5c-2 3.500-5 5-8 5s-6-1.500-8-5z" fill="#ececec"/><circle cx="8.500" cy="5.500" r="3.200" fill="#5e5e5e"/><circle cx="8.500" cy="5.500" r="1.600" fill="#ececec"/></svg>
<div style="left:1536px;top:669.5px;width:37px;height:37.5px;background:#fff;border:1px solid #222;"></div>
<svg style="left:1536px;top:669.5px;" width="37" height="37.5" viewBox="0 0 37 37.500"><g transform="translate(0.50 1.20) scale(0.0600) translate(-452 -207)"><polygon points="664,338 693,302 731,299 753,319 783,321 816,307 849,298 876,318 891,352 908,360 927,381 944,391 947,413 942,432 946,456 934,485 918,498 900,514 884,540 895,572 905,606 924,616 948,630 942,663 916,692 876,697 840,695 804,696 766,692 720,698 688,696 656,692 627,688 596,686 577,690 551,689 531,700 516,680 520,650 545,622 577,600 596,560 608,540 613,522 622,498 587,489 584,462 596,430 593,406 609,391 602,378 625,368 650,352" fill="#909090" stroke="#6f6f6f" stroke-width="13.3"/><polygon points="767,561 798,545 833,561 852,595 867,629 856,669 831,694 764,694 776,661 764,638 743,625 753,601 773,574" fill="#d8d8d8"/><ellipse cx="788" cy="452" rx="30" ry="30" fill="#858585"/></g></svg>
<div class="t" style="top:677.55px;font-size:13.5px;line-height:18.90px;color:#f4f4f4;font-weight:500;white-space:nowrap;left:1578px;">蓝</div>
<svg style="left:1775px;top:681.0px;" width="9" height="9" viewBox="0 0 9 9"><path d="M3 3h3v3h-3z M3 3v-1.200a1.200 1.200 0 1 0-1.200 1.200z M6 3h1.200a1.200 1.200 0 1 0-1.200-1.200z M6 6v1.200a1.200 1.200 0 1 0 1.200-1.200z M3 6h-1.200a1.200 1.200 0 1 0 1.200 1.200z" fill="none" stroke="#e8e8e8" stroke-width="1"/></svg>
<div class="t" style="top:678.85px;font-size:9.5px;line-height:13.30px;color:#f0f0f0;font-weight:700;white-space:nowrap;left:1785px;">3</div>
<div style="left:1506px;top:1048px;width:317px;height:32px;background:#484848;border-top:1px solid #333;"></div>
<svg style="left:1665px;top:1056px;" width="15" height="15" viewBox="0 0 15 15"><circle cx="7.500" cy="7.500" r="6" fill="none" stroke="#8a8a8a" stroke-width="1.600" stroke-dasharray="2.300 2.400"/></svg>
<svg style="left:1701px;top:1057px;" width="16" height="14" viewBox="0 0 16 14"><rect width="16" height="14" rx="1" fill="#8a8a8a"/><circle cx="8" cy="7" r="4" fill="#484848"/></svg>
<svg style="left:1739px;top:1056px;" width="15" height="15" viewBox="0 0 15 15"><rect x="0.700" y="0.700" width="13.600" height="13.600" fill="none" stroke="#bdbdbd" stroke-width="1.400"/><path d="M7.500 4v7M4 7.500h7" stroke="#bdbdbd" stroke-width="1.400"/></svg>
<svg style="left:1775px;top:1055px;" width="13" height="16" viewBox="0 0 13 16"><path d="M0 3h13M4.500 3v-2h4v2" fill="none" stroke="#8a8a8a" stroke-width="1.400"/><path d="M1.500 3.500l.8 12h8.400l.8-12" fill="none" stroke="#8a8a8a" stroke-width="1.400"/><path d="M4.500 6v7M6.500 6v7M8.500 6v7" stroke="#8a8a8a" stroke-width="1"/></svg>
<div class="t" style="left:702px;top:520px;height:42px;line-height:42px;font-size:27.400px;font-weight:900;color:rgb(62,112,228);opacity:0.720;-webkit-text-stroke:0.700px rgb(62,112,228);white-space:nowrap;font-family:'Liberation Sans','Noto Sans CJK SC',sans-serif;"><span style="letter-spacing:0.400px;">技艺学习素材网</span><span style="display:inline-block;width:29px;"></span><span style="display:inline-block;width:27.800px;text-align:center;font-size:29px;">w</span><span style="display:inline-block;width:27.800px;text-align:center;font-size:29px;">w</span><span style="display:inline-block;width:27.800px;text-align:center;font-size:29px;">w</span><span style="display:inline-block;width:27.800px;text-align:center;font-size:29px;">.</span><span style="display:inline-block;width:27.800px;text-align:center;font-size:29px;">j</span><span style="display:inline-block;width:27.800px;text-align:center;font-size:29px;">y</span><span style="display:inline-block;width:27.800px;text-align:center;font-size:29px;">3</span><span style="display:inline-block;width:27.800px;text-align:center;font-size:29px;">d</span><span style="display:inline-block;width:27.800px;text-align:center;font-size:29px;">.</span><span style="display:inline-block;width:27.800px;text-align:center;font-size:29px;">c</span><span style="display:inline-block;width:27.800px;text-align:center;font-size:29px;">n</span></div>
<div style="left:96px;top:860px;width:1728px;height:220px;background:linear-gradient(180deg,rgba(0,0,0,0.000) 0.00%,rgba(0,0,0,0.100) 18.18%,rgba(0,0,0,0.220) 30.45%,rgba(0,0,0,0.340) 43.18%,rgba(0,0,0,0.390) 50.00%,rgba(0,0,0,0.440) 63.64%,rgba(0,0,0,0.520) 81.82%,rgba(0,0,0,0.580) 92.27%,rgba(0,0,0,0.620) 100.00%);"></div>
<div style="left:0px;top:0px;width:96px;height:1080px;background:#000;"></div>
<div style="left:1824px;top:0px;width:96px;height:1080px;background:#000;"></div>
<svg style="left:16px;top:8.3px;" width="16" height="14" viewBox="0 0 16 14"><path d="M14 7H2.500M7.600 1.500L2.200 7l5.400 5.500" fill="none" stroke="#fff" stroke-width="1.400"/></svg>
<div style="left:838px;top:930px;width:243px;height:103px;background:rgba(0,0,0,0.730);border-radius:14px;"></div>
<div style="left:24px;top:968px;width:1483px;height:2.5px;background:#57a0e0;"></div>
<div style="left:1527px;top:968.5px;width:369px;height:1.5px;background:#7a7a7a;"></div>
<div style="left:1507px;top:958.5px;width:20.5px;height:20.5px;background:none;border:2.500px solid #57a0e0;border-radius:50%;"></div>
<div class="t" style="left:900px;top:940px;width:120px;text-align:center;font-size:76px;line-height:84px;color:#b8b8b8;">b</div>
<div class="t" style="top:982.90px;font-size:12px;line-height:16.80px;color:#fff;font-weight:400;white-space:nowrap;left:24px;letter-spacing:-0.1px;">0:44:11</div>
<div class="t" style="top:982.90px;font-size:12px;line-height:16.80px;color:#fff;font-weight:400;white-space:nowrap;right:24px;letter-spacing:-0.1px;">0:11:00</div>
<svg style="left:37px;top:1014px;" width="24" height="22" viewBox="0 0 24 22"><path d="M2.500 7.500h4l5-4.500v16l-5-4.500h-4z" fill="none" stroke="#fff" stroke-width="1.400" stroke-linejoin="round"/><path d="M14.500 8a4.500 4.500 0 0 1 0 6M17 5a8.500 8.500 0 0 1 0 12M19.500 2.200a12.500 12.500 0 0 1 0 17.600" fill="none" stroke="#fff" stroke-width="1.400"/></svg>
<svg style="left:88px;top:1015px;" width="22" height="20" viewBox="0 0 22 20"><path d="M0.800 0.800h20.400v13h-14.500l-3.700 4v-4h-2.200z" fill="none" stroke="#fff" stroke-width="1.500"/><path d="M3.500 8.200h15M3.500 11h15" stroke="#fff" stroke-width="1.500"/></svg>
<svg style="left:898px;top:1015px;" width="24" height="22" viewBox="0 0 24 22"><path d="M4.500 8.500a8.500 8.500 0 0 1 16 1.500" fill="none" stroke="#fff" stroke-width="1.500"/><path d="M3.500 3.500v5.500h5.500" fill="none" stroke="#fff" stroke-width="1.500"/></svg>
<div class="t" style="top:1020.45px;font-size:11.5px;line-height:16.10px;color:#fff;font-weight:400;white-space:nowrap;left:610px;width:600px;text-align:center;">10</div>
<div style="left:956px;top:1017px;width:1.8px;height:16.5px;background:#fff;"></div>
<div style="left:963.5px;top:1017px;width:1.8px;height:16.5px;background:#fff;"></div>
<svg style="left:998px;top:1015px;" width="24" height="22" viewBox="0 0 24 22"><path d="M19.500 8.500a8.500 8.500 0 0 0-16 1.500" fill="none" stroke="#fff" stroke-width="1.500"/><path d="M20.500 3.500v5.500h-5.500" fill="none" stroke="#fff" stroke-width="1.500"/></svg>
<div class="t" style="top:1020.45px;font-size:11.5px;line-height:16.10px;color:#fff;font-weight:400;white-space:nowrap;left:710px;width:600px;text-align:center;">30</div>
<svg style="left:1710px;top:1013px;" width="22" height="24" viewBox="0 0 22 24"><path d="M16 2.500a2.800 2.800 0 0 1 4 4L7.500 19l-5.500 1.500 1.500-5.500z M14 4.500l4 4 M3.500 15l4 4" fill="none" stroke="#fff" stroke-width="1.500" stroke-linejoin="round"/></svg>
<svg style="left:1760.5px;top:1018px;" width="21" height="14" viewBox="0 0 21 14"><rect x="0.900" y="0.900" width="19.200" height="12.200" fill="none" stroke="#fff" stroke-width="1.800"/><rect x="9" y="5.500" width="8" height="5" fill="none" stroke="#fff" stroke-width="1.400"/></svg>
<svg style="left:1810px;top:1014px;" width="22" height="22" viewBox="0 0 22 22"><path d="M21 1l-7.500 7.500M13.500 3v5.500h5.500M1 21l7.500-7.500M3 13.500h5.500v5.500" fill="none" stroke="#fff" stroke-width="1.500"/></svg>
<svg style="left:1860px;top:1022px;" width="22" height="5" viewBox="0 0 22 5"><circle cx="2.500" cy="2.500" r="1.300" fill="#fff"/><circle cx="11" cy="2.500" r="1.300" fill="#fff"/><circle cx="19.500" cy="2.500" r="1.300" fill="#fff"/></svg>
</div></body></html>
